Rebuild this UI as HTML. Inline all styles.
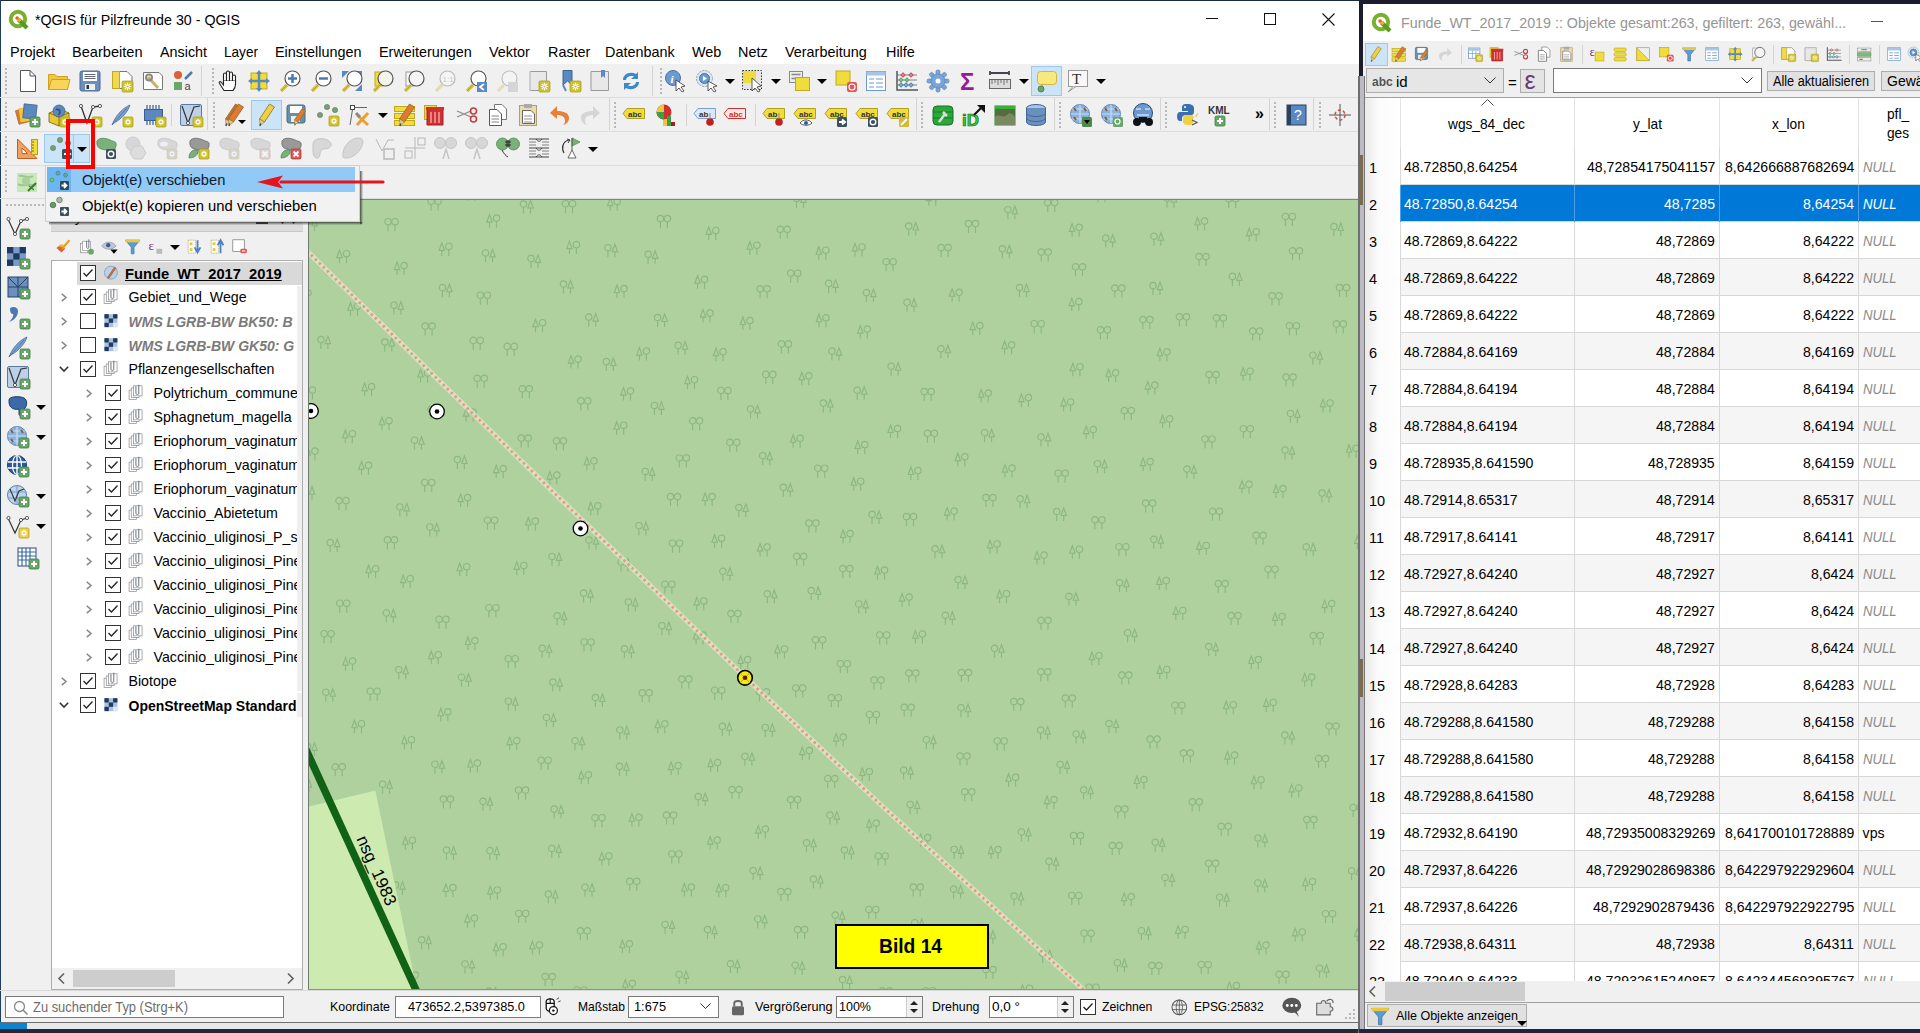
<!DOCTYPE html><html><head><meta charset="utf-8"><style>
html,body{margin:0;padding:0;}
body{width:1920px;height:1033px;position:relative;overflow:hidden;background:#f0f0f0;font-family:"Liberation Sans",sans-serif;}
div{position:absolute;box-sizing:border-box;}
.t{white-space:nowrap;}
svg{overflow:visible}
</style></head><body>
<div style="left:0px;top:0px;width:1363px;height:1033px;background:#f0f0f0;"></div>
<div style="left:0px;top:0px;width:1359px;height:38px;background:#fff;"></div>
<div style="left:0px;top:38px;width:1359px;height:26px;background:#fff;"></div>
<div style="left:0px;top:0px;width:1363px;height:1px;background:#1a2b3c;"></div>
<div style="left:0px;top:0px;width:1px;height:1022px;background:#1f3d5c;"></div>
<div style="left:1359px;top:0px;width:4px;height:76px;background:#1b1d2e;"></div>
<div class="t" style="left:35.00px;top:12.30px;font-size:15px;line-height:15px;color:#000;transform:scaleX(0.9495);transform-origin:0 0;">*QGIS für Pilzfreunde 30 - QGIS</div>
<div style="left:1206px;top:18px;width:12px;height:1px;background:#111"></div>
<div style="left:1264px;top:13px;width:12px;height:12px;border:1px solid #111"></div>
<svg style="position:absolute;left:1322px;top:13px;" width="13" height="13" viewBox="0 0 13 13"><path d="M0.5 0.5L12.5 12.5M12.5 0.5L0.5 12.5" stroke="#111" stroke-width="1.1"/></svg>
<div class="t" style="left:10.00px;top:44.30px;font-size:15px;line-height:15px;color:#000;transform:scaleX(0.9640);transform-origin:0 0;">Projekt</div>
<div class="t" style="left:72.00px;top:44.30px;font-size:15px;line-height:15px;color:#000;transform:scaleX(0.9718);transform-origin:0 0;">Bearbeiten</div>
<div class="t" style="left:159.70px;top:44.30px;font-size:15px;line-height:15px;color:#000;transform:scaleX(0.9555);transform-origin:0 0;">Ansicht</div>
<div class="t" style="left:223.90px;top:44.30px;font-size:15px;line-height:15px;color:#000;transform:scaleX(0.9062);transform-origin:0 0;">Layer</div>
<div class="t" style="left:275.40px;top:44.30px;font-size:15px;line-height:15px;color:#000;transform:scaleX(0.9600);transform-origin:0 0;">Einstellungen</div>
<div class="t" style="left:378.75px;top:44.30px;font-size:15px;line-height:15px;color:#000;transform:scaleX(0.9600);transform-origin:0 0;">Erweiterungen</div>
<div class="t" style="left:489.00px;top:44.30px;font-size:15px;line-height:15px;color:#000;transform:scaleX(0.9600);transform-origin:0 0;">Vektor</div>
<div class="t" style="left:547.50px;top:44.30px;font-size:15px;line-height:15px;color:#000;transform:scaleX(0.9600);transform-origin:0 0;">Raster</div>
<div class="t" style="left:604.80px;top:44.30px;font-size:15px;line-height:15px;color:#000;transform:scaleX(0.9600);transform-origin:0 0;">Datenbank</div>
<div class="t" style="left:692.00px;top:44.30px;font-size:15px;line-height:15px;color:#000;transform:scaleX(0.9600);transform-origin:0 0;">Web</div>
<div class="t" style="left:738.00px;top:44.30px;font-size:15px;line-height:15px;color:#000;transform:scaleX(0.9600);transform-origin:0 0;">Netz</div>
<div class="t" style="left:785.00px;top:44.30px;font-size:15px;line-height:15px;color:#000;transform:scaleX(0.9600);transform-origin:0 0;">Verarbeitung</div>
<div class="t" style="left:886.00px;top:44.30px;font-size:15px;line-height:15px;color:#000;transform:scaleX(0.9600);transform-origin:0 0;">Hilfe</div>
<div style="left:0px;top:97px;width:1359px;height:1px;background:#dcdcdc;"></div>
<div style="left:0px;top:131px;width:1359px;height:1px;background:#dcdcdc;"></div>
<div style="left:0px;top:165px;width:1359px;height:1px;background:#dcdcdc;"></div>
<div style="left:0px;top:198px;width:1359px;height:1px;background:#dcdcdc;"></div>
<div style="left:308px;top:199px;width:1050px;height:791px;background:#aed19e;"></div>
<div style="left:308px;top:199px;width:1050px;height:791px;overflow:hidden;background:#aed19e;"><svg width="1050" height="791" style="position:absolute;left:0;top:0"><g transform="translate(652.7,588.3)" fill="none" stroke="#8db780" stroke-width="1.15"><circle cx="4" cy="4.5" r="3.2"/><path d="M4 7.7V14"/><circle cx="11" cy="4.5" r="3.2"/><path d="M11 7.7V14"/></g><g transform="translate(685.2,537.4)" fill="none" stroke="#8db780" stroke-width="1.15"><circle cx="4" cy="4.5" r="3.2"/><path d="M4 7.7V14"/><circle cx="11" cy="4.5" r="3.2"/><path d="M11 7.7V14"/></g><g transform="translate(614.4,536.2)" fill="none" stroke="#8db780" stroke-width="1.15"><circle cx="4" cy="4.5" r="3.2"/><path d="M4 7.7V14"/><path d="M11 1L8.3 8.5H13.7Z"/><path d="M11 8.5V14"/></g><g transform="translate(608.7,634.1)" fill="none" stroke="#8db780" stroke-width="1.15"><path d="M4 1L1.3 8.5H6.7Z"/><path d="M4 8.5V14"/><circle cx="11" cy="4.5" r="3.2"/><path d="M11 7.7V14"/></g><g transform="translate(557.2,619.6)" fill="none" stroke="#8db780" stroke-width="1.15"><path d="M4 1L1.3 8.5H6.7Z"/><path d="M4 8.5V14"/><circle cx="11" cy="4.5" r="3.2"/><path d="M11 7.7V14"/></g><g transform="translate(679.0,646.1)" fill="none" stroke="#8db780" stroke-width="1.15"><path d="M4 1L1.3 8.5H6.7Z"/><path d="M4 8.5V14"/><circle cx="11" cy="4.5" r="3.2"/><path d="M11 7.7V14"/></g><g transform="translate(641.6,685.6)" fill="none" stroke="#8db780" stroke-width="1.15"><circle cx="4" cy="4.5" r="3.2"/><path d="M4 7.7V14"/><path d="M11 1L8.3 8.5H13.7Z"/><path d="M11 8.5V14"/></g><g transform="translate(649.0,504.2)" fill="none" stroke="#8db780" stroke-width="1.15"><circle cx="4" cy="4.5" r="3.2"/><path d="M4 7.7V14"/><path d="M11 1L8.3 8.5H13.7Z"/><path d="M11 8.5V14"/></g><g transform="translate(598.1,600.9)" fill="none" stroke="#8db780" stroke-width="1.15"><circle cx="4" cy="4.5" r="3.2"/><path d="M4 7.7V14"/><path d="M11 1L8.3 8.5H13.7Z"/><path d="M11 8.5V14"/></g><g transform="translate(550.3,568.0)" fill="none" stroke="#8db780" stroke-width="1.15"><path d="M4 1L1.3 8.5H6.7Z"/><path d="M4 8.5V14"/><circle cx="11" cy="4.5" r="3.2"/><path d="M11 7.7V14"/></g><g transform="translate(748.1,560.9)" fill="none" stroke="#8db780" stroke-width="1.15"><circle cx="4" cy="4.5" r="3.2"/><path d="M4 7.7V14"/><path d="M11 1L8.3 8.5H13.7Z"/><path d="M11 8.5V14"/></g><g transform="translate(696.6,573.8)" fill="none" stroke="#8db780" stroke-width="1.15"><path d="M4 1L1.3 8.5H6.7Z"/><path d="M4 8.5V14"/><circle cx="11" cy="4.5" r="3.2"/><path d="M11 7.7V14"/></g><g transform="translate(702.0,692.5)" fill="none" stroke="#8db780" stroke-width="1.15"><circle cx="4" cy="4.5" r="3.2"/><path d="M4 7.7V14"/><path d="M11 1L8.3 8.5H13.7Z"/><path d="M11 8.5V14"/></g><g transform="translate(737.0,657.8)" fill="none" stroke="#8db780" stroke-width="1.15"><circle cx="4" cy="4.5" r="3.2"/><path d="M4 7.7V14"/><path d="M11 1L8.3 8.5H13.7Z"/><path d="M11 8.5V14"/></g><g transform="translate(709.4,628.4)" fill="none" stroke="#8db780" stroke-width="1.15"><circle cx="4" cy="4.5" r="3.2"/><path d="M4 7.7V14"/><path d="M11 1L8.3 8.5H13.7Z"/><path d="M11 8.5V14"/></g><g transform="translate(701.8,498.0)" fill="none" stroke="#8db780" stroke-width="1.15"><circle cx="4" cy="4.5" r="3.2"/><path d="M4 7.7V14"/><circle cx="11" cy="4.5" r="3.2"/><path d="M11 7.7V14"/></g><g transform="translate(515.7,575.1)" fill="none" stroke="#8db780" stroke-width="1.15"><circle cx="4" cy="4.5" r="3.2"/><path d="M4 7.7V14"/><circle cx="11" cy="4.5" r="3.2"/><path d="M11 7.7V14"/></g><g transform="translate(601.2,683.5)" fill="none" stroke="#8db780" stroke-width="1.15"><circle cx="4" cy="4.5" r="3.2"/><path d="M4 7.7V14"/><circle cx="11" cy="4.5" r="3.2"/><path d="M11 7.7V14"/></g><g transform="translate(517.9,611.6)" fill="none" stroke="#8db780" stroke-width="1.15"><circle cx="4" cy="4.5" r="3.2"/><path d="M4 7.7V14"/><path d="M11 1L8.3 8.5H13.7Z"/><path d="M11 8.5V14"/></g><g transform="translate(728.8,468.3)" fill="none" stroke="#8db780" stroke-width="1.15"><circle cx="4" cy="4.5" r="3.2"/><path d="M4 7.7V14"/><circle cx="11" cy="4.5" r="3.2"/><path d="M11 7.7V14"/></g><g transform="translate(682.5,444.8)" fill="none" stroke="#8db780" stroke-width="1.15"><circle cx="4" cy="4.5" r="3.2"/><path d="M4 7.7V14"/><path d="M11 1L8.3 8.5H13.7Z"/><path d="M11 8.5V14"/></g><g transform="translate(557.4,510.9)" fill="none" stroke="#8db780" stroke-width="1.15"><circle cx="4" cy="4.5" r="3.2"/><path d="M4 7.7V14"/><circle cx="11" cy="4.5" r="3.2"/><path d="M11 7.7V14"/></g><g transform="translate(490.3,547.1)" fill="none" stroke="#8db780" stroke-width="1.15"><path d="M4 1L1.3 8.5H6.7Z"/><path d="M4 8.5V14"/><circle cx="11" cy="4.5" r="3.2"/><path d="M11 7.7V14"/></g><g transform="translate(591.6,566.6)" fill="none" stroke="#8db780" stroke-width="1.15"><circle cx="4" cy="4.5" r="3.2"/><path d="M4 7.7V14"/><path d="M11 1L8.3 8.5H13.7Z"/><path d="M11 8.5V14"/></g><g transform="translate(800.2,642.1)" fill="none" stroke="#8db780" stroke-width="1.15"><circle cx="4" cy="4.5" r="3.2"/><path d="M4 7.7V14"/><circle cx="11" cy="4.5" r="3.2"/><path d="M11 7.7V14"/></g><g transform="translate(633.3,411.8)" fill="none" stroke="#8db780" stroke-width="1.15"><circle cx="4" cy="4.5" r="3.2"/><path d="M4 7.7V14"/><path d="M11 1L8.3 8.5H13.7Z"/><path d="M11 8.5V14"/></g><g transform="translate(764.1,530.4)" fill="none" stroke="#8db780" stroke-width="1.15"><circle cx="4" cy="4.5" r="3.2"/><path d="M4 7.7V14"/><path d="M11 1L8.3 8.5H13.7Z"/><path d="M11 8.5V14"/></g><g transform="translate(478.6,596.0)" fill="none" stroke="#8db780" stroke-width="1.15"><circle cx="4" cy="4.5" r="3.2"/><path d="M4 7.7V14"/><circle cx="11" cy="4.5" r="3.2"/><path d="M11 7.7V14"/></g><g transform="translate(524.2,533.6)" fill="none" stroke="#8db780" stroke-width="1.15"><path d="M4 1L1.3 8.5H6.7Z"/><path d="M4 8.5V14"/><circle cx="11" cy="4.5" r="3.2"/><path d="M11 7.7V14"/></g><g transform="translate(759.8,691.9)" fill="none" stroke="#8db780" stroke-width="1.15"><circle cx="4" cy="4.5" r="3.2"/><path d="M4 7.7V14"/><circle cx="11" cy="4.5" r="3.2"/><path d="M11 7.7V14"/></g><g transform="translate(648.0,552.6)" fill="none" stroke="#8db780" stroke-width="1.15"><circle cx="4" cy="4.5" r="3.2"/><path d="M4 7.7V14"/><circle cx="11" cy="4.5" r="3.2"/><path d="M11 7.7V14"/></g><g transform="translate(673.9,730.7)" fill="none" stroke="#8db780" stroke-width="1.15"><circle cx="4" cy="4.5" r="3.2"/><path d="M4 7.7V14"/><path d="M11 1L8.3 8.5H13.7Z"/><path d="M11 8.5V14"/></g><g transform="translate(501.4,675.5)" fill="none" stroke="#8db780" stroke-width="1.15"><circle cx="4" cy="4.5" r="3.2"/><path d="M4 7.7V14"/><path d="M11 1L8.3 8.5H13.7Z"/><path d="M11 8.5V14"/></g><g transform="translate(729.0,416.8)" fill="none" stroke="#8db780" stroke-width="1.15"><circle cx="4" cy="4.5" r="3.2"/><path d="M4 7.7V14"/><circle cx="11" cy="4.5" r="3.2"/><path d="M11 7.7V14"/></g><g transform="translate(771.6,586.3)" fill="none" stroke="#8db780" stroke-width="1.15"><circle cx="4" cy="4.5" r="3.2"/><path d="M4 7.7V14"/><path d="M11 1L8.3 8.5H13.7Z"/><path d="M11 8.5V14"/></g><g transform="translate(494.5,639.3)" fill="none" stroke="#8db780" stroke-width="1.15"><circle cx="4" cy="4.5" r="3.2"/><path d="M4 7.7V14"/><path d="M11 1L8.3 8.5H13.7Z"/><path d="M11 8.5V14"/></g><g transform="translate(523.2,711.6)" fill="none" stroke="#8db780" stroke-width="1.15"><circle cx="4" cy="4.5" r="3.2"/><path d="M4 7.7V14"/><path d="M11 1L8.3 8.5H13.7Z"/><path d="M11 8.5V14"/></g><g transform="translate(753.3,494.6)" fill="none" stroke="#8db780" stroke-width="1.15"><circle cx="4" cy="4.5" r="3.2"/><path d="M4 7.7V14"/><circle cx="11" cy="4.5" r="3.2"/><path d="M11 7.7V14"/></g><g transform="translate(687.5,390.2)" fill="none" stroke="#8db780" stroke-width="1.15"><path d="M4 1L1.3 8.5H6.7Z"/><path d="M4 8.5V14"/><circle cx="11" cy="4.5" r="3.2"/><path d="M11 7.7V14"/></g><g transform="translate(602.7,719.2)" fill="none" stroke="#8db780" stroke-width="1.15"><circle cx="4" cy="4.5" r="3.2"/><path d="M4 7.7V14"/><path d="M11 1L8.3 8.5H13.7Z"/><path d="M11 8.5V14"/></g><g transform="translate(483.7,484.4)" fill="none" stroke="#8db780" stroke-width="1.15"><circle cx="4" cy="4.5" r="3.2"/><path d="M4 7.7V14"/><circle cx="11" cy="4.5" r="3.2"/><path d="M11 7.7V14"/></g><g transform="translate(735.0,596.1)" fill="none" stroke="#8db780" stroke-width="1.15"><path d="M4 1L1.3 8.5H6.7Z"/><path d="M4 8.5V14"/><circle cx="11" cy="4.5" r="3.2"/><path d="M11 7.7V14"/></g><g transform="translate(797.0,520.0)" fill="none" stroke="#8db780" stroke-width="1.15"><circle cx="4" cy="4.5" r="3.2"/><path d="M4 7.7V14"/><path d="M11 1L8.3 8.5H13.7Z"/><path d="M11 8.5V14"/></g><g transform="translate(809.8,471.6)" fill="none" stroke="#8db780" stroke-width="1.15"><circle cx="4" cy="4.5" r="3.2"/><path d="M4 7.7V14"/><circle cx="11" cy="4.5" r="3.2"/><path d="M11 7.7V14"/></g><g transform="translate(728.6,526.6)" fill="none" stroke="#8db780" stroke-width="1.15"><circle cx="4" cy="4.5" r="3.2"/><path d="M4 7.7V14"/><path d="M11 1L8.3 8.5H13.7Z"/><path d="M11 8.5V14"/></g><g transform="translate(824.9,576.0)" fill="none" stroke="#8db780" stroke-width="1.15"><path d="M4 1L1.3 8.5H6.7Z"/><path d="M4 8.5V14"/><circle cx="11" cy="4.5" r="3.2"/><path d="M11 7.7V14"/></g><g transform="translate(642.1,645.9)" fill="none" stroke="#8db780" stroke-width="1.15"><circle cx="4" cy="4.5" r="3.2"/><path d="M4 7.7V14"/><path d="M11 1L8.3 8.5H13.7Z"/><path d="M11 8.5V14"/></g><g transform="translate(566.2,652.4)" fill="none" stroke="#8db780" stroke-width="1.15"><circle cx="4" cy="4.5" r="3.2"/><path d="M4 7.7V14"/><circle cx="11" cy="4.5" r="3.2"/><path d="M11 7.7V14"/></g><g transform="translate(453.3,523.9)" fill="none" stroke="#8db780" stroke-width="1.15"><circle cx="4" cy="4.5" r="3.2"/><path d="M4 7.7V14"/><path d="M11 1L8.3 8.5H13.7Z"/><path d="M11 8.5V14"/></g><g transform="translate(649.4,469.0)" fill="none" stroke="#8db780" stroke-width="1.15"><circle cx="4" cy="4.5" r="3.2"/><path d="M4 7.7V14"/><circle cx="11" cy="4.5" r="3.2"/><path d="M11 7.7V14"/></g><g transform="translate(592.2,503.8)" fill="none" stroke="#8db780" stroke-width="1.15"><circle cx="4" cy="4.5" r="3.2"/><path d="M4 7.7V14"/><circle cx="11" cy="4.5" r="3.2"/><path d="M11 7.7V14"/></g><g transform="translate(446.3,625.6)" fill="none" stroke="#8db780" stroke-width="1.15"><path d="M4 1L1.3 8.5H6.7Z"/><path d="M4 8.5V14"/><circle cx="11" cy="4.5" r="3.2"/><path d="M11 7.7V14"/></g><g transform="translate(779.9,452.2)" fill="none" stroke="#8db780" stroke-width="1.15"><path d="M4 1L1.3 8.5H6.7Z"/><path d="M4 8.5V14"/><circle cx="11" cy="4.5" r="3.2"/><path d="M11 7.7V14"/></g><g transform="translate(562.0,476.5)" fill="none" stroke="#8db780" stroke-width="1.15"><circle cx="4" cy="4.5" r="3.2"/><path d="M4 7.7V14"/><circle cx="11" cy="4.5" r="3.2"/><path d="M11 7.7V14"/></g><g transform="translate(483.1,761.7)" fill="none" stroke="#8db780" stroke-width="1.15"><circle cx="4" cy="4.5" r="3.2"/><path d="M4 7.7V14"/><path d="M11 1L8.3 8.5H13.7Z"/><path d="M11 8.5V14"/></g><g transform="translate(853.0,673.9)" fill="none" stroke="#8db780" stroke-width="1.15"><circle cx="4" cy="4.5" r="3.2"/><path d="M4 7.7V14"/><path d="M11 1L8.3 8.5H13.7Z"/><path d="M11 8.5V14"/></g><g transform="translate(567.7,431.4)" fill="none" stroke="#8db780" stroke-width="1.15"><circle cx="4" cy="4.5" r="3.2"/><path d="M4 7.7V14"/><circle cx="11" cy="4.5" r="3.2"/><path d="M11 7.7V14"/></g><g transform="translate(871.4,549.5)" fill="none" stroke="#8db780" stroke-width="1.15"><circle cx="4" cy="4.5" r="3.2"/><path d="M4 7.7V14"/><circle cx="11" cy="4.5" r="3.2"/><path d="M11 7.7V14"/></g><g transform="translate(838.0,535.6)" fill="none" stroke="#8db780" stroke-width="1.15"><circle cx="4" cy="4.5" r="3.2"/><path d="M4 7.7V14"/><circle cx="11" cy="4.5" r="3.2"/><path d="M11 7.7V14"/></g><g transform="translate(847.8,465.9)" fill="none" stroke="#8db780" stroke-width="1.15"><path d="M4 1L1.3 8.5H6.7Z"/><path d="M4 8.5V14"/><circle cx="11" cy="4.5" r="3.2"/><path d="M11 7.7V14"/></g><g transform="translate(468.9,688.0)" fill="none" stroke="#8db780" stroke-width="1.15"><circle cx="4" cy="4.5" r="3.2"/><path d="M4 7.7V14"/><circle cx="11" cy="4.5" r="3.2"/><path d="M11 7.7V14"/></g><g transform="translate(637.5,748.0)" fill="none" stroke="#8db780" stroke-width="1.15"><circle cx="4" cy="4.5" r="3.2"/><path d="M4 7.7V14"/><path d="M11 1L8.3 8.5H13.7Z"/><path d="M11 8.5V14"/></g><g transform="translate(556.8,705.9)" fill="none" stroke="#8db780" stroke-width="1.15"><circle cx="4" cy="4.5" r="3.2"/><path d="M4 7.7V14"/><circle cx="11" cy="4.5" r="3.2"/><path d="M11 7.7V14"/></g><g transform="translate(596.8,469.5)" fill="none" stroke="#8db780" stroke-width="1.15"><circle cx="4" cy="4.5" r="3.2"/><path d="M4 7.7V14"/><circle cx="11" cy="4.5" r="3.2"/><path d="M11 7.7V14"/></g><g transform="translate(756.9,392.8)" fill="none" stroke="#8db780" stroke-width="1.15"><circle cx="4" cy="4.5" r="3.2"/><path d="M4 7.7V14"/><path d="M11 1L8.3 8.5H13.7Z"/><path d="M11 8.5V14"/></g><g transform="translate(418.4,760.3)" fill="none" stroke="#8db780" stroke-width="1.15"><circle cx="4" cy="4.5" r="3.2"/><path d="M4 7.7V14"/><path d="M11 1L8.3 8.5H13.7Z"/><path d="M11 8.5V14"/></g><g transform="translate(613.7,787.2)" fill="none" stroke="#8db780" stroke-width="1.15"><circle cx="4" cy="4.5" r="3.2"/><path d="M4 7.7V14"/><circle cx="11" cy="4.5" r="3.2"/><path d="M11 7.7V14"/></g><g transform="translate(570.4,787.3)" fill="none" stroke="#8db780" stroke-width="1.15"><circle cx="4" cy="4.5" r="3.2"/><path d="M4 7.7V14"/><circle cx="11" cy="4.5" r="3.2"/><path d="M11 7.7V14"/></g><g transform="translate(843.2,638.8)" fill="none" stroke="#8db780" stroke-width="1.15"><circle cx="4" cy="4.5" r="3.2"/><path d="M4 7.7V14"/><path d="M11 1L8.3 8.5H13.7Z"/><path d="M11 8.5V14"/></g><g transform="translate(725.0,351.6)" fill="none" stroke="#8db780" stroke-width="1.15"><path d="M4 1L1.3 8.5H6.7Z"/><path d="M4 8.5V14"/><circle cx="11" cy="4.5" r="3.2"/><path d="M11 7.7V14"/></g><g transform="translate(391.5,796.9)" fill="none" stroke="#8db780" stroke-width="1.15"><path d="M4 1L1.3 8.5H6.7Z"/><path d="M4 8.5V14"/><circle cx="11" cy="4.5" r="3.2"/><path d="M11 7.7V14"/></g><g transform="translate(678.0,340.4)" fill="none" stroke="#8db780" stroke-width="1.15"><path d="M4 1L1.3 8.5H6.7Z"/><path d="M4 8.5V14"/><circle cx="11" cy="4.5" r="3.2"/><path d="M11 7.7V14"/></g><g transform="translate(648.0,790.3)" fill="none" stroke="#8db780" stroke-width="1.15"><circle cx="4" cy="4.5" r="3.2"/><path d="M4 7.7V14"/><path d="M11 1L8.3 8.5H13.7Z"/><path d="M11 8.5V14"/></g><g transform="translate(528.3,460.2)" fill="none" stroke="#8db780" stroke-width="1.15"><circle cx="4" cy="4.5" r="3.2"/><path d="M4 7.7V14"/><circle cx="11" cy="4.5" r="3.2"/><path d="M11 7.7V14"/></g><g transform="translate(815.6,429.2)" fill="none" stroke="#8db780" stroke-width="1.15"><circle cx="4" cy="4.5" r="3.2"/><path d="M4 7.7V14"/><path d="M11 1L8.3 8.5H13.7Z"/><path d="M11 8.5V14"/></g><g transform="translate(880.2,598.3)" fill="none" stroke="#8db780" stroke-width="1.15"><circle cx="4" cy="4.5" r="3.2"/><path d="M4 7.7V14"/><circle cx="11" cy="4.5" r="3.2"/><path d="M11 7.7V14"/></g><g transform="translate(761.6,632.0)" fill="none" stroke="#8db780" stroke-width="1.15"><circle cx="4" cy="4.5" r="3.2"/><path d="M4 7.7V14"/><circle cx="11" cy="4.5" r="3.2"/><path d="M11 7.7V14"/></g><g transform="translate(447.5,488.3)" fill="none" stroke="#8db780" stroke-width="1.15"><circle cx="4" cy="4.5" r="3.2"/><path d="M4 7.7V14"/><circle cx="11" cy="4.5" r="3.2"/><path d="M11 7.7V14"/></g><g transform="translate(862.9,501.7)" fill="none" stroke="#8db780" stroke-width="1.15"><circle cx="4" cy="4.5" r="3.2"/><path d="M4 7.7V14"/><circle cx="11" cy="4.5" r="3.2"/><path d="M11 7.7V14"/></g><g transform="translate(590.1,393.6)" fill="none" stroke="#8db780" stroke-width="1.15"><path d="M4 1L1.3 8.5H6.7Z"/><path d="M4 8.5V14"/><circle cx="11" cy="4.5" r="3.2"/><path d="M11 7.7V14"/></g><g transform="translate(896.6,659.8)" fill="none" stroke="#8db780" stroke-width="1.15"><circle cx="4" cy="4.5" r="3.2"/><path d="M4 7.7V14"/><circle cx="11" cy="4.5" r="3.2"/><path d="M11 7.7V14"/></g><g transform="translate(812.2,693.1)" fill="none" stroke="#8db780" stroke-width="1.15"><path d="M4 1L1.3 8.5H6.7Z"/><path d="M4 8.5V14"/><circle cx="11" cy="4.5" r="3.2"/><path d="M11 7.7V14"/></g><g transform="translate(530.6,776.0)" fill="none" stroke="#8db780" stroke-width="1.15"><circle cx="4" cy="4.5" r="3.2"/><path d="M4 7.7V14"/><path d="M11 1L8.3 8.5H13.7Z"/><path d="M11 8.5V14"/></g><g transform="translate(420.0,586.1)" fill="none" stroke="#8db780" stroke-width="1.15"><circle cx="4" cy="4.5" r="3.2"/><path d="M4 7.7V14"/><circle cx="11" cy="4.5" r="3.2"/><path d="M11 7.7V14"/></g><g transform="translate(573.5,744.2)" fill="none" stroke="#8db780" stroke-width="1.15"><circle cx="4" cy="4.5" r="3.2"/><path d="M4 7.7V14"/><path d="M11 1L8.3 8.5H13.7Z"/><path d="M11 8.5V14"/></g><g transform="translate(772.1,729.7)" fill="none" stroke="#8db780" stroke-width="1.15"><circle cx="4" cy="4.5" r="3.2"/><path d="M4 7.7V14"/><circle cx="11" cy="4.5" r="3.2"/><path d="M11 7.7V14"/></g><g transform="translate(465.5,445.4)" fill="none" stroke="#8db780" stroke-width="1.15"><path d="M4 1L1.3 8.5H6.7Z"/><path d="M4 8.5V14"/><circle cx="11" cy="4.5" r="3.2"/><path d="M11 7.7V14"/></g><g transform="translate(367.1,770.9)" fill="none" stroke="#8db780" stroke-width="1.15"><circle cx="4" cy="4.5" r="3.2"/><path d="M4 7.7V14"/><path d="M11 1L8.3 8.5H13.7Z"/><path d="M11 8.5V14"/></g><g transform="translate(807.5,379.2)" fill="none" stroke="#8db780" stroke-width="1.15"><circle cx="4" cy="4.5" r="3.2"/><path d="M4 7.7V14"/><path d="M11 1L8.3 8.5H13.7Z"/><path d="M11 8.5V14"/></g><g transform="translate(445.7,715.4)" fill="none" stroke="#8db780" stroke-width="1.15"><circle cx="4" cy="4.5" r="3.2"/><path d="M4 7.7V14"/><path d="M11 1L8.3 8.5H13.7Z"/><path d="M11 8.5V14"/></g><g transform="translate(942.0,576.2)" fill="none" stroke="#8db780" stroke-width="1.15"><path d="M4 1L1.3 8.5H6.7Z"/><path d="M4 8.5V14"/><circle cx="11" cy="4.5" r="3.2"/><path d="M11 7.7V14"/></g><g transform="translate(866.1,725.9)" fill="none" stroke="#8db780" stroke-width="1.15"><path d="M4 1L1.3 8.5H6.7Z"/><path d="M4 8.5V14"/><circle cx="11" cy="4.5" r="3.2"/><path d="M11 7.7V14"/></g><g transform="translate(410.3,522.8)" fill="none" stroke="#8db780" stroke-width="1.15"><circle cx="4" cy="4.5" r="3.2"/><path d="M4 7.7V14"/><path d="M11 1L8.3 8.5H13.7Z"/><path d="M11 8.5V14"/></g><g transform="translate(760.4,345.7)" fill="none" stroke="#8db780" stroke-width="1.15"><path d="M4 1L1.3 8.5H6.7Z"/><path d="M4 8.5V14"/><circle cx="11" cy="4.5" r="3.2"/><path d="M11 7.7V14"/></g><g transform="translate(915.5,551.6)" fill="none" stroke="#8db780" stroke-width="1.15"><path d="M4 1L1.3 8.5H6.7Z"/><path d="M4 8.5V14"/><circle cx="11" cy="4.5" r="3.2"/><path d="M11 7.7V14"/></g><g transform="translate(777.0,783.7)" fill="none" stroke="#8db780" stroke-width="1.15"><circle cx="4" cy="4.5" r="3.2"/><path d="M4 7.7V14"/><circle cx="11" cy="4.5" r="3.2"/><path d="M11 7.7V14"/></g><g transform="translate(519.3,494.2)" fill="none" stroke="#8db780" stroke-width="1.15"><circle cx="4" cy="4.5" r="3.2"/><path d="M4 7.7V14"/><circle cx="11" cy="4.5" r="3.2"/><path d="M11 7.7V14"/></g><g transform="translate(646.0,376.1)" fill="none" stroke="#8db780" stroke-width="1.15"><circle cx="4" cy="4.5" r="3.2"/><path d="M4 7.7V14"/><path d="M11 1L8.3 8.5H13.7Z"/><path d="M11 8.5V14"/></g><g transform="translate(398.2,636.6)" fill="none" stroke="#8db780" stroke-width="1.15"><path d="M4 1L1.3 8.5H6.7Z"/><path d="M4 8.5V14"/><circle cx="11" cy="4.5" r="3.2"/><path d="M11 7.7V14"/></g><g transform="translate(730.7,750.1)" fill="none" stroke="#8db780" stroke-width="1.15"><circle cx="4" cy="4.5" r="3.2"/><path d="M4 7.7V14"/><path d="M11 1L8.3 8.5H13.7Z"/><path d="M11 8.5V14"/></g><g transform="translate(623.0,345.3)" fill="none" stroke="#8db780" stroke-width="1.15"><circle cx="4" cy="4.5" r="3.2"/><path d="M4 7.7V14"/><path d="M11 1L8.3 8.5H13.7Z"/><path d="M11 8.5V14"/></g><g transform="translate(499.2,387.0)" fill="none" stroke="#8db780" stroke-width="1.15"><circle cx="4" cy="4.5" r="3.2"/><path d="M4 7.7V14"/><path d="M11 1L8.3 8.5H13.7Z"/><path d="M11 8.5V14"/></g><g transform="translate(805.8,605.6)" fill="none" stroke="#8db780" stroke-width="1.15"><circle cx="4" cy="4.5" r="3.2"/><path d="M4 7.7V14"/><circle cx="11" cy="4.5" r="3.2"/><path d="M11 7.7V14"/></g><g transform="translate(406.8,684.2)" fill="none" stroke="#8db780" stroke-width="1.15"><path d="M4 1L1.3 8.5H6.7Z"/><path d="M4 8.5V14"/><circle cx="11" cy="4.5" r="3.2"/><path d="M11 7.7V14"/></g><g transform="translate(532.4,646.5)" fill="none" stroke="#8db780" stroke-width="1.15"><circle cx="4" cy="4.5" r="3.2"/><path d="M4 7.7V14"/><path d="M11 1L8.3 8.5H13.7Z"/><path d="M11 8.5V14"/></g><g transform="translate(402.7,486.7)" fill="none" stroke="#8db780" stroke-width="1.15"><circle cx="4" cy="4.5" r="3.2"/><path d="M4 7.7V14"/><circle cx="11" cy="4.5" r="3.2"/><path d="M11 7.7V14"/></g><g transform="translate(914.3,501.2)" fill="none" stroke="#8db780" stroke-width="1.15"><path d="M4 1L1.3 8.5H6.7Z"/><path d="M4 8.5V14"/><circle cx="11" cy="4.5" r="3.2"/><path d="M11 7.7V14"/></g><g transform="translate(839.9,762.0)" fill="none" stroke="#8db780" stroke-width="1.15"><circle cx="4" cy="4.5" r="3.2"/><path d="M4 7.7V14"/><circle cx="11" cy="4.5" r="3.2"/><path d="M11 7.7V14"/></g><g transform="translate(710.5,784.7)" fill="none" stroke="#8db780" stroke-width="1.15"><path d="M4 1L1.3 8.5H6.7Z"/><path d="M4 8.5V14"/><circle cx="11" cy="4.5" r="3.2"/><path d="M11 7.7V14"/></g><g transform="translate(847.2,377.0)" fill="none" stroke="#8db780" stroke-width="1.15"><path d="M4 1L1.3 8.5H6.7Z"/><path d="M4 8.5V14"/><circle cx="11" cy="4.5" r="3.2"/><path d="M11 7.7V14"/></g><g transform="translate(372.4,683.5)" fill="none" stroke="#8db780" stroke-width="1.15"><path d="M4 1L1.3 8.5H6.7Z"/><path d="M4 8.5V14"/><circle cx="11" cy="4.5" r="3.2"/><path d="M11 7.7V14"/></g><g transform="translate(864.6,793.1)" fill="none" stroke="#8db780" stroke-width="1.15"><path d="M4 1L1.3 8.5H6.7Z"/><path d="M4 8.5V14"/><circle cx="11" cy="4.5" r="3.2"/><path d="M11 7.7V14"/></g><g transform="translate(708.1,295.3)" fill="none" stroke="#8db780" stroke-width="1.15"><circle cx="4" cy="4.5" r="3.2"/><path d="M4 7.7V14"/><path d="M11 1L8.3 8.5H13.7Z"/><path d="M11 8.5V14"/></g><g transform="translate(565.5,366.5)" fill="none" stroke="#8db780" stroke-width="1.15"><path d="M4 1L1.3 8.5H6.7Z"/><path d="M4 8.5V14"/><circle cx="11" cy="4.5" r="3.2"/><path d="M11 7.7V14"/></g><g transform="translate(531.1,330.0)" fill="none" stroke="#8db780" stroke-width="1.15"><path d="M4 1L1.3 8.5H6.7Z"/><path d="M4 8.5V14"/><circle cx="11" cy="4.5" r="3.2"/><path d="M11 7.7V14"/></g><g transform="translate(823.4,792.4)" fill="none" stroke="#8db780" stroke-width="1.15"><circle cx="4" cy="4.5" r="3.2"/><path d="M4 7.7V14"/><path d="M11 1L8.3 8.5H13.7Z"/><path d="M11 8.5V14"/></g><g transform="translate(805.4,759.2)" fill="none" stroke="#8db780" stroke-width="1.15"><circle cx="4" cy="4.5" r="3.2"/><path d="M4 7.7V14"/><path d="M11 1L8.3 8.5H13.7Z"/><path d="M11 8.5V14"/></g><g transform="translate(310.4,740.3)" fill="none" stroke="#8db780" stroke-width="1.15"><path d="M4 1L1.3 8.5H6.7Z"/><path d="M4 8.5V14"/><circle cx="11" cy="4.5" r="3.2"/><path d="M11 7.7V14"/></g><g transform="translate(395.5,726.1)" fill="none" stroke="#8db780" stroke-width="1.15"><circle cx="4" cy="4.5" r="3.2"/><path d="M4 7.7V14"/><path d="M11 1L8.3 8.5H13.7Z"/><path d="M11 8.5V14"/></g><g transform="translate(673.9,294.0)" fill="none" stroke="#8db780" stroke-width="1.15"><circle cx="4" cy="4.5" r="3.2"/><path d="M4 7.7V14"/><circle cx="11" cy="4.5" r="3.2"/><path d="M11 7.7V14"/></g><g transform="translate(896.7,443.1)" fill="none" stroke="#8db780" stroke-width="1.15"><circle cx="4" cy="4.5" r="3.2"/><path d="M4 7.7V14"/><path d="M11 1L8.3 8.5H13.7Z"/><path d="M11 8.5V14"/></g><g transform="translate(359.1,562.1)" fill="none" stroke="#8db780" stroke-width="1.15"><path d="M4 1L1.3 8.5H6.7Z"/><path d="M4 8.5V14"/><circle cx="11" cy="4.5" r="3.2"/><path d="M11 7.7V14"/></g><g transform="translate(353.1,720.9)" fill="none" stroke="#8db780" stroke-width="1.15"><circle cx="4" cy="4.5" r="3.2"/><path d="M4 7.7V14"/><path d="M11 1L8.3 8.5H13.7Z"/><path d="M11 8.5V14"/></g><g transform="translate(594.5,313.0)" fill="none" stroke="#8db780" stroke-width="1.15"><circle cx="4" cy="4.5" r="3.2"/><path d="M4 7.7V14"/><circle cx="11" cy="4.5" r="3.2"/><path d="M11 7.7V14"/></g><g transform="translate(635.1,307.6)" fill="none" stroke="#8db780" stroke-width="1.15"><path d="M4 1L1.3 8.5H6.7Z"/><path d="M4 8.5V14"/><circle cx="11" cy="4.5" r="3.2"/><path d="M11 7.7V14"/></g><g transform="translate(907.6,693.7)" fill="none" stroke="#8db780" stroke-width="1.15"><circle cx="4" cy="4.5" r="3.2"/><path d="M4 7.7V14"/><path d="M11 1L8.3 8.5H13.7Z"/><path d="M11 8.5V14"/></g><g transform="translate(369.8,475.5)" fill="none" stroke="#8db780" stroke-width="1.15"><circle cx="4" cy="4.5" r="3.2"/><path d="M4 7.7V14"/><circle cx="11" cy="4.5" r="3.2"/><path d="M11 7.7V14"/></g><g transform="translate(345.8,520.3)" fill="none" stroke="#8db780" stroke-width="1.15"><path d="M4 1L1.3 8.5H6.7Z"/><path d="M4 8.5V14"/><circle cx="11" cy="4.5" r="3.2"/><path d="M11 7.7V14"/></g><g transform="translate(359.8,650.4)" fill="none" stroke="#8db780" stroke-width="1.15"><circle cx="4" cy="4.5" r="3.2"/><path d="M4 7.7V14"/><circle cx="11" cy="4.5" r="3.2"/><path d="M11 7.7V14"/></g><g transform="translate(829.4,727.2)" fill="none" stroke="#8db780" stroke-width="1.15"><circle cx="4" cy="4.5" r="3.2"/><path d="M4 7.7V14"/><path d="M11 1L8.3 8.5H13.7Z"/><path d="M11 8.5V14"/></g><g transform="translate(945.9,634.6)" fill="none" stroke="#8db780" stroke-width="1.15"><circle cx="4" cy="4.5" r="3.2"/><path d="M4 7.7V14"/><path d="M11 1L8.3 8.5H13.7Z"/><path d="M11 8.5V14"/></g><g transform="translate(945.8,679.4)" fill="none" stroke="#8db780" stroke-width="1.15"><circle cx="4" cy="4.5" r="3.2"/><path d="M4 7.7V14"/><path d="M11 1L8.3 8.5H13.7Z"/><path d="M11 8.5V14"/></g><g transform="translate(909.2,622.8)" fill="none" stroke="#8db780" stroke-width="1.15"><circle cx="4" cy="4.5" r="3.2"/><path d="M4 7.7V14"/><circle cx="11" cy="4.5" r="3.2"/><path d="M11 7.7V14"/></g><g transform="translate(598.9,267.0)" fill="none" stroke="#8db780" stroke-width="1.15"><path d="M4 1L1.3 8.5H6.7Z"/><path d="M4 8.5V14"/><circle cx="11" cy="4.5" r="3.2"/><path d="M11 7.7V14"/></g><g transform="translate(317.7,677.8)" fill="none" stroke="#8db780" stroke-width="1.15"><circle cx="4" cy="4.5" r="3.2"/><path d="M4 7.7V14"/><circle cx="11" cy="4.5" r="3.2"/><path d="M11 7.7V14"/></g><g transform="translate(917.4,782.1)" fill="none" stroke="#8db780" stroke-width="1.15"><path d="M4 1L1.3 8.5H6.7Z"/><path d="M4 8.5V14"/><circle cx="11" cy="4.5" r="3.2"/><path d="M11 7.7V14"/></g><g transform="translate(782.9,316.3)" fill="none" stroke="#8db780" stroke-width="1.15"><circle cx="4" cy="4.5" r="3.2"/><path d="M4 7.7V14"/><circle cx="11" cy="4.5" r="3.2"/><path d="M11 7.7V14"/></g><g transform="translate(541.7,277.7)" fill="none" stroke="#8db780" stroke-width="1.15"><path d="M4 1L1.3 8.5H6.7Z"/><path d="M4 8.5V14"/><circle cx="11" cy="4.5" r="3.2"/><path d="M11 7.7V14"/></g><g transform="translate(354.5,611.5)" fill="none" stroke="#8db780" stroke-width="1.15"><circle cx="4" cy="4.5" r="3.2"/><path d="M4 7.7V14"/><circle cx="11" cy="4.5" r="3.2"/><path d="M11 7.7V14"/></g><g transform="translate(425.6,793.7)" fill="none" stroke="#8db780" stroke-width="1.15"><circle cx="4" cy="4.5" r="3.2"/><path d="M4 7.7V14"/><path d="M11 1L8.3 8.5H13.7Z"/><path d="M11 8.5V14"/></g><g transform="translate(947.0,741.6)" fill="none" stroke="#8db780" stroke-width="1.15"><path d="M4 1L1.3 8.5H6.7Z"/><path d="M4 8.5V14"/><circle cx="11" cy="4.5" r="3.2"/><path d="M11 7.7V14"/></g><g transform="translate(806.9,343.2)" fill="none" stroke="#8db780" stroke-width="1.15"><circle cx="4" cy="4.5" r="3.2"/><path d="M4 7.7V14"/><circle cx="11" cy="4.5" r="3.2"/><path d="M11 7.7V14"/></g><g transform="translate(307.8,526.4)" fill="none" stroke="#8db780" stroke-width="1.15"><circle cx="4" cy="4.5" r="3.2"/><path d="M4 7.7V14"/><path d="M11 1L8.3 8.5H13.7Z"/><path d="M11 8.5V14"/></g><g transform="translate(455.3,390.3)" fill="none" stroke="#8db780" stroke-width="1.15"><circle cx="4" cy="4.5" r="3.2"/><path d="M4 7.7V14"/><path d="M11 1L8.3 8.5H13.7Z"/><path d="M11 8.5V14"/></g><g transform="translate(496.9,319.5)" fill="none" stroke="#8db780" stroke-width="1.15"><circle cx="4" cy="4.5" r="3.2"/><path d="M4 7.7V14"/><circle cx="11" cy="4.5" r="3.2"/><path d="M11 7.7V14"/></g><g transform="translate(319.9,613.8)" fill="none" stroke="#8db780" stroke-width="1.15"><path d="M4 1L1.3 8.5H6.7Z"/><path d="M4 8.5V14"/><circle cx="11" cy="4.5" r="3.2"/><path d="M11 7.7V14"/></g><g transform="translate(503.5,436.3)" fill="none" stroke="#8db780" stroke-width="1.15"><circle cx="4" cy="4.5" r="3.2"/><path d="M4 7.7V14"/><circle cx="11" cy="4.5" r="3.2"/><path d="M11 7.7V14"/></g><g transform="translate(313.3,779.8)" fill="none" stroke="#8db780" stroke-width="1.15"><path d="M4 1L1.3 8.5H6.7Z"/><path d="M4 8.5V14"/><circle cx="11" cy="4.5" r="3.2"/><path d="M11 7.7V14"/></g><g transform="translate(972.9,531.5)" fill="none" stroke="#8db780" stroke-width="1.15"><circle cx="4" cy="4.5" r="3.2"/><path d="M4 7.7V14"/><path d="M11 1L8.3 8.5H13.7Z"/><path d="M11 8.5V14"/></g><g transform="translate(546.7,400.4)" fill="none" stroke="#8db780" stroke-width="1.15"><circle cx="4" cy="4.5" r="3.2"/><path d="M4 7.7V14"/><path d="M11 1L8.3 8.5H13.7Z"/><path d="M11 8.5V14"/></g><g transform="translate(645.8,253.2)" fill="none" stroke="#8db780" stroke-width="1.15"><path d="M4 1L1.3 8.5H6.7Z"/><path d="M4 8.5V14"/><circle cx="11" cy="4.5" r="3.2"/><path d="M11 7.7V14"/></g><g transform="translate(863.8,406.9)" fill="none" stroke="#8db780" stroke-width="1.15"><path d="M4 1L1.3 8.5H6.7Z"/><path d="M4 8.5V14"/><circle cx="11" cy="4.5" r="3.2"/><path d="M11 7.7V14"/></g><g transform="translate(578.6,225.0)" fill="none" stroke="#8db780" stroke-width="1.15"><path d="M4 1L1.3 8.5H6.7Z"/><path d="M4 8.5V14"/><circle cx="11" cy="4.5" r="3.2"/><path d="M11 7.7V14"/></g><g transform="translate(603.4,430.6)" fill="none" stroke="#8db780" stroke-width="1.15"><path d="M4 1L1.3 8.5H6.7Z"/><path d="M4 8.5V14"/><circle cx="11" cy="4.5" r="3.2"/><path d="M11 7.7V14"/></g><g transform="translate(919.1,412.1)" fill="none" stroke="#8db780" stroke-width="1.15"><circle cx="4" cy="4.5" r="3.2"/><path d="M4 7.7V14"/><circle cx="11" cy="4.5" r="3.2"/><path d="M11 7.7V14"/></g><g transform="translate(398.6,559.1)" fill="none" stroke="#8db780" stroke-width="1.15"><path d="M4 1L1.3 8.5H6.7Z"/><path d="M4 8.5V14"/><circle cx="11" cy="4.5" r="3.2"/><path d="M11 7.7V14"/></g><g transform="translate(979.7,584.4)" fill="none" stroke="#8db780" stroke-width="1.15"><path d="M4 1L1.3 8.5H6.7Z"/><path d="M4 8.5V14"/><circle cx="11" cy="4.5" r="3.2"/><path d="M11 7.7V14"/></g><g transform="translate(432.9,552.8)" fill="none" stroke="#8db780" stroke-width="1.15"><circle cx="4" cy="4.5" r="3.2"/><path d="M4 7.7V14"/><path d="M11 1L8.3 8.5H13.7Z"/><path d="M11 8.5V14"/></g><g transform="translate(833.6,299.5)" fill="none" stroke="#8db780" stroke-width="1.15"><circle cx="4" cy="4.5" r="3.2"/><path d="M4 7.7V14"/><circle cx="11" cy="4.5" r="3.2"/><path d="M11 7.7V14"/></g><g transform="translate(954.2,498.9)" fill="none" stroke="#8db780" stroke-width="1.15"><path d="M4 1L1.3 8.5H6.7Z"/><path d="M4 8.5V14"/><circle cx="11" cy="4.5" r="3.2"/><path d="M11 7.7V14"/></g><g transform="translate(428.7,456.0)" fill="none" stroke="#8db780" stroke-width="1.15"><path d="M4 1L1.3 8.5H6.7Z"/><path d="M4 8.5V14"/><circle cx="11" cy="4.5" r="3.2"/><path d="M11 7.7V14"/></g><g transform="translate(386.2,593.1)" fill="none" stroke="#8db780" stroke-width="1.15"><circle cx="4" cy="4.5" r="3.2"/><path d="M4 7.7V14"/><path d="M11 1L8.3 8.5H13.7Z"/><path d="M11 8.5V14"/></g><g transform="translate(672.6,229.2)" fill="none" stroke="#8db780" stroke-width="1.15"><circle cx="4" cy="4.5" r="3.2"/><path d="M4 7.7V14"/><path d="M11 1L8.3 8.5H13.7Z"/><path d="M11 8.5V14"/></g><g transform="translate(993.4,678.1)" fill="none" stroke="#8db780" stroke-width="1.15"><path d="M4 1L1.3 8.5H6.7Z"/><path d="M4 8.5V14"/><circle cx="11" cy="4.5" r="3.2"/><path d="M11 7.7V14"/></g><g transform="translate(441.1,667.1)" fill="none" stroke="#8db780" stroke-width="1.15"><circle cx="4" cy="4.5" r="3.2"/><path d="M4 7.7V14"/><path d="M11 1L8.3 8.5H13.7Z"/><path d="M11 8.5V14"/></g><g transform="translate(283.0,614.2)" fill="none" stroke="#8db780" stroke-width="1.15"><circle cx="4" cy="4.5" r="3.2"/><path d="M4 7.7V14"/><circle cx="11" cy="4.5" r="3.2"/><path d="M11 7.7V14"/></g><g transform="translate(785.5,260.2)" fill="none" stroke="#8db780" stroke-width="1.15"><circle cx="4" cy="4.5" r="3.2"/><path d="M4 7.7V14"/><path d="M11 1L8.3 8.5H13.7Z"/><path d="M11 8.5V14"/></g><g transform="translate(693.0,264.6)" fill="none" stroke="#8db780" stroke-width="1.15"><path d="M4 1L1.3 8.5H6.7Z"/><path d="M4 8.5V14"/><circle cx="11" cy="4.5" r="3.2"/><path d="M11 7.7V14"/></g><g transform="translate(841.8,335.8)" fill="none" stroke="#8db780" stroke-width="1.15"><circle cx="4" cy="4.5" r="3.2"/><path d="M4 7.7V14"/><path d="M11 1L8.3 8.5H13.7Z"/><path d="M11 8.5V14"/></g><g transform="translate(994.8,616.0)" fill="none" stroke="#8db780" stroke-width="1.15"><circle cx="4" cy="4.5" r="3.2"/><path d="M4 7.7V14"/><circle cx="11" cy="4.5" r="3.2"/><path d="M11 7.7V14"/></g><g transform="translate(474.2,798.1)" fill="none" stroke="#8db780" stroke-width="1.15"><path d="M4 1L1.3 8.5H6.7Z"/><path d="M4 8.5V14"/><circle cx="11" cy="4.5" r="3.2"/><path d="M11 7.7V14"/></g><g transform="translate(889.2,760.9)" fill="none" stroke="#8db780" stroke-width="1.15"><circle cx="4" cy="4.5" r="3.2"/><path d="M4 7.7V14"/><circle cx="11" cy="4.5" r="3.2"/><path d="M11 7.7V14"/></g><g transform="translate(448.1,343.4)" fill="none" stroke="#8db780" stroke-width="1.15"><path d="M4 1L1.3 8.5H6.7Z"/><path d="M4 8.5V14"/><circle cx="11" cy="4.5" r="3.2"/><path d="M11 7.7V14"/></g><g transform="translate(812.3,207.1)" fill="none" stroke="#8db780" stroke-width="1.15"><circle cx="4" cy="4.5" r="3.2"/><path d="M4 7.7V14"/><circle cx="11" cy="4.5" r="3.2"/><path d="M11 7.7V14"/></g><g transform="translate(307.5,562.8)" fill="none" stroke="#8db780" stroke-width="1.15"><circle cx="4" cy="4.5" r="3.2"/><path d="M4 7.7V14"/><path d="M11 1L8.3 8.5H13.7Z"/><path d="M11 8.5V14"/></g><g transform="translate(906.2,380.1)" fill="none" stroke="#8db780" stroke-width="1.15"><circle cx="4" cy="4.5" r="3.2"/><path d="M4 7.7V14"/><circle cx="11" cy="4.5" r="3.2"/><path d="M11 7.7V14"/></g><g transform="translate(939.3,456.0)" fill="none" stroke="#8db780" stroke-width="1.15"><path d="M4 1L1.3 8.5H6.7Z"/><path d="M4 8.5V14"/><circle cx="11" cy="4.5" r="3.2"/><path d="M11 7.7V14"/></g><g transform="translate(264.9,786.4)" fill="none" stroke="#8db780" stroke-width="1.15"><circle cx="4" cy="4.5" r="3.2"/><path d="M4 7.7V14"/><circle cx="11" cy="4.5" r="3.2"/><path d="M11 7.7V14"/></g><g transform="translate(485.6,726.0)" fill="none" stroke="#8db780" stroke-width="1.15"><circle cx="4" cy="4.5" r="3.2"/><path d="M4 7.7V14"/><circle cx="11" cy="4.5" r="3.2"/><path d="M11 7.7V14"/></g><g transform="translate(992.7,473.5)" fill="none" stroke="#8db780" stroke-width="1.15"><path d="M4 1L1.3 8.5H6.7Z"/><path d="M4 8.5V14"/><circle cx="11" cy="4.5" r="3.2"/><path d="M11 7.7V14"/></g><g transform="translate(545.7,241.0)" fill="none" stroke="#8db780" stroke-width="1.15"><path d="M4 1L1.3 8.5H6.7Z"/><path d="M4 8.5V14"/><circle cx="11" cy="4.5" r="3.2"/><path d="M11 7.7V14"/></g><g transform="translate(729.0,233.4)" fill="none" stroke="#8db780" stroke-width="1.15"><circle cx="4" cy="4.5" r="3.2"/><path d="M4 7.7V14"/><path d="M11 1L8.3 8.5H13.7Z"/><path d="M11 8.5V14"/></g><g transform="translate(330.2,489.3)" fill="none" stroke="#8db780" stroke-width="1.15"><circle cx="4" cy="4.5" r="3.2"/><path d="M4 7.7V14"/><circle cx="11" cy="4.5" r="3.2"/><path d="M11 7.7V14"/></g><g transform="translate(410.9,367.8)" fill="none" stroke="#8db780" stroke-width="1.15"><circle cx="4" cy="4.5" r="3.2"/><path d="M4 7.7V14"/><path d="M11 1L8.3 8.5H13.7Z"/><path d="M11 8.5V14"/></g><g transform="translate(1006.6,555.1)" fill="none" stroke="#8db780" stroke-width="1.15"><circle cx="4" cy="4.5" r="3.2"/><path d="M4 7.7V14"/><circle cx="11" cy="4.5" r="3.2"/><path d="M11 7.7V14"/></g><g transform="translate(1017.0,522.5)" fill="none" stroke="#8db780" stroke-width="1.15"><circle cx="4" cy="4.5" r="3.2"/><path d="M4 7.7V14"/><circle cx="11" cy="4.5" r="3.2"/><path d="M11 7.7V14"/></g><g transform="translate(1039.6,667.2)" fill="none" stroke="#8db780" stroke-width="1.15"><circle cx="4" cy="4.5" r="3.2"/><path d="M4 7.7V14"/><path d="M11 1L8.3 8.5H13.7Z"/><path d="M11 8.5V14"/></g><g transform="translate(471.3,283.8)" fill="none" stroke="#8db780" stroke-width="1.15"><circle cx="4" cy="4.5" r="3.2"/><path d="M4 7.7V14"/><path d="M11 1L8.3 8.5H13.7Z"/><path d="M11 8.5V14"/></g><g transform="translate(283.4,494.0)" fill="none" stroke="#8db780" stroke-width="1.15"><circle cx="4" cy="4.5" r="3.2"/><path d="M4 7.7V14"/><path d="M11 1L8.3 8.5H13.7Z"/><path d="M11 8.5V14"/></g><g transform="translate(744.7,308.0)" fill="none" stroke="#8db780" stroke-width="1.15"><circle cx="4" cy="4.5" r="3.2"/><path d="M4 7.7V14"/><path d="M11 1L8.3 8.5H13.7Z"/><path d="M11 8.5V14"/></g><g transform="translate(263.0,537.2)" fill="none" stroke="#8db780" stroke-width="1.15"><circle cx="4" cy="4.5" r="3.2"/><path d="M4 7.7V14"/><path d="M11 1L8.3 8.5H13.7Z"/><path d="M11 8.5V14"/></g><g transform="translate(268.3,727.3)" fill="none" stroke="#8db780" stroke-width="1.15"><circle cx="4" cy="4.5" r="3.2"/><path d="M4 7.7V14"/><circle cx="11" cy="4.5" r="3.2"/><path d="M11 7.7V14"/></g><g transform="translate(352.9,380.7)" fill="none" stroke="#8db780" stroke-width="1.15"><circle cx="4" cy="4.5" r="3.2"/><path d="M4 7.7V14"/><circle cx="11" cy="4.5" r="3.2"/><path d="M11 7.7V14"/></g><g transform="translate(384.1,431.5)" fill="none" stroke="#8db780" stroke-width="1.15"><path d="M4 1L1.3 8.5H6.7Z"/><path d="M4 8.5V14"/><circle cx="11" cy="4.5" r="3.2"/><path d="M11 7.7V14"/></g><g transform="translate(983.2,728.4)" fill="none" stroke="#8db780" stroke-width="1.15"><path d="M4 1L1.3 8.5H6.7Z"/><path d="M4 8.5V14"/><circle cx="11" cy="4.5" r="3.2"/><path d="M11 7.7V14"/></g><g transform="translate(269.3,571.3)" fill="none" stroke="#8db780" stroke-width="1.15"><path d="M4 1L1.3 8.5H6.7Z"/><path d="M4 8.5V14"/><circle cx="11" cy="4.5" r="3.2"/><path d="M11 7.7V14"/></g><g transform="translate(349.9,422.2)" fill="none" stroke="#8db780" stroke-width="1.15"><circle cx="4" cy="4.5" r="3.2"/><path d="M4 7.7V14"/><path d="M11 1L8.3 8.5H13.7Z"/><path d="M11 8.5V14"/></g><g transform="translate(418.9,410.1)" fill="none" stroke="#8db780" stroke-width="1.15"><circle cx="4" cy="4.5" r="3.2"/><path d="M4 7.7V14"/><circle cx="11" cy="4.5" r="3.2"/><path d="M11 7.7V14"/></g><g transform="translate(1001.2,432.1)" fill="none" stroke="#8db780" stroke-width="1.15"><circle cx="4" cy="4.5" r="3.2"/><path d="M4 7.7V14"/><circle cx="11" cy="4.5" r="3.2"/><path d="M11 7.7V14"/></g><g transform="translate(831.1,258.1)" fill="none" stroke="#8db780" stroke-width="1.15"><path d="M4 1L1.3 8.5H6.7Z"/><path d="M4 8.5V14"/><circle cx="11" cy="4.5" r="3.2"/><path d="M11 7.7V14"/></g><g transform="translate(273.0,683.7)" fill="none" stroke="#8db780" stroke-width="1.15"><circle cx="4" cy="4.5" r="3.2"/><path d="M4 7.7V14"/><path d="M11 1L8.3 8.5H13.7Z"/><path d="M11 8.5V14"/></g><g transform="translate(674.0,766.1)" fill="none" stroke="#8db780" stroke-width="1.15"><circle cx="4" cy="4.5" r="3.2"/><path d="M4 7.7V14"/><circle cx="11" cy="4.5" r="3.2"/><path d="M11 7.7V14"/></g><g transform="translate(887.2,341.9)" fill="none" stroke="#8db780" stroke-width="1.15"><path d="M4 1L1.3 8.5H6.7Z"/><path d="M4 8.5V14"/><circle cx="11" cy="4.5" r="3.2"/><path d="M11 7.7V14"/></g><g transform="translate(505.7,264.7)" fill="none" stroke="#8db780" stroke-width="1.15"><circle cx="4" cy="4.5" r="3.2"/><path d="M4 7.7V14"/><circle cx="11" cy="4.5" r="3.2"/><path d="M11 7.7V14"/></g><g transform="translate(963.1,412.9)" fill="none" stroke="#8db780" stroke-width="1.15"><path d="M4 1L1.3 8.5H6.7Z"/><path d="M4 8.5V14"/><circle cx="11" cy="4.5" r="3.2"/><path d="M11 7.7V14"/></g><g transform="translate(233.2,773.0)" fill="none" stroke="#8db780" stroke-width="1.15"><circle cx="4" cy="4.5" r="3.2"/><path d="M4 7.7V14"/><circle cx="11" cy="4.5" r="3.2"/><path d="M11 7.7V14"/></g><g transform="translate(746.1,269.7)" fill="none" stroke="#8db780" stroke-width="1.15"><circle cx="4" cy="4.5" r="3.2"/><path d="M4 7.7V14"/><circle cx="11" cy="4.5" r="3.2"/><path d="M11 7.7V14"/></g><g transform="translate(545.2,186.7)" fill="none" stroke="#8db780" stroke-width="1.15"><circle cx="4" cy="4.5" r="3.2"/><path d="M4 7.7V14"/><path d="M11 1L8.3 8.5H13.7Z"/><path d="M11 8.5V14"/></g><g transform="translate(1041.1,603.9)" fill="none" stroke="#8db780" stroke-width="1.15"><circle cx="4" cy="4.5" r="3.2"/><path d="M4 7.7V14"/><circle cx="11" cy="4.5" r="3.2"/><path d="M11 7.7V14"/></g><g transform="translate(612.2,188.0)" fill="none" stroke="#8db780" stroke-width="1.15"><circle cx="4" cy="4.5" r="3.2"/><path d="M4 7.7V14"/><circle cx="11" cy="4.5" r="3.2"/><path d="M11 7.7V14"/></g><g transform="translate(1054.7,557.1)" fill="none" stroke="#8db780" stroke-width="1.15"><circle cx="4" cy="4.5" r="3.2"/><path d="M4 7.7V14"/><path d="M11 1L8.3 8.5H13.7Z"/><path d="M11 8.5V14"/></g><g transform="translate(1053.4,518.0)" fill="none" stroke="#8db780" stroke-width="1.15"><path d="M4 1L1.3 8.5H6.7Z"/><path d="M4 8.5V14"/><circle cx="11" cy="4.5" r="3.2"/><path d="M11 7.7V14"/></g><g transform="translate(579.1,162.7)" fill="none" stroke="#8db780" stroke-width="1.15"><circle cx="4" cy="4.5" r="3.2"/><path d="M4 7.7V14"/><path d="M11 1L8.3 8.5H13.7Z"/><path d="M11 8.5V14"/></g><g transform="translate(481.1,234.8)" fill="none" stroke="#8db780" stroke-width="1.15"><path d="M4 1L1.3 8.5H6.7Z"/><path d="M4 8.5V14"/><circle cx="11" cy="4.5" r="3.2"/><path d="M11 7.7V14"/></g><g transform="translate(1057.0,476.8)" fill="none" stroke="#8db780" stroke-width="1.15"><circle cx="4" cy="4.5" r="3.2"/><path d="M4 7.7V14"/><path d="M11 1L8.3 8.5H13.7Z"/><path d="M11 8.5V14"/></g><g transform="translate(530.8,365.0)" fill="none" stroke="#8db780" stroke-width="1.15"><circle cx="4" cy="4.5" r="3.2"/><path d="M4 7.7V14"/><circle cx="11" cy="4.5" r="3.2"/><path d="M11 7.7V14"/></g><g transform="translate(628.9,145.3)" fill="none" stroke="#8db780" stroke-width="1.15"><circle cx="4" cy="4.5" r="3.2"/><path d="M4 7.7V14"/><path d="M11 1L8.3 8.5H13.7Z"/><path d="M11 8.5V14"/></g><g transform="translate(615.4,229.8)" fill="none" stroke="#8db780" stroke-width="1.15"><circle cx="4" cy="4.5" r="3.2"/><path d="M4 7.7V14"/><circle cx="11" cy="4.5" r="3.2"/><path d="M11 7.7V14"/></g><g transform="translate(900.5,307.8)" fill="none" stroke="#8db780" stroke-width="1.15"><circle cx="4" cy="4.5" r="3.2"/><path d="M4 7.7V14"/><circle cx="11" cy="4.5" r="3.2"/><path d="M11 7.7V14"/></g><g transform="translate(312.4,445.3)" fill="none" stroke="#8db780" stroke-width="1.15"><circle cx="4" cy="4.5" r="3.2"/><path d="M4 7.7V14"/><path d="M11 1L8.3 8.5H13.7Z"/><path d="M11 8.5V14"/></g><g transform="translate(835.8,181.6)" fill="none" stroke="#8db780" stroke-width="1.15"><path d="M4 1L1.3 8.5H6.7Z"/><path d="M4 8.5V14"/><circle cx="11" cy="4.5" r="3.2"/><path d="M11 7.7V14"/></g><g transform="translate(236.3,690.5)" fill="none" stroke="#8db780" stroke-width="1.15"><circle cx="4" cy="4.5" r="3.2"/><path d="M4 7.7V14"/><path d="M11 1L8.3 8.5H13.7Z"/><path d="M11 8.5V14"/></g><g transform="translate(774.2,226.1)" fill="none" stroke="#8db780" stroke-width="1.15"><path d="M4 1L1.3 8.5H6.7Z"/><path d="M4 8.5V14"/><circle cx="11" cy="4.5" r="3.2"/><path d="M11 7.7V14"/></g><g transform="translate(1013.5,710.2)" fill="none" stroke="#8db780" stroke-width="1.15"><circle cx="4" cy="4.5" r="3.2"/><path d="M4 7.7V14"/><circle cx="11" cy="4.5" r="3.2"/><path d="M11 7.7V14"/></g><g transform="translate(930.0,280.8)" fill="none" stroke="#8db780" stroke-width="1.15"><path d="M4 1L1.3 8.5H6.7Z"/><path d="M4 8.5V14"/><circle cx="11" cy="4.5" r="3.2"/><path d="M11 7.7V14"/></g><g transform="translate(595.0,98.8)" fill="none" stroke="#8db780" stroke-width="1.15"><circle cx="4" cy="4.5" r="3.2"/><path d="M4 7.7V14"/><path d="M11 1L8.3 8.5H13.7Z"/><path d="M11 8.5V14"/></g><g transform="translate(944.1,331.8)" fill="none" stroke="#8db780" stroke-width="1.15"><circle cx="4" cy="4.5" r="3.2"/><path d="M4 7.7V14"/><circle cx="11" cy="4.5" r="3.2"/><path d="M11 7.7V14"/></g><g transform="translate(484.7,352.8)" fill="none" stroke="#8db780" stroke-width="1.15"><circle cx="4" cy="4.5" r="3.2"/><path d="M4 7.7V14"/><circle cx="11" cy="4.5" r="3.2"/><path d="M11 7.7V14"/></g><g transform="translate(1055.3,763.3)" fill="none" stroke="#8db780" stroke-width="1.15"><path d="M4 1L1.3 8.5H6.7Z"/><path d="M4 8.5V14"/><circle cx="11" cy="4.5" r="3.2"/><path d="M11 7.7V14"/></g><g transform="translate(956.0,365.7)" fill="none" stroke="#8db780" stroke-width="1.15"><circle cx="4" cy="4.5" r="3.2"/><path d="M4 7.7V14"/><circle cx="11" cy="4.5" r="3.2"/><path d="M11 7.7V14"/></g><g transform="translate(511.3,199.5)" fill="none" stroke="#8db780" stroke-width="1.15"><circle cx="4" cy="4.5" r="3.2"/><path d="M4 7.7V14"/><path d="M11 1L8.3 8.5H13.7Z"/><path d="M11 8.5V14"/></g><g transform="translate(874.9,265.6)" fill="none" stroke="#8db780" stroke-width="1.15"><circle cx="4" cy="4.5" r="3.2"/><path d="M4 7.7V14"/><path d="M11 1L8.3 8.5H13.7Z"/><path d="M11 8.5V14"/></g><g transform="translate(692.6,141.3)" fill="none" stroke="#8db780" stroke-width="1.15"><path d="M4 1L1.3 8.5H6.7Z"/><path d="M4 8.5V14"/><circle cx="11" cy="4.5" r="3.2"/><path d="M11 7.7V14"/></g><g transform="translate(669.2,189.6)" fill="none" stroke="#8db780" stroke-width="1.15"><path d="M4 1L1.3 8.5H6.7Z"/><path d="M4 8.5V14"/><circle cx="11" cy="4.5" r="3.2"/><path d="M11 7.7V14"/></g><g transform="translate(751.6,198.4)" fill="none" stroke="#8db780" stroke-width="1.15"><path d="M4 1L1.3 8.5H6.7Z"/><path d="M4 8.5V14"/><circle cx="11" cy="4.5" r="3.2"/><path d="M11 7.7V14"/></g><g transform="translate(1012.7,400.1)" fill="none" stroke="#8db780" stroke-width="1.15"><path d="M4 1L1.3 8.5H6.7Z"/><path d="M4 8.5V14"/><circle cx="11" cy="4.5" r="3.2"/><path d="M11 7.7V14"/></g><g transform="translate(893.0,235.4)" fill="none" stroke="#8db780" stroke-width="1.15"><circle cx="4" cy="4.5" r="3.2"/><path d="M4 7.7V14"/><circle cx="11" cy="4.5" r="3.2"/><path d="M11 7.7V14"/></g><g transform="translate(360.5,339.7)" fill="none" stroke="#8db780" stroke-width="1.15"><circle cx="4" cy="4.5" r="3.2"/><path d="M4 7.7V14"/><circle cx="11" cy="4.5" r="3.2"/><path d="M11 7.7V14"/></g><g transform="translate(289.8,652.4)" fill="none" stroke="#8db780" stroke-width="1.15"><path d="M4 1L1.3 8.5H6.7Z"/><path d="M4 8.5V14"/><circle cx="11" cy="4.5" r="3.2"/><path d="M11 7.7V14"/></g><g transform="translate(1051.5,374.8)" fill="none" stroke="#8db780" stroke-width="1.15"><circle cx="4" cy="4.5" r="3.2"/><path d="M4 7.7V14"/><circle cx="11" cy="4.5" r="3.2"/><path d="M11 7.7V14"/></g><g transform="translate(967.0,770.8)" fill="none" stroke="#8db780" stroke-width="1.15"><circle cx="4" cy="4.5" r="3.2"/><path d="M4 7.7V14"/><circle cx="11" cy="4.5" r="3.2"/><path d="M11 7.7V14"/></g><g transform="translate(994.2,343.3)" fill="none" stroke="#8db780" stroke-width="1.15"><circle cx="4" cy="4.5" r="3.2"/><path d="M4 7.7V14"/><path d="M11 1L8.3 8.5H13.7Z"/><path d="M11 8.5V14"/></g><g transform="translate(426.8,304.0)" fill="none" stroke="#8db780" stroke-width="1.15"><circle cx="4" cy="4.5" r="3.2"/><path d="M4 7.7V14"/><path d="M11 1L8.3 8.5H13.7Z"/><path d="M11 8.5V14"/></g><g transform="translate(1054.1,416.9)" fill="none" stroke="#8db780" stroke-width="1.15"><path d="M4 1L1.3 8.5H6.7Z"/><path d="M4 8.5V14"/><circle cx="11" cy="4.5" r="3.2"/><path d="M11 7.7V14"/></g><g transform="translate(272.0,438.4)" fill="none" stroke="#8db780" stroke-width="1.15"><circle cx="4" cy="4.5" r="3.2"/><path d="M4 7.7V14"/><circle cx="11" cy="4.5" r="3.2"/><path d="M11 7.7V14"/></g><g transform="translate(519.9,147.6)" fill="none" stroke="#8db780" stroke-width="1.15"><circle cx="4" cy="4.5" r="3.2"/><path d="M4 7.7V14"/><path d="M11 1L8.3 8.5H13.7Z"/><path d="M11 8.5V14"/></g><g transform="translate(850.6,215.3)" fill="none" stroke="#8db780" stroke-width="1.15"><path d="M4 1L1.3 8.5H6.7Z"/><path d="M4 8.5V14"/><circle cx="11" cy="4.5" r="3.2"/><path d="M11 7.7V14"/></g><g transform="translate(1007.5,764.7)" fill="none" stroke="#8db780" stroke-width="1.15"><circle cx="4" cy="4.5" r="3.2"/><path d="M4 7.7V14"/><path d="M11 1L8.3 8.5H13.7Z"/><path d="M11 8.5V14"/></g><g transform="translate(240.8,478.6)" fill="none" stroke="#8db780" stroke-width="1.15"><circle cx="4" cy="4.5" r="3.2"/><path d="M4 7.7V14"/><path d="M11 1L8.3 8.5H13.7Z"/><path d="M11 8.5V14"/></g><g transform="translate(660.8,122.1)" fill="none" stroke="#8db780" stroke-width="1.15"><path d="M4 1L1.3 8.5H6.7Z"/><path d="M4 8.5V14"/><circle cx="11" cy="4.5" r="3.2"/><path d="M11 7.7V14"/></g><g transform="translate(184.1,743.2)" fill="none" stroke="#8db780" stroke-width="1.15"><path d="M4 1L1.3 8.5H6.7Z"/><path d="M4 8.5V14"/><circle cx="11" cy="4.5" r="3.2"/><path d="M11 7.7V14"/></g><g transform="translate(897.0,171.1)" fill="none" stroke="#8db780" stroke-width="1.15"><circle cx="4" cy="4.5" r="3.2"/><path d="M4 7.7V14"/><circle cx="11" cy="4.5" r="3.2"/><path d="M11 7.7V14"/></g><g transform="translate(629.1,44.1)" fill="none" stroke="#8db780" stroke-width="1.15"><circle cx="4" cy="4.5" r="3.2"/><path d="M4 7.7V14"/><circle cx="11" cy="4.5" r="3.2"/><path d="M11 7.7V14"/></g><g transform="translate(640.1,88.8)" fill="none" stroke="#8db780" stroke-width="1.15"><path d="M4 1L1.3 8.5H6.7Z"/><path d="M4 8.5V14"/><circle cx="11" cy="4.5" r="3.2"/><path d="M11 7.7V14"/></g><g transform="translate(453.8,170.9)" fill="none" stroke="#8db780" stroke-width="1.15"><circle cx="4" cy="4.5" r="3.2"/><path d="M4 7.7V14"/><circle cx="11" cy="4.5" r="3.2"/><path d="M11 7.7V14"/></g><g transform="translate(596.7,22.5)" fill="none" stroke="#8db780" stroke-width="1.15"><circle cx="4" cy="4.5" r="3.2"/><path d="M4 7.7V14"/><path d="M11 1L8.3 8.5H13.7Z"/><path d="M11 8.5V14"/></g><g transform="translate(707.5,84.1)" fill="none" stroke="#8db780" stroke-width="1.15"><circle cx="4" cy="4.5" r="3.2"/><path d="M4 7.7V14"/><path d="M11 1L8.3 8.5H13.7Z"/><path d="M11 8.5V14"/></g><g transform="translate(404.0,148.2)" fill="none" stroke="#8db780" stroke-width="1.15"><path d="M4 1L1.3 8.5H6.7Z"/><path d="M4 8.5V14"/><circle cx="11" cy="4.5" r="3.2"/><path d="M11 7.7V14"/></g><g transform="translate(316.3,398.4)" fill="none" stroke="#8db780" stroke-width="1.15"><circle cx="4" cy="4.5" r="3.2"/><path d="M4 7.7V14"/><path d="M11 1L8.3 8.5H13.7Z"/><path d="M11 8.5V14"/></g><g transform="translate(931.3,225.2)" fill="none" stroke="#8db780" stroke-width="1.15"><circle cx="4" cy="4.5" r="3.2"/><path d="M4 7.7V14"/><circle cx="11" cy="4.5" r="3.2"/><path d="M11 7.7V14"/></g><g transform="translate(973.0,246.6)" fill="none" stroke="#8db780" stroke-width="1.15"><circle cx="4" cy="4.5" r="3.2"/><path d="M4 7.7V14"/><path d="M11 1L8.3 8.5H13.7Z"/><path d="M11 8.5V14"/></g><g transform="translate(763.5,63.3)" fill="none" stroke="#8db780" stroke-width="1.15"><circle cx="4" cy="4.5" r="3.2"/><path d="M4 7.7V14"/><circle cx="11" cy="4.5" r="3.2"/><path d="M11 7.7V14"/></g><g transform="translate(796.6,169.3)" fill="none" stroke="#8db780" stroke-width="1.15"><path d="M4 1L1.3 8.5H6.7Z"/><path d="M4 8.5V14"/><circle cx="11" cy="4.5" r="3.2"/><path d="M11 7.7V14"/></g><g transform="translate(239.8,644.9)" fill="none" stroke="#8db780" stroke-width="1.15"><circle cx="4" cy="4.5" r="3.2"/><path d="M4 7.7V14"/><path d="M11 1L8.3 8.5H13.7Z"/><path d="M11 8.5V14"/></g><g transform="translate(271.5,389.6)" fill="none" stroke="#8db780" stroke-width="1.15"><circle cx="4" cy="4.5" r="3.2"/><path d="M4 7.7V14"/><path d="M11 1L8.3 8.5H13.7Z"/><path d="M11 8.5V14"/></g><g transform="translate(690.3,45.3)" fill="none" stroke="#8db780" stroke-width="1.15"><circle cx="4" cy="4.5" r="3.2"/><path d="M4 7.7V14"/><path d="M11 1L8.3 8.5H13.7Z"/><path d="M11 8.5V14"/></g><g transform="translate(1021.3,796.0)" fill="none" stroke="#8db780" stroke-width="1.15"><circle cx="4" cy="4.5" r="3.2"/><path d="M4 7.7V14"/><circle cx="11" cy="4.5" r="3.2"/><path d="M11 7.7V14"/></g><g transform="translate(229.1,556.7)" fill="none" stroke="#8db780" stroke-width="1.15"><circle cx="4" cy="4.5" r="3.2"/><path d="M4 7.7V14"/><circle cx="11" cy="4.5" r="3.2"/><path d="M11 7.7V14"/></g><g transform="translate(931.1,167.7)" fill="none" stroke="#8db780" stroke-width="1.15"><path d="M4 1L1.3 8.5H6.7Z"/><path d="M4 8.5V14"/><circle cx="11" cy="4.5" r="3.2"/><path d="M11 7.7V14"/></g><g transform="translate(230.2,444.8)" fill="none" stroke="#8db780" stroke-width="1.15"><circle cx="4" cy="4.5" r="3.2"/><path d="M4 7.7V14"/><path d="M11 1L8.3 8.5H13.7Z"/><path d="M11 8.5V14"/></g><g transform="translate(178.3,686.4)" fill="none" stroke="#8db780" stroke-width="1.15"><path d="M4 1L1.3 8.5H6.7Z"/><path d="M4 8.5V14"/><circle cx="11" cy="4.5" r="3.2"/><path d="M11 7.7V14"/></g><g transform="translate(1059.1,634.3)" fill="none" stroke="#8db780" stroke-width="1.15"><circle cx="4" cy="4.5" r="3.2"/><path d="M4 7.7V14"/><circle cx="11" cy="4.5" r="3.2"/><path d="M11 7.7V14"/></g><g transform="translate(309.0,358.6)" fill="none" stroke="#8db780" stroke-width="1.15"><circle cx="4" cy="4.5" r="3.2"/><path d="M4 7.7V14"/><path d="M11 1L8.3 8.5H13.7Z"/><path d="M11 8.5V14"/></g><g transform="translate(722.2,120.2)" fill="none" stroke="#8db780" stroke-width="1.15"><circle cx="4" cy="4.5" r="3.2"/><path d="M4 7.7V14"/><circle cx="11" cy="4.5" r="3.2"/><path d="M11 7.7V14"/></g><g transform="translate(1045.2,728.8)" fill="none" stroke="#8db780" stroke-width="1.15"><path d="M4 1L1.3 8.5H6.7Z"/><path d="M4 8.5V14"/><circle cx="11" cy="4.5" r="3.2"/><path d="M11 7.7V14"/></g><g transform="translate(206.5,586.5)" fill="none" stroke="#8db780" stroke-width="1.15"><circle cx="4" cy="4.5" r="3.2"/><path d="M4 7.7V14"/><circle cx="11" cy="4.5" r="3.2"/><path d="M11 7.7V14"/></g><g transform="translate(384.8,397.4)" fill="none" stroke="#8db780" stroke-width="1.15"><path d="M4 1L1.3 8.5H6.7Z"/><path d="M4 8.5V14"/><circle cx="11" cy="4.5" r="3.2"/><path d="M11 7.7V14"/></g><g transform="translate(158.4,559.5)" fill="none" stroke="#8db780" stroke-width="1.15"><path d="M4 1L1.3 8.5H6.7Z"/><path d="M4 8.5V14"/><circle cx="11" cy="4.5" r="3.2"/><path d="M11 7.7V14"/></g><g transform="translate(196.3,497.7)" fill="none" stroke="#8db780" stroke-width="1.15"><circle cx="4" cy="4.5" r="3.2"/><path d="M4 7.7V14"/><path d="M11 1L8.3 8.5H13.7Z"/><path d="M11 8.5V14"/></g><g transform="translate(177.8,647.1)" fill="none" stroke="#8db780" stroke-width="1.15"><circle cx="4" cy="4.5" r="3.2"/><path d="M4 7.7V14"/><path d="M11 1L8.3 8.5H13.7Z"/><path d="M11 8.5V14"/></g><g transform="translate(128.8,508.3)" fill="none" stroke="#8db780" stroke-width="1.15"><path d="M4 1L1.3 8.5H6.7Z"/><path d="M4 8.5V14"/><circle cx="11" cy="4.5" r="3.2"/><path d="M11 7.7V14"/></g><g transform="translate(375.5,176.2)" fill="none" stroke="#8db780" stroke-width="1.15"><path d="M4 1L1.3 8.5H6.7Z"/><path d="M4 8.5V14"/><circle cx="11" cy="4.5" r="3.2"/><path d="M11 7.7V14"/></g><g transform="translate(574.1,58.2)" fill="none" stroke="#8db780" stroke-width="1.15"><circle cx="4" cy="4.5" r="3.2"/><path d="M4 7.7V14"/><circle cx="11" cy="4.5" r="3.2"/><path d="M11 7.7V14"/></g><g transform="translate(242.1,605.6)" fill="none" stroke="#8db780" stroke-width="1.15"><circle cx="4" cy="4.5" r="3.2"/><path d="M4 7.7V14"/><path d="M11 1L8.3 8.5H13.7Z"/><path d="M11 8.5V14"/></g><g transform="translate(245.1,412.3)" fill="none" stroke="#8db780" stroke-width="1.15"><circle cx="4" cy="4.5" r="3.2"/><path d="M4 7.7V14"/><path d="M11 1L8.3 8.5H13.7Z"/><path d="M11 8.5V14"/></g><g transform="translate(1045.3,336.0)" fill="none" stroke="#8db780" stroke-width="1.15"><path d="M4 1L1.3 8.5H6.7Z"/><path d="M4 8.5V14"/><circle cx="11" cy="4.5" r="3.2"/><path d="M11 7.7V14"/></g><g transform="translate(656.5,20.0)" fill="none" stroke="#8db780" stroke-width="1.15"><circle cx="4" cy="4.5" r="3.2"/><path d="M4 7.7V14"/><circle cx="11" cy="4.5" r="3.2"/><path d="M11 7.7V14"/></g><g transform="translate(709.4,194.1)" fill="none" stroke="#8db780" stroke-width="1.15"><path d="M4 1L1.3 8.5H6.7Z"/><path d="M4 8.5V14"/><circle cx="11" cy="4.5" r="3.2"/><path d="M11 7.7V14"/></g><g transform="translate(735.7,-0.9)" fill="none" stroke="#8db780" stroke-width="1.15"><circle cx="4" cy="4.5" r="3.2"/><path d="M4 7.7V14"/><circle cx="11" cy="4.5" r="3.2"/><path d="M11 7.7V14"/></g><g transform="translate(867.4,113.3)" fill="none" stroke="#8db780" stroke-width="1.15"><circle cx="4" cy="4.5" r="3.2"/><path d="M4 7.7V14"/><circle cx="11" cy="4.5" r="3.2"/><path d="M11 7.7V14"/></g><g transform="translate(507.0,114.3)" fill="none" stroke="#8db780" stroke-width="1.15"><path d="M4 1L1.3 8.5H6.7Z"/><path d="M4 8.5V14"/><circle cx="11" cy="4.5" r="3.2"/><path d="M11 7.7V14"/></g><g transform="translate(760.9,163.2)" fill="none" stroke="#8db780" stroke-width="1.15"><path d="M4 1L1.3 8.5H6.7Z"/><path d="M4 8.5V14"/><circle cx="11" cy="4.5" r="3.2"/><path d="M11 7.7V14"/></g><g transform="translate(830.9,116.0)" fill="none" stroke="#8db780" stroke-width="1.15"><circle cx="4" cy="4.5" r="3.2"/><path d="M4 7.7V14"/><circle cx="11" cy="4.5" r="3.2"/><path d="M11 7.7V14"/></g><g transform="translate(430.9,117.0)" fill="none" stroke="#8db780" stroke-width="1.15"><path d="M4 1L1.3 8.5H6.7Z"/><path d="M4 8.5V14"/><circle cx="11" cy="4.5" r="3.2"/><path d="M11 7.7V14"/></g><g transform="translate(153.0,760.4)" fill="none" stroke="#8db780" stroke-width="1.15"><circle cx="4" cy="4.5" r="3.2"/><path d="M4 7.7V14"/><path d="M11 1L8.3 8.5H13.7Z"/><path d="M11 8.5V14"/></g><g transform="translate(220.4,741.4)" fill="none" stroke="#8db780" stroke-width="1.15"><path d="M4 1L1.3 8.5H6.7Z"/><path d="M4 8.5V14"/><circle cx="11" cy="4.5" r="3.2"/><path d="M11 7.7V14"/></g><g transform="translate(417.8,238.8)" fill="none" stroke="#8db780" stroke-width="1.15"><circle cx="4" cy="4.5" r="3.2"/><path d="M4 7.7V14"/><circle cx="11" cy="4.5" r="3.2"/><path d="M11 7.7V14"/></g><g transform="translate(560.0,310.9)" fill="none" stroke="#8db780" stroke-width="1.15"><circle cx="4" cy="4.5" r="3.2"/><path d="M4 7.7V14"/><path d="M11 1L8.3 8.5H13.7Z"/><path d="M11 8.5V14"/></g><g transform="translate(234.4,513.9)" fill="none" stroke="#8db780" stroke-width="1.15"><circle cx="4" cy="4.5" r="3.2"/><path d="M4 7.7V14"/><path d="M11 1L8.3 8.5H13.7Z"/><path d="M11 8.5V14"/></g><g transform="translate(385.5,75.8)" fill="none" stroke="#8db780" stroke-width="1.15"><path d="M4 1L1.3 8.5H6.7Z"/><path d="M4 8.5V14"/><circle cx="11" cy="4.5" r="3.2"/><path d="M11 7.7V14"/></g><g transform="translate(176.6,787.6)" fill="none" stroke="#8db780" stroke-width="1.15"><circle cx="4" cy="4.5" r="3.2"/><path d="M4 7.7V14"/><path d="M11 1L8.3 8.5H13.7Z"/><path d="M11 8.5V14"/></g><g transform="translate(206.7,709.9)" fill="none" stroke="#8db780" stroke-width="1.15"><circle cx="4" cy="4.5" r="3.2"/><path d="M4 7.7V14"/><circle cx="11" cy="4.5" r="3.2"/><path d="M11 7.7V14"/></g><g transform="translate(367.3,254.4)" fill="none" stroke="#8db780" stroke-width="1.15"><circle cx="4" cy="4.5" r="3.2"/><path d="M4 7.7V14"/><circle cx="11" cy="4.5" r="3.2"/><path d="M11 7.7V14"/></g><g transform="translate(802.8,84.6)" fill="none" stroke="#8db780" stroke-width="1.15"><circle cx="4" cy="4.5" r="3.2"/><path d="M4 7.7V14"/><circle cx="11" cy="4.5" r="3.2"/><path d="M11 7.7V14"/></g><g transform="translate(326.9,322.2)" fill="none" stroke="#8db780" stroke-width="1.15"><circle cx="4" cy="4.5" r="3.2"/><path d="M4 7.7V14"/><path d="M11 1L8.3 8.5H13.7Z"/><path d="M11 8.5V14"/></g><g transform="translate(380.6,217.3)" fill="none" stroke="#8db780" stroke-width="1.15"><circle cx="4" cy="4.5" r="3.2"/><path d="M4 7.7V14"/><circle cx="11" cy="4.5" r="3.2"/><path d="M11 7.7V14"/></g><g transform="translate(793.7,34.6)" fill="none" stroke="#8db780" stroke-width="1.15"><circle cx="4" cy="4.5" r="3.2"/><path d="M4 7.7V14"/><path d="M11 1L8.3 8.5H13.7Z"/><path d="M11 8.5V14"/></g><g transform="translate(841.0,82.1)" fill="none" stroke="#8db780" stroke-width="1.15"><circle cx="4" cy="4.5" r="3.2"/><path d="M4 7.7V14"/><path d="M11 1L8.3 8.5H13.7Z"/><path d="M11 8.5V14"/></g><g transform="translate(887.0,53.1)" fill="none" stroke="#8db780" stroke-width="1.15"><circle cx="4" cy="4.5" r="3.2"/><path d="M4 7.7V14"/><circle cx="11" cy="4.5" r="3.2"/><path d="M11 7.7V14"/></g><g transform="translate(197.7,537.1)" fill="none" stroke="#8db780" stroke-width="1.15"><path d="M4 1L1.3 8.5H6.7Z"/><path d="M4 8.5V14"/><circle cx="11" cy="4.5" r="3.2"/><path d="M11 7.7V14"/></g><g transform="translate(393.1,293.0)" fill="none" stroke="#8db780" stroke-width="1.15"><path d="M4 1L1.3 8.5H6.7Z"/><path d="M4 8.5V14"/><circle cx="11" cy="4.5" r="3.2"/><path d="M11 7.7V14"/></g><g transform="translate(450.7,252.2)" fill="none" stroke="#8db780" stroke-width="1.15"><circle cx="4" cy="4.5" r="3.2"/><path d="M4 7.7V14"/><path d="M11 1L8.3 8.5H13.7Z"/><path d="M11 8.5V14"/></g><g transform="translate(345.6,114.0)" fill="none" stroke="#8db780" stroke-width="1.15"><circle cx="4" cy="4.5" r="3.2"/><path d="M4 7.7V14"/><path d="M11 1L8.3 8.5H13.7Z"/><path d="M11 8.5V14"/></g><g transform="translate(129.0,790.5)" fill="none" stroke="#8db780" stroke-width="1.15"><path d="M4 1L1.3 8.5H6.7Z"/><path d="M4 8.5V14"/><circle cx="11" cy="4.5" r="3.2"/><path d="M11 7.7V14"/></g><g transform="translate(489.8,172.3)" fill="none" stroke="#8db780" stroke-width="1.15"><path d="M4 1L1.3 8.5H6.7Z"/><path d="M4 8.5V14"/><circle cx="11" cy="4.5" r="3.2"/><path d="M11 7.7V14"/></g><g transform="translate(342.4,201.9)" fill="none" stroke="#8db780" stroke-width="1.15"><circle cx="4" cy="4.5" r="3.2"/><path d="M4 7.7V14"/><path d="M11 1L8.3 8.5H13.7Z"/><path d="M11 8.5V14"/></g><g transform="translate(304.7,221.7)" fill="none" stroke="#8db780" stroke-width="1.15"><path d="M4 1L1.3 8.5H6.7Z"/><path d="M4 8.5V14"/><circle cx="11" cy="4.5" r="3.2"/><path d="M11 7.7V14"/></g><g transform="translate(358.5,293.1)" fill="none" stroke="#8db780" stroke-width="1.15"><circle cx="4" cy="4.5" r="3.2"/><path d="M4 7.7V14"/><circle cx="11" cy="4.5" r="3.2"/><path d="M11 7.7V14"/></g><g transform="translate(131.4,595.5)" fill="none" stroke="#8db780" stroke-width="1.15"><circle cx="4" cy="4.5" r="3.2"/><path d="M4 7.7V14"/><circle cx="11" cy="4.5" r="3.2"/><path d="M11 7.7V14"/></g><g transform="translate(974.0,173.6)" fill="none" stroke="#8db780" stroke-width="1.15"><circle cx="4" cy="4.5" r="3.2"/><path d="M4 7.7V14"/><circle cx="11" cy="4.5" r="3.2"/><path d="M11 7.7V14"/></g><g transform="translate(548.3,125.6)" fill="none" stroke="#8db780" stroke-width="1.15"><path d="M4 1L1.3 8.5H6.7Z"/><path d="M4 8.5V14"/><circle cx="11" cy="4.5" r="3.2"/><path d="M11 7.7V14"/></g><g transform="translate(109.6,736.3)" fill="none" stroke="#8db780" stroke-width="1.15"><circle cx="4" cy="4.5" r="3.2"/><path d="M4 7.7V14"/><path d="M11 1L8.3 8.5H13.7Z"/><path d="M11 8.5V14"/></g><g transform="translate(277.0,336.6)" fill="none" stroke="#8db780" stroke-width="1.15"><circle cx="4" cy="4.5" r="3.2"/><path d="M4 7.7V14"/><path d="M11 1L8.3 8.5H13.7Z"/><path d="M11 8.5V14"/></g><g transform="translate(616.8,-6.9)" fill="none" stroke="#8db780" stroke-width="1.15"><path d="M4 1L1.3 8.5H6.7Z"/><path d="M4 8.5V14"/><circle cx="11" cy="4.5" r="3.2"/><path d="M11 7.7V14"/></g><g transform="translate(788.4,126.3)" fill="none" stroke="#8db780" stroke-width="1.15"><circle cx="4" cy="4.5" r="3.2"/><path d="M4 7.7V14"/><circle cx="11" cy="4.5" r="3.2"/><path d="M11 7.7V14"/></g><g transform="translate(133.9,684.0)" fill="none" stroke="#8db780" stroke-width="1.15"><path d="M4 1L1.3 8.5H6.7Z"/><path d="M4 8.5V14"/><circle cx="11" cy="4.5" r="3.2"/><path d="M11 7.7V14"/></g><g transform="translate(122.9,560.7)" fill="none" stroke="#8db780" stroke-width="1.15"><circle cx="4" cy="4.5" r="3.2"/><path d="M4 7.7V14"/><path d="M11 1L8.3 8.5H13.7Z"/><path d="M11 8.5V14"/></g><g transform="translate(155.4,714.6)" fill="none" stroke="#8db780" stroke-width="1.15"><path d="M4 1L1.3 8.5H6.7Z"/><path d="M4 8.5V14"/><circle cx="11" cy="4.5" r="3.2"/><path d="M11 7.7V14"/></g><g transform="translate(759.8,98.1)" fill="none" stroke="#8db780" stroke-width="1.15"><path d="M4 1L1.3 8.5H6.7Z"/><path d="M4 8.5V14"/><circle cx="11" cy="4.5" r="3.2"/><path d="M11 7.7V14"/></g><g transform="translate(469.4,140.4)" fill="none" stroke="#8db780" stroke-width="1.15"><circle cx="4" cy="4.5" r="3.2"/><path d="M4 7.7V14"/><circle cx="11" cy="4.5" r="3.2"/><path d="M11 7.7V14"/></g><g transform="translate(96.2,771.6)" fill="none" stroke="#8db780" stroke-width="1.15"><path d="M4 1L1.3 8.5H6.7Z"/><path d="M4 8.5V14"/><circle cx="11" cy="4.5" r="3.2"/><path d="M11 7.7V14"/></g><g transform="translate(448.1,85.3)" fill="none" stroke="#8db780" stroke-width="1.15"><circle cx="4" cy="4.5" r="3.2"/><path d="M4 7.7V14"/><circle cx="11" cy="4.5" r="3.2"/><path d="M11 7.7V14"/></g><g transform="translate(695.9,6.2)" fill="none" stroke="#8db780" stroke-width="1.15"><circle cx="4" cy="4.5" r="3.2"/><path d="M4 7.7V14"/><path d="M11 1L8.3 8.5H13.7Z"/><path d="M11 8.5V14"/></g><g transform="translate(278.8,302.3)" fill="none" stroke="#8db780" stroke-width="1.15"><path d="M4 1L1.3 8.5H6.7Z"/><path d="M4 8.5V14"/><circle cx="11" cy="4.5" r="3.2"/><path d="M11 7.7V14"/></g><g transform="translate(134.5,646.6)" fill="none" stroke="#8db780" stroke-width="1.15"><circle cx="4" cy="4.5" r="3.2"/><path d="M4 7.7V14"/><path d="M11 1L8.3 8.5H13.7Z"/><path d="M11 8.5V14"/></g><g transform="translate(841.9,32.7)" fill="none" stroke="#8db780" stroke-width="1.15"><circle cx="4" cy="4.5" r="3.2"/><path d="M4 7.7V14"/><path d="M11 1L8.3 8.5H13.7Z"/><path d="M11 8.5V14"/></g><g transform="translate(333.2,267.9)" fill="none" stroke="#8db780" stroke-width="1.15"><circle cx="4" cy="4.5" r="3.2"/><path d="M4 7.7V14"/><path d="M11 1L8.3 8.5H13.7Z"/><path d="M11 8.5V14"/></g><g transform="translate(1010.0,289.5)" fill="none" stroke="#8db780" stroke-width="1.15"><circle cx="4" cy="4.5" r="3.2"/><path d="M4 7.7V14"/><path d="M11 1L8.3 8.5H13.7Z"/><path d="M11 8.5V14"/></g><g transform="translate(964.0,285.0)" fill="none" stroke="#8db780" stroke-width="1.15"><path d="M4 1L1.3 8.5H6.7Z"/><path d="M4 8.5V14"/><circle cx="11" cy="4.5" r="3.2"/><path d="M11 7.7V14"/></g><g transform="translate(729.2,48.5)" fill="none" stroke="#8db780" stroke-width="1.15"><circle cx="4" cy="4.5" r="3.2"/><path d="M4 7.7V14"/><circle cx="11" cy="4.5" r="3.2"/><path d="M11 7.7V14"/></g><g transform="translate(83.5,681.6)" fill="none" stroke="#8db780" stroke-width="1.15"><circle cx="4" cy="4.5" r="3.2"/><path d="M4 7.7V14"/><path d="M11 1L8.3 8.5H13.7Z"/><path d="M11 8.5V14"/></g><g transform="translate(86.8,466.2)" fill="none" stroke="#8db780" stroke-width="1.15"><circle cx="4" cy="4.5" r="3.2"/><path d="M4 7.7V14"/><path d="M11 1L8.3 8.5H13.7Z"/><path d="M11 8.5V14"/></g><g transform="translate(216.3,317.5)" fill="none" stroke="#8db780" stroke-width="1.15"><path d="M4 1L1.3 8.5H6.7Z"/><path d="M4 8.5V14"/><circle cx="11" cy="4.5" r="3.2"/><path d="M11 7.7V14"/></g><g transform="translate(274.9,257.3)" fill="none" stroke="#8db780" stroke-width="1.15"><path d="M4 1L1.3 8.5H6.7Z"/><path d="M4 8.5V14"/><circle cx="11" cy="4.5" r="3.2"/><path d="M11 7.7V14"/></g><g transform="translate(240.0,352.9)" fill="none" stroke="#8db780" stroke-width="1.15"><circle cx="4" cy="4.5" r="3.2"/><path d="M4 7.7V14"/><path d="M11 1L8.3 8.5H13.7Z"/><path d="M11 8.5V14"/></g><g transform="translate(402.6,334.7)" fill="none" stroke="#8db780" stroke-width="1.15"><path d="M4 1L1.3 8.5H6.7Z"/><path d="M4 8.5V14"/><circle cx="11" cy="4.5" r="3.2"/><path d="M11 7.7V14"/></g><g transform="translate(819.8,-19.3)" fill="none" stroke="#8db780" stroke-width="1.15"><circle cx="4" cy="4.5" r="3.2"/><path d="M4 7.7V14"/><path d="M11 1L8.3 8.5H13.7Z"/><path d="M11 8.5V14"/></g><g transform="translate(396.8,26.9)" fill="none" stroke="#8db780" stroke-width="1.15"><path d="M4 1L1.3 8.5H6.7Z"/><path d="M4 8.5V14"/><circle cx="11" cy="4.5" r="3.2"/><path d="M11 7.7V14"/></g><g transform="translate(196.2,455.2)" fill="none" stroke="#8db780" stroke-width="1.15"><circle cx="4" cy="4.5" r="3.2"/><path d="M4 7.7V14"/><circle cx="11" cy="4.5" r="3.2"/><path d="M11 7.7V14"/></g><g transform="translate(93.4,636.7)" fill="none" stroke="#8db780" stroke-width="1.15"><path d="M4 1L1.3 8.5H6.7Z"/><path d="M4 8.5V14"/><circle cx="11" cy="4.5" r="3.2"/><path d="M11 7.7V14"/></g><g transform="translate(904.3,114.4)" fill="none" stroke="#8db780" stroke-width="1.15"><circle cx="4" cy="4.5" r="3.2"/><path d="M4 7.7V14"/><circle cx="11" cy="4.5" r="3.2"/><path d="M11 7.7V14"/></g><g transform="translate(58.0,728.3)" fill="none" stroke="#8db780" stroke-width="1.15"><circle cx="4" cy="4.5" r="3.2"/><path d="M4 7.7V14"/><path d="M11 1L8.3 8.5H13.7Z"/><path d="M11 8.5V14"/></g><g transform="translate(244.4,237.3)" fill="none" stroke="#8db780" stroke-width="1.15"><circle cx="4" cy="4.5" r="3.2"/><path d="M4 7.7V14"/><circle cx="11" cy="4.5" r="3.2"/><path d="M11 7.7V14"/></g><g transform="translate(1011.0,199.4)" fill="none" stroke="#8db780" stroke-width="1.15"><path d="M4 1L1.3 8.5H6.7Z"/><path d="M4 8.5V14"/><circle cx="11" cy="4.5" r="3.2"/><path d="M11 7.7V14"/></g><g transform="translate(171.0,597.8)" fill="none" stroke="#8db780" stroke-width="1.15"><circle cx="4" cy="4.5" r="3.2"/><path d="M4 7.7V14"/><path d="M11 1L8.3 8.5H13.7Z"/><path d="M11 8.5V14"/></g><g transform="translate(311.5,187.6)" fill="none" stroke="#8db780" stroke-width="1.15"><path d="M4 1L1.3 8.5H6.7Z"/><path d="M4 8.5V14"/><circle cx="11" cy="4.5" r="3.2"/><path d="M11 7.7V14"/></g><g transform="translate(516.6,79.9)" fill="none" stroke="#8db780" stroke-width="1.15"><circle cx="4" cy="4.5" r="3.2"/><path d="M4 7.7V14"/><path d="M11 1L8.3 8.5H13.7Z"/><path d="M11 8.5V14"/></g><g transform="translate(70.6,580.7)" fill="none" stroke="#8db780" stroke-width="1.15"><circle cx="4" cy="4.5" r="3.2"/><path d="M4 7.7V14"/><path d="M11 1L8.3 8.5H13.7Z"/><path d="M11 8.5V14"/></g><g transform="translate(847.9,148.3)" fill="none" stroke="#8db780" stroke-width="1.15"><path d="M4 1L1.3 8.5H6.7Z"/><path d="M4 8.5V14"/><circle cx="11" cy="4.5" r="3.2"/><path d="M11 7.7V14"/></g><g transform="translate(940.7,127.5)" fill="none" stroke="#8db780" stroke-width="1.15"><circle cx="4" cy="4.5" r="3.2"/><path d="M4 7.7V14"/><circle cx="11" cy="4.5" r="3.2"/><path d="M11 7.7V14"/></g><g transform="translate(855.0,-5.3)" fill="none" stroke="#8db780" stroke-width="1.15"><circle cx="4" cy="4.5" r="3.2"/><path d="M4 7.7V14"/><path d="M11 1L8.3 8.5H13.7Z"/><path d="M11 8.5V14"/></g><g transform="translate(920.4,72.9)" fill="none" stroke="#8db780" stroke-width="1.15"><circle cx="4" cy="4.5" r="3.2"/><path d="M4 7.7V14"/><path d="M11 1L8.3 8.5H13.7Z"/><path d="M11 8.5V14"/></g><g transform="translate(1058.3,161.3)" fill="none" stroke="#8db780" stroke-width="1.15"><circle cx="4" cy="4.5" r="3.2"/><path d="M4 7.7V14"/><path d="M11 1L8.3 8.5H13.7Z"/><path d="M11 8.5V14"/></g><g transform="translate(176.9,404.2)" fill="none" stroke="#8db780" stroke-width="1.15"><circle cx="4" cy="4.5" r="3.2"/><path d="M4 7.7V14"/><circle cx="11" cy="4.5" r="3.2"/><path d="M11 7.7V14"/></g><g transform="translate(408.3,-13.5)" fill="none" stroke="#8db780" stroke-width="1.15"><path d="M4 1L1.3 8.5H6.7Z"/><path d="M4 8.5V14"/><circle cx="11" cy="4.5" r="3.2"/><path d="M11 7.7V14"/></g><g transform="translate(127.0,415.8)" fill="none" stroke="#8db780" stroke-width="1.15"><circle cx="4" cy="4.5" r="3.2"/><path d="M4 7.7V14"/><circle cx="11" cy="4.5" r="3.2"/><path d="M11 7.7V14"/></g><g transform="translate(237.8,271.6)" fill="none" stroke="#8db780" stroke-width="1.15"><path d="M4 1L1.3 8.5H6.7Z"/><path d="M4 8.5V14"/><circle cx="11" cy="4.5" r="3.2"/><path d="M11 7.7V14"/></g><g transform="translate(327.4,147.6)" fill="none" stroke="#8db780" stroke-width="1.15"><path d="M4 1L1.3 8.5H6.7Z"/><path d="M4 8.5V14"/><circle cx="11" cy="4.5" r="3.2"/><path d="M11 7.7V14"/></g><g transform="translate(1037.0,244.8)" fill="none" stroke="#8db780" stroke-width="1.15"><path d="M4 1L1.3 8.5H6.7Z"/><path d="M4 8.5V14"/><circle cx="11" cy="4.5" r="3.2"/><path d="M11 7.7V14"/></g><g transform="translate(14.3,724.5)" fill="none" stroke="#8db780" stroke-width="1.15"><circle cx="4" cy="4.5" r="3.2"/><path d="M4 7.7V14"/><circle cx="11" cy="4.5" r="3.2"/><path d="M11 7.7V14"/></g><g transform="translate(1059.2,271.8)" fill="none" stroke="#8db780" stroke-width="1.15"><circle cx="4" cy="4.5" r="3.2"/><path d="M4 7.7V14"/><circle cx="11" cy="4.5" r="3.2"/><path d="M11 7.7V14"/></g><g transform="translate(149.5,473.7)" fill="none" stroke="#8db780" stroke-width="1.15"><circle cx="4" cy="4.5" r="3.2"/><path d="M4 7.7V14"/><path d="M11 1L8.3 8.5H13.7Z"/><path d="M11 8.5V14"/></g><g transform="translate(294.3,158.0)" fill="none" stroke="#8db780" stroke-width="1.15"><circle cx="4" cy="4.5" r="3.2"/><path d="M4 7.7V14"/><path d="M11 1L8.3 8.5H13.7Z"/><path d="M11 8.5V14"/></g><g transform="translate(567.2,-16.3)" fill="none" stroke="#8db780" stroke-width="1.15"><circle cx="4" cy="4.5" r="3.2"/><path d="M4 7.7V14"/><circle cx="11" cy="4.5" r="3.2"/><path d="M11 7.7V14"/></g><g transform="translate(885.5,17.5)" fill="none" stroke="#8db780" stroke-width="1.15"><path d="M4 1L1.3 8.5H6.7Z"/><path d="M4 8.5V14"/><circle cx="11" cy="4.5" r="3.2"/><path d="M11 7.7V14"/></g><g transform="translate(45.8,622.5)" fill="none" stroke="#8db780" stroke-width="1.15"><path d="M4 1L1.3 8.5H6.7Z"/><path d="M4 8.5V14"/><circle cx="11" cy="4.5" r="3.2"/><path d="M11 7.7V14"/></g><g transform="translate(276.7,113.6)" fill="none" stroke="#8db780" stroke-width="1.15"><circle cx="4" cy="4.5" r="3.2"/><path d="M4 7.7V14"/><path d="M11 1L8.3 8.5H13.7Z"/><path d="M11 8.5V14"/></g><g transform="translate(438.5,205.4)" fill="none" stroke="#8db780" stroke-width="1.15"><circle cx="4" cy="4.5" r="3.2"/><path d="M4 7.7V14"/><path d="M11 1L8.3 8.5H13.7Z"/><path d="M11 8.5V14"/></g><g transform="translate(184.2,265.1)" fill="none" stroke="#8db780" stroke-width="1.15"><path d="M4 1L1.3 8.5H6.7Z"/><path d="M4 8.5V14"/><circle cx="11" cy="4.5" r="3.2"/><path d="M11 7.7V14"/></g><g transform="translate(1024.3,120.4)" fill="none" stroke="#8db780" stroke-width="1.15"><circle cx="4" cy="4.5" r="3.2"/><path d="M4 7.7V14"/><circle cx="11" cy="4.5" r="3.2"/><path d="M11 7.7V14"/></g><g transform="translate(25.4,666.8)" fill="none" stroke="#8db780" stroke-width="1.15"><circle cx="4" cy="4.5" r="3.2"/><path d="M4 7.7V14"/><circle cx="11" cy="4.5" r="3.2"/><path d="M11 7.7V14"/></g><g transform="translate(977.4,122.2)" fill="none" stroke="#8db780" stroke-width="1.15"><circle cx="4" cy="4.5" r="3.2"/><path d="M4 7.7V14"/><circle cx="11" cy="4.5" r="3.2"/><path d="M11 7.7V14"/></g><g transform="translate(305.0,85.0)" fill="none" stroke="#8db780" stroke-width="1.15"><path d="M4 1L1.3 8.5H6.7Z"/><path d="M4 8.5V14"/><circle cx="11" cy="4.5" r="3.2"/><path d="M11 7.7V14"/></g><g transform="translate(391.0,109.6)" fill="none" stroke="#8db780" stroke-width="1.15"><path d="M4 1L1.3 8.5H6.7Z"/><path d="M4 8.5V14"/><circle cx="11" cy="4.5" r="3.2"/><path d="M11 7.7V14"/></g><g transform="translate(175.5,316.7)" fill="none" stroke="#8db780" stroke-width="1.15"><circle cx="4" cy="4.5" r="3.2"/><path d="M4 7.7V14"/><circle cx="11" cy="4.5" r="3.2"/><path d="M11 7.7V14"/></g><g transform="translate(48.6,781.8)" fill="none" stroke="#8db780" stroke-width="1.15"><circle cx="4" cy="4.5" r="3.2"/><path d="M4 7.7V14"/><circle cx="11" cy="4.5" r="3.2"/><path d="M11 7.7V14"/></g><g transform="translate(336.1,50.8)" fill="none" stroke="#8db780" stroke-width="1.15"><circle cx="4" cy="4.5" r="3.2"/><path d="M4 7.7V14"/><path d="M11 1L8.3 8.5H13.7Z"/><path d="M11 8.5V14"/></g><g transform="translate(937.2,28.2)" fill="none" stroke="#8db780" stroke-width="1.15"><path d="M4 1L1.3 8.5H6.7Z"/><path d="M4 8.5V14"/><circle cx="11" cy="4.5" r="3.2"/><path d="M11 7.7V14"/></g><g transform="translate(154.1,208.6)" fill="none" stroke="#8db780" stroke-width="1.15"><path d="M4 1L1.3 8.5H6.7Z"/><path d="M4 8.5V14"/><circle cx="11" cy="4.5" r="3.2"/><path d="M11 7.7V14"/></g><g transform="translate(468.2,25.8)" fill="none" stroke="#8db780" stroke-width="1.15"><circle cx="4" cy="4.5" r="3.2"/><path d="M4 7.7V14"/><circle cx="11" cy="4.5" r="3.2"/><path d="M11 7.7V14"/></g><g transform="translate(117.8,323.4)" fill="none" stroke="#8db780" stroke-width="1.15"><circle cx="4" cy="4.5" r="3.2"/><path d="M4 7.7V14"/><path d="M11 1L8.3 8.5H13.7Z"/><path d="M11 8.5V14"/></g><g transform="translate(-9.0,671.5)" fill="none" stroke="#8db780" stroke-width="1.15"><circle cx="4" cy="4.5" r="3.2"/><path d="M4 7.7V14"/><circle cx="11" cy="4.5" r="3.2"/><path d="M11 7.7V14"/></g><g transform="translate(348.4,15.0)" fill="none" stroke="#8db780" stroke-width="1.15"><circle cx="4" cy="4.5" r="3.2"/><path d="M4 7.7V14"/><circle cx="11" cy="4.5" r="3.2"/><path d="M11 7.7V14"/></g><g transform="translate(980.5,47.3)" fill="none" stroke="#8db780" stroke-width="1.15"><circle cx="4" cy="4.5" r="3.2"/><path d="M4 7.7V14"/><circle cx="11" cy="4.5" r="3.2"/><path d="M11 7.7V14"/></g><g transform="translate(-4.0,622.5)" fill="none" stroke="#8db780" stroke-width="1.15"><circle cx="4" cy="4.5" r="3.2"/><path d="M4 7.7V14"/><path d="M11 1L8.3 8.5H13.7Z"/><path d="M11 8.5V14"/></g><g transform="translate(437.9,41.7)" fill="none" stroke="#8db780" stroke-width="1.15"><path d="M4 1L1.3 8.5H6.7Z"/><path d="M4 8.5V14"/><circle cx="11" cy="4.5" r="3.2"/><path d="M11 7.7V14"/></g><g transform="translate(532.7,-19.0)" fill="none" stroke="#8db780" stroke-width="1.15"><circle cx="4" cy="4.5" r="3.2"/><path d="M4 7.7V14"/><path d="M11 1L8.3 8.5H13.7Z"/><path d="M11 8.5V14"/></g><g transform="translate(543.0,43.4)" fill="none" stroke="#8db780" stroke-width="1.15"><path d="M4 1L1.3 8.5H6.7Z"/><path d="M4 8.5V14"/><circle cx="11" cy="4.5" r="3.2"/><path d="M11 7.7V14"/></g><g transform="translate(268.8,197.3)" fill="none" stroke="#8db780" stroke-width="1.15"><circle cx="4" cy="4.5" r="3.2"/><path d="M4 7.7V14"/><circle cx="11" cy="4.5" r="3.2"/><path d="M11 7.7V14"/></g><g transform="translate(147.7,363.2)" fill="none" stroke="#8db780" stroke-width="1.15"><path d="M4 1L1.3 8.5H6.7Z"/><path d="M4 8.5V14"/><circle cx="11" cy="4.5" r="3.2"/><path d="M11 7.7V14"/></g><g transform="translate(148.6,294.1)" fill="none" stroke="#8db780" stroke-width="1.15"><path d="M4 1L1.3 8.5H6.7Z"/><path d="M4 8.5V14"/><circle cx="11" cy="4.5" r="3.2"/><path d="M11 7.7V14"/></g><g transform="translate(-10.1,579.6)" fill="none" stroke="#8db780" stroke-width="1.15"><circle cx="4" cy="4.5" r="3.2"/><path d="M4 7.7V14"/><path d="M11 1L8.3 8.5H13.7Z"/><path d="M11 8.5V14"/></g><g transform="translate(653.6,-19.0)" fill="none" stroke="#8db780" stroke-width="1.15"><circle cx="4" cy="4.5" r="3.2"/><path d="M4 7.7V14"/><circle cx="11" cy="4.5" r="3.2"/><path d="M11 7.7V14"/></g><g transform="translate(23.2,563.3)" fill="none" stroke="#8db780" stroke-width="1.15"><circle cx="4" cy="4.5" r="3.2"/><path d="M4 7.7V14"/><circle cx="11" cy="4.5" r="3.2"/><path d="M11 7.7V14"/></g><g transform="translate(352.8,-18.8)" fill="none" stroke="#8db780" stroke-width="1.15"><circle cx="4" cy="4.5" r="3.2"/><path d="M4 7.7V14"/><circle cx="11" cy="4.5" r="3.2"/><path d="M11 7.7V14"/></g><g transform="translate(210.3,185.3)" fill="none" stroke="#8db780" stroke-width="1.15"><circle cx="4" cy="4.5" r="3.2"/><path d="M4 7.7V14"/><circle cx="11" cy="4.5" r="3.2"/><path d="M11 7.7V14"/></g><g transform="translate(1059.7,216.3)" fill="none" stroke="#8db780" stroke-width="1.15"><path d="M4 1L1.3 8.5H6.7Z"/><path d="M4 8.5V14"/><circle cx="11" cy="4.5" r="3.2"/><path d="M11 7.7V14"/></g><g transform="translate(298.2,-1.9)" fill="none" stroke="#8db780" stroke-width="1.15"><path d="M4 1L1.3 8.5H6.7Z"/><path d="M4 8.5V14"/><circle cx="11" cy="4.5" r="3.2"/><path d="M11 7.7V14"/></g><g transform="translate(484.5,-5.1)" fill="none" stroke="#8db780" stroke-width="1.15"><circle cx="4" cy="4.5" r="3.2"/><path d="M4 7.7V14"/><path d="M11 1L8.3 8.5H13.7Z"/><path d="M11 8.5V14"/></g><g transform="translate(204.8,361.9)" fill="none" stroke="#8db780" stroke-width="1.15"><path d="M4 1L1.3 8.5H6.7Z"/><path d="M4 8.5V14"/><circle cx="11" cy="4.5" r="3.2"/><path d="M11 7.7V14"/></g><g transform="translate(22.3,757.9)" fill="none" stroke="#8db780" stroke-width="1.15"><circle cx="4" cy="4.5" r="3.2"/><path d="M4 7.7V14"/><circle cx="11" cy="4.5" r="3.2"/><path d="M11 7.7V14"/></g><g transform="translate(91.2,375.1)" fill="none" stroke="#8db780" stroke-width="1.15"><path d="M4 1L1.3 8.5H6.7Z"/><path d="M4 8.5V14"/><circle cx="11" cy="4.5" r="3.2"/><path d="M11 7.7V14"/></g><g transform="translate(295.9,44.2)" fill="none" stroke="#8db780" stroke-width="1.15"><circle cx="4" cy="4.5" r="3.2"/><path d="M4 7.7V14"/><path d="M11 1L8.3 8.5H13.7Z"/><path d="M11 8.5V14"/></g><g transform="translate(-18.4,710.0)" fill="none" stroke="#8db780" stroke-width="1.15"><circle cx="4" cy="4.5" r="3.2"/><path d="M4 7.7V14"/><path d="M11 1L8.3 8.5H13.7Z"/><path d="M11 8.5V14"/></g><g transform="translate(760.1,23.8)" fill="none" stroke="#8db780" stroke-width="1.15"><path d="M4 1L1.3 8.5H6.7Z"/><path d="M4 8.5V14"/><circle cx="11" cy="4.5" r="3.2"/><path d="M11 7.7V14"/></g><g transform="translate(1000.9,151.7)" fill="none" stroke="#8db780" stroke-width="1.15"><circle cx="4" cy="4.5" r="3.2"/><path d="M4 7.7V14"/><path d="M11 1L8.3 8.5H13.7Z"/><path d="M11 8.5V14"/></g><g transform="translate(62.2,652.9)" fill="none" stroke="#8db780" stroke-width="1.15"><path d="M4 1L1.3 8.5H6.7Z"/><path d="M4 8.5V14"/><circle cx="11" cy="4.5" r="3.2"/><path d="M11 7.7V14"/></g><g transform="translate(75.4,336.3)" fill="none" stroke="#8db780" stroke-width="1.15"><circle cx="4" cy="4.5" r="3.2"/><path d="M4 7.7V14"/><circle cx="11" cy="4.5" r="3.2"/><path d="M11 7.7V14"/></g><g transform="translate(443.3,-19.2)" fill="none" stroke="#8db780" stroke-width="1.15"><path d="M4 1L1.3 8.5H6.7Z"/><path d="M4 8.5V14"/><circle cx="11" cy="4.5" r="3.2"/><path d="M11 7.7V14"/></g><g transform="translate(92.4,536.2)" fill="none" stroke="#8db780" stroke-width="1.15"><path d="M4 1L1.3 8.5H6.7Z"/><path d="M4 8.5V14"/><circle cx="11" cy="4.5" r="3.2"/><path d="M11 7.7V14"/></g><g transform="translate(786.0,-10.8)" fill="none" stroke="#8db780" stroke-width="1.15"><circle cx="4" cy="4.5" r="3.2"/><path d="M4 7.7V14"/><path d="M11 1L8.3 8.5H13.7Z"/><path d="M11 8.5V14"/></g><g transform="translate(209.2,234.6)" fill="none" stroke="#8db780" stroke-width="1.15"><circle cx="4" cy="4.5" r="3.2"/><path d="M4 7.7V14"/><circle cx="11" cy="4.5" r="3.2"/><path d="M11 7.7V14"/></g><g transform="translate(1027.5,84.0)" fill="none" stroke="#8db780" stroke-width="1.15"><circle cx="4" cy="4.5" r="3.2"/><path d="M4 7.7V14"/><circle cx="11" cy="4.5" r="3.2"/><path d="M11 7.7V14"/></g><g transform="translate(978.4,209.9)" fill="none" stroke="#8db780" stroke-width="1.15"><circle cx="4" cy="4.5" r="3.2"/><path d="M4 7.7V14"/><path d="M11 1L8.3 8.5H13.7Z"/><path d="M11 8.5V14"/></g><g transform="translate(42.5,520.2)" fill="none" stroke="#8db780" stroke-width="1.15"><path d="M4 1L1.3 8.5H6.7Z"/><path d="M4 8.5V14"/><circle cx="11" cy="4.5" r="3.2"/><path d="M11 7.7V14"/></g><g transform="translate(251.5,80.5)" fill="none" stroke="#8db780" stroke-width="1.15"><circle cx="4" cy="4.5" r="3.2"/><path d="M4 7.7V14"/><path d="M11 1L8.3 8.5H13.7Z"/><path d="M11 8.5V14"/></g><g transform="translate(155.9,437.0)" fill="none" stroke="#8db780" stroke-width="1.15"><path d="M4 1L1.3 8.5H6.7Z"/><path d="M4 8.5V14"/><circle cx="11" cy="4.5" r="3.2"/><path d="M11 7.7V14"/></g><g transform="translate(916.7,-4.7)" fill="none" stroke="#8db780" stroke-width="1.15"><circle cx="4" cy="4.5" r="3.2"/><path d="M4 7.7V14"/><circle cx="11" cy="4.5" r="3.2"/><path d="M11 7.7V14"/></g><g transform="translate(953.0,-16.0)" fill="none" stroke="#8db780" stroke-width="1.15"><circle cx="4" cy="4.5" r="3.2"/><path d="M4 7.7V14"/><path d="M11 1L8.3 8.5H13.7Z"/><path d="M11 8.5V14"/></g><g transform="translate(506.8,46.7)" fill="none" stroke="#8db780" stroke-width="1.15"><path d="M4 1L1.3 8.5H6.7Z"/><path d="M4 8.5V14"/><circle cx="11" cy="4.5" r="3.2"/><path d="M11 7.7V14"/></g><g transform="translate(102.5,236.7)" fill="none" stroke="#8db780" stroke-width="1.15"><circle cx="4" cy="4.5" r="3.2"/><path d="M4 7.7V14"/><path d="M11 1L8.3 8.5H13.7Z"/><path d="M11 8.5V14"/></g><g transform="translate(1021.8,23.0)" fill="none" stroke="#8db780" stroke-width="1.15"><circle cx="4" cy="4.5" r="3.2"/><path d="M4 7.7V14"/><path d="M11 1L8.3 8.5H13.7Z"/><path d="M11 8.5V14"/></g><g transform="translate(554.4,89.1)" fill="none" stroke="#8db780" stroke-width="1.15"><circle cx="4" cy="4.5" r="3.2"/><path d="M4 7.7V14"/><path d="M11 1L8.3 8.5H13.7Z"/><path d="M11 8.5V14"/></g><g transform="translate(478.7,69.7)" fill="none" stroke="#8db780" stroke-width="1.15"><circle cx="4" cy="4.5" r="3.2"/><path d="M4 7.7V14"/><circle cx="11" cy="4.5" r="3.2"/><path d="M11 7.7V14"/></g><g transform="translate(108.5,169.5)" fill="none" stroke="#8db780" stroke-width="1.15"><path d="M4 1L1.3 8.5H6.7Z"/><path d="M4 8.5V14"/><circle cx="11" cy="4.5" r="3.2"/><path d="M11 7.7V14"/></g><g transform="translate(999.1,-18.0)" fill="none" stroke="#8db780" stroke-width="1.15"><circle cx="4" cy="4.5" r="3.2"/><path d="M4 7.7V14"/><circle cx="11" cy="4.5" r="3.2"/><path d="M11 7.7V14"/></g><g transform="translate(74.3,409.4)" fill="none" stroke="#8db780" stroke-width="1.15"><circle cx="4" cy="4.5" r="3.2"/><path d="M4 7.7V14"/><path d="M11 1L8.3 8.5H13.7Z"/><path d="M11 8.5V14"/></g><g transform="translate(253.5,0.2)" fill="none" stroke="#8db780" stroke-width="1.15"><circle cx="4" cy="4.5" r="3.2"/><path d="M4 7.7V14"/><circle cx="11" cy="4.5" r="3.2"/><path d="M11 7.7V14"/></g><g transform="translate(960.0,92.4)" fill="none" stroke="#8db780" stroke-width="1.15"><circle cx="4" cy="4.5" r="3.2"/><path d="M4 7.7V14"/><circle cx="11" cy="4.5" r="3.2"/><path d="M11 7.7V14"/></g><g transform="translate(1057.4,-16.0)" fill="none" stroke="#8db780" stroke-width="1.15"><circle cx="4" cy="4.5" r="3.2"/><path d="M4 7.7V14"/><path d="M11 1L8.3 8.5H13.7Z"/><path d="M11 8.5V14"/></g><g transform="translate(-17.8,787.7)" fill="none" stroke="#8db780" stroke-width="1.15"><path d="M4 1L1.3 8.5H6.7Z"/><path d="M4 8.5V14"/><circle cx="11" cy="4.5" r="3.2"/><path d="M11 7.7V14"/></g><g transform="translate(58.2,487.7)" fill="none" stroke="#8db780" stroke-width="1.15"><circle cx="4" cy="4.5" r="3.2"/><path d="M4 7.7V14"/><circle cx="11" cy="4.5" r="3.2"/><path d="M11 7.7V14"/></g><g transform="translate(49.5,261.8)" fill="none" stroke="#8db780" stroke-width="1.15"><path d="M4 1L1.3 8.5H6.7Z"/><path d="M4 8.5V14"/><circle cx="11" cy="4.5" r="3.2"/><path d="M11 7.7V14"/></g><g transform="translate(259.0,155.6)" fill="none" stroke="#8db780" stroke-width="1.15"><path d="M4 1L1.3 8.5H6.7Z"/><path d="M4 8.5V14"/><circle cx="11" cy="4.5" r="3.2"/><path d="M11 7.7V14"/></g><g transform="translate(257.4,41.1)" fill="none" stroke="#8db780" stroke-width="1.15"><path d="M4 1L1.3 8.5H6.7Z"/><path d="M4 8.5V14"/><circle cx="11" cy="4.5" r="3.2"/><path d="M11 7.7V14"/></g><g transform="translate(87.8,303.4)" fill="none" stroke="#8db780" stroke-width="1.15"><circle cx="4" cy="4.5" r="3.2"/><path d="M4 7.7V14"/><path d="M11 1L8.3 8.5H13.7Z"/><path d="M11 8.5V14"/></g><g transform="translate(13.8,488.7)" fill="none" stroke="#8db780" stroke-width="1.15"><circle cx="4" cy="4.5" r="3.2"/><path d="M4 7.7V14"/><path d="M11 1L8.3 8.5H13.7Z"/><path d="M11 8.5V14"/></g><g transform="translate(973.4,12.9)" fill="none" stroke="#8db780" stroke-width="1.15"><circle cx="4" cy="4.5" r="3.2"/><path d="M4 7.7V14"/><circle cx="11" cy="4.5" r="3.2"/><path d="M11 7.7V14"/></g><g transform="translate(-14.6,749.1)" fill="none" stroke="#8db780" stroke-width="1.15"><circle cx="4" cy="4.5" r="3.2"/><path d="M4 7.7V14"/><circle cx="11" cy="4.5" r="3.2"/><path d="M11 7.7V14"/></g><g transform="translate(33.5,457.6)" fill="none" stroke="#8db780" stroke-width="1.15"><path d="M4 1L1.3 8.5H6.7Z"/><path d="M4 8.5V14"/><circle cx="11" cy="4.5" r="3.2"/><path d="M11 7.7V14"/></g><g transform="translate(27.0,297.1)" fill="none" stroke="#8db780" stroke-width="1.15"><circle cx="4" cy="4.5" r="3.2"/><path d="M4 7.7V14"/><circle cx="11" cy="4.5" r="3.2"/><path d="M11 7.7V14"/></g><g transform="translate(219.0,54.9)" fill="none" stroke="#8db780" stroke-width="1.15"><circle cx="4" cy="4.5" r="3.2"/><path d="M4 7.7V14"/><path d="M11 1L8.3 8.5H13.7Z"/><path d="M11 8.5V14"/></g><g transform="translate(112.7,278.9)" fill="none" stroke="#8db780" stroke-width="1.15"><circle cx="4" cy="4.5" r="3.2"/><path d="M4 7.7V14"/><circle cx="11" cy="4.5" r="3.2"/><path d="M11 7.7V14"/></g><g transform="translate(211.5,0.5)" fill="none" stroke="#8db780" stroke-width="1.15"><circle cx="4" cy="4.5" r="3.2"/><path d="M4 7.7V14"/><path d="M11 1L8.3 8.5H13.7Z"/><path d="M11 8.5V14"/></g><g transform="translate(1058.0,19.1)" fill="none" stroke="#8db780" stroke-width="1.15"><path d="M4 1L1.3 8.5H6.7Z"/><path d="M4 8.5V14"/><circle cx="11" cy="4.5" r="3.2"/><path d="M11 7.7V14"/></g><g transform="translate(119.2,451.2)" fill="none" stroke="#8db780" stroke-width="1.15"><path d="M4 1L1.3 8.5H6.7Z"/><path d="M4 8.5V14"/><circle cx="11" cy="4.5" r="3.2"/><path d="M11 7.7V14"/></g><g transform="translate(165.2,174.8)" fill="none" stroke="#8db780" stroke-width="1.15"><circle cx="4" cy="4.5" r="3.2"/><path d="M4 7.7V14"/><circle cx="11" cy="4.5" r="3.2"/><path d="M11 7.7V14"/></g><g transform="translate(168.3,91.7)" fill="none" stroke="#8db780" stroke-width="1.15"><circle cx="4" cy="4.5" r="3.2"/><path d="M4 7.7V14"/><circle cx="11" cy="4.5" r="3.2"/><path d="M11 7.7V14"/></g><g transform="translate(27.7,399.7)" fill="none" stroke="#8db780" stroke-width="1.15"><circle cx="4" cy="4.5" r="3.2"/><path d="M4 7.7V14"/><circle cx="11" cy="4.5" r="3.2"/><path d="M11 7.7V14"/></g><g transform="translate(56.6,365.2)" fill="none" stroke="#8db780" stroke-width="1.15"><path d="M4 1L1.3 8.5H6.7Z"/><path d="M4 8.5V14"/><circle cx="11" cy="4.5" r="3.2"/><path d="M11 7.7V14"/></g><g transform="translate(161.2,136.9)" fill="none" stroke="#8db780" stroke-width="1.15"><circle cx="4" cy="4.5" r="3.2"/><path d="M4 7.7V14"/><circle cx="11" cy="4.5" r="3.2"/><path d="M11 7.7V14"/></g><g transform="translate(223.5,119.2)" fill="none" stroke="#8db780" stroke-width="1.15"><path d="M4 1L1.3 8.5H6.7Z"/><path d="M4 8.5V14"/><circle cx="11" cy="4.5" r="3.2"/><path d="M11 7.7V14"/></g><g transform="translate(12.1,430.2)" fill="none" stroke="#8db780" stroke-width="1.15"><circle cx="4" cy="4.5" r="3.2"/><path d="M4 7.7V14"/><circle cx="11" cy="4.5" r="3.2"/><path d="M11 7.7V14"/></g><g transform="translate(-7.0,286.8)" fill="none" stroke="#8db780" stroke-width="1.15"><circle cx="4" cy="4.5" r="3.2"/><path d="M4 7.7V14"/><path d="M11 1L8.3 8.5H13.7Z"/><path d="M11 8.5V14"/></g><g transform="translate(408.9,186.9)" fill="none" stroke="#8db780" stroke-width="1.15"><circle cx="4" cy="4.5" r="3.2"/><path d="M4 7.7V14"/><circle cx="11" cy="4.5" r="3.2"/><path d="M11 7.7V14"/></g><g transform="translate(-4.5,542.9)" fill="none" stroke="#8db780" stroke-width="1.15"><circle cx="4" cy="4.5" r="3.2"/><path d="M4 7.7V14"/><path d="M11 1L8.3 8.5H13.7Z"/><path d="M11 8.5V14"/></g><g transform="translate(-16.0,470.2)" fill="none" stroke="#8db780" stroke-width="1.15"><circle cx="4" cy="4.5" r="3.2"/><path d="M4 7.7V14"/><circle cx="11" cy="4.5" r="3.2"/><path d="M11 7.7V14"/></g><g transform="translate(1059.7,126.9)" fill="none" stroke="#8db780" stroke-width="1.15"><circle cx="4" cy="4.5" r="3.2"/><path d="M4 7.7V14"/><path d="M11 1L8.3 8.5H13.7Z"/><path d="M11 8.5V14"/></g><g transform="translate(195.2,142.9)" fill="none" stroke="#8db780" stroke-width="1.15"><circle cx="4" cy="4.5" r="3.2"/><path d="M4 7.7V14"/><circle cx="11" cy="4.5" r="3.2"/><path d="M11 7.7V14"/></g><g transform="translate(113.1,122.6)" fill="none" stroke="#8db780" stroke-width="1.15"><circle cx="4" cy="4.5" r="3.2"/><path d="M4 7.7V14"/><circle cx="11" cy="4.5" r="3.2"/><path d="M11 7.7V14"/></g><g transform="translate(130.4,84.2)" fill="none" stroke="#8db780" stroke-width="1.15"><circle cx="4" cy="4.5" r="3.2"/><path d="M4 7.7V14"/><path d="M11 1L8.3 8.5H13.7Z"/><path d="M11 8.5V14"/></g><g transform="translate(15.8,793.9)" fill="none" stroke="#8db780" stroke-width="1.15"><circle cx="4" cy="4.5" r="3.2"/><path d="M4 7.7V14"/><path d="M11 1L8.3 8.5H13.7Z"/><path d="M11 8.5V14"/></g><g transform="translate(52.6,183.1)" fill="none" stroke="#8db780" stroke-width="1.15"><path d="M4 1L1.3 8.5H6.7Z"/><path d="M4 8.5V14"/><circle cx="11" cy="4.5" r="3.2"/><path d="M11 7.7V14"/></g><g transform="translate(72.8,138.5)" fill="none" stroke="#8db780" stroke-width="1.15"><circle cx="4" cy="4.5" r="3.2"/><path d="M4 7.7V14"/><path d="M11 1L8.3 8.5H13.7Z"/><path d="M11 8.5V14"/></g><g transform="translate(33.3,230.2)" fill="none" stroke="#8db780" stroke-width="1.15"><path d="M4 1L1.3 8.5H6.7Z"/><path d="M4 8.5V14"/><circle cx="11" cy="4.5" r="3.2"/><path d="M11 7.7V14"/></g><g transform="translate(50.3,694.0)" fill="none" stroke="#8db780" stroke-width="1.15"><path d="M4 1L1.3 8.5H6.7Z"/><path d="M4 8.5V14"/><circle cx="11" cy="4.5" r="3.2"/><path d="M11 7.7V14"/></g><g transform="translate(70.0,217.2)" fill="none" stroke="#8db780" stroke-width="1.15"><path d="M4 1L1.3 8.5H6.7Z"/><path d="M4 8.5V14"/><circle cx="11" cy="4.5" r="3.2"/><path d="M11 7.7V14"/></g><g transform="translate(145.4,256.0)" fill="none" stroke="#8db780" stroke-width="1.15"><circle cx="4" cy="4.5" r="3.2"/><path d="M4 7.7V14"/><path d="M11 1L8.3 8.5H13.7Z"/><path d="M11 8.5V14"/></g><g transform="translate(366.1,141.8)" fill="none" stroke="#8db780" stroke-width="1.15"><circle cx="4" cy="4.5" r="3.2"/><path d="M4 7.7V14"/><path d="M11 1L8.3 8.5H13.7Z"/><path d="M11 8.5V14"/></g><g transform="translate(173.5,49.4)" fill="none" stroke="#8db780" stroke-width="1.15"><circle cx="4" cy="4.5" r="3.2"/><path d="M4 7.7V14"/><path d="M11 1L8.3 8.5H13.7Z"/><path d="M11 8.5V14"/></g><g transform="translate(-4.1,247.5)" fill="none" stroke="#8db780" stroke-width="1.15"><path d="M4 1L1.3 8.5H6.7Z"/><path d="M4 8.5V14"/><circle cx="11" cy="4.5" r="3.2"/><path d="M11 7.7V14"/></g><g transform="translate(81.9,101.7)" fill="none" stroke="#8db780" stroke-width="1.15"><circle cx="4" cy="4.5" r="3.2"/><path d="M4 7.7V14"/><path d="M11 1L8.3 8.5H13.7Z"/><path d="M11 8.5V14"/></g><g transform="translate(-17.0,510.0)" fill="none" stroke="#8db780" stroke-width="1.15"><path d="M4 1L1.3 8.5H6.7Z"/><path d="M4 8.5V14"/><circle cx="11" cy="4.5" r="3.2"/><path d="M11 7.7V14"/></g><g transform="translate(85.1,62.1)" fill="none" stroke="#8db780" stroke-width="1.15"><path d="M4 1L1.3 8.5H6.7Z"/><path d="M4 8.5V14"/><circle cx="11" cy="4.5" r="3.2"/><path d="M11 7.7V14"/></g><g transform="translate(118.8,205.8)" fill="none" stroke="#8db780" stroke-width="1.15"><circle cx="4" cy="4.5" r="3.2"/><path d="M4 7.7V14"/><circle cx="11" cy="4.5" r="3.2"/><path d="M11 7.7V14"/></g><g transform="translate(129.8,42.9)" fill="none" stroke="#8db780" stroke-width="1.15"><path d="M4 1L1.3 8.5H6.7Z"/><path d="M4 8.5V14"/><circle cx="11" cy="4.5" r="3.2"/><path d="M11 7.7V14"/></g><g transform="translate(-6.6,186.4)" fill="none" stroke="#8db780" stroke-width="1.15"><path d="M4 1L1.3 8.5H6.7Z"/><path d="M4 8.5V14"/><circle cx="11" cy="4.5" r="3.2"/><path d="M11 7.7V14"/></g><g transform="translate(177.5,14.6)" fill="none" stroke="#8db780" stroke-width="1.15"><path d="M4 1L1.3 8.5H6.7Z"/><path d="M4 8.5V14"/><circle cx="11" cy="4.5" r="3.2"/><path d="M11 7.7V14"/></g><g transform="translate(8.9,136.1)" fill="none" stroke="#8db780" stroke-width="1.15"><circle cx="4" cy="4.5" r="3.2"/><path d="M4 7.7V14"/><path d="M11 1L8.3 8.5H13.7Z"/><path d="M11 8.5V14"/></g><g transform="translate(18.2,339.1)" fill="none" stroke="#8db780" stroke-width="1.15"><circle cx="4" cy="4.5" r="3.2"/><path d="M4 7.7V14"/><path d="M11 1L8.3 8.5H13.7Z"/><path d="M11 8.5V14"/></g><g transform="translate(155.8,-12.2)" fill="none" stroke="#8db780" stroke-width="1.15"><path d="M4 1L1.3 8.5H6.7Z"/><path d="M4 8.5V14"/><circle cx="11" cy="4.5" r="3.2"/><path d="M11 7.7V14"/></g><g transform="translate(76.0,18.2)" fill="none" stroke="#8db780" stroke-width="1.15"><circle cx="4" cy="4.5" r="3.2"/><path d="M4 7.7V14"/><circle cx="11" cy="4.5" r="3.2"/><path d="M11 7.7V14"/></g><g transform="translate(38.5,102.7)" fill="none" stroke="#8db780" stroke-width="1.15"><path d="M4 1L1.3 8.5H6.7Z"/><path d="M4 8.5V14"/><circle cx="11" cy="4.5" r="3.2"/><path d="M11 7.7V14"/></g><g transform="translate(-11.1,89.2)" fill="none" stroke="#8db780" stroke-width="1.15"><circle cx="4" cy="4.5" r="3.2"/><path d="M4 7.7V14"/><circle cx="11" cy="4.5" r="3.2"/><path d="M11 7.7V14"/></g><g transform="translate(119.1,-2.2)" fill="none" stroke="#8db780" stroke-width="1.15"><circle cx="4" cy="4.5" r="3.2"/><path d="M4 7.7V14"/><circle cx="11" cy="4.5" r="3.2"/><path d="M11 7.7V14"/></g><g transform="translate(27.5,50.2)" fill="none" stroke="#8db780" stroke-width="1.15"><path d="M4 1L1.3 8.5H6.7Z"/><path d="M4 8.5V14"/><circle cx="11" cy="4.5" r="3.2"/><path d="M11 7.7V14"/></g><g transform="translate(-4.4,18.3)" fill="none" stroke="#8db780" stroke-width="1.15"><circle cx="4" cy="4.5" r="3.2"/><path d="M4 7.7V14"/><path d="M11 1L8.3 8.5H13.7Z"/><path d="M11 8.5V14"/></g><g transform="translate(-15.6,371.4)" fill="none" stroke="#8db780" stroke-width="1.15"><path d="M4 1L1.3 8.5H6.7Z"/><path d="M4 8.5V14"/><circle cx="11" cy="4.5" r="3.2"/><path d="M11 7.7V14"/></g><g transform="translate(24.6,0.2)" fill="none" stroke="#8db780" stroke-width="1.15"><circle cx="4" cy="4.5" r="3.2"/><path d="M4 7.7V14"/><circle cx="11" cy="4.5" r="3.2"/><path d="M11 7.7V14"/></g><g transform="translate(58.2,-19.3)" fill="none" stroke="#8db780" stroke-width="1.15"><circle cx="4" cy="4.5" r="3.2"/><path d="M4 7.7V14"/><circle cx="11" cy="4.5" r="3.2"/><path d="M11 7.7V14"/></g><g transform="translate(-13.9,322.9)" fill="none" stroke="#8db780" stroke-width="1.15"><path d="M4 1L1.3 8.5H6.7Z"/><path d="M4 8.5V14"/><circle cx="11" cy="4.5" r="3.2"/><path d="M11 7.7V14"/></g><g transform="translate(-10.6,-20.0)" fill="none" stroke="#8db780" stroke-width="1.15"><path d="M4 1L1.3 8.5H6.7Z"/><path d="M4 8.5V14"/><circle cx="11" cy="4.5" r="3.2"/><path d="M11 7.7V14"/></g><g transform="translate(-19.8,54.9)" fill="none" stroke="#8db780" stroke-width="1.15"><path d="M4 1L1.3 8.5H6.7Z"/><path d="M4 8.5V14"/><circle cx="11" cy="4.5" r="3.2"/><path d="M11 7.7V14"/></g><polygon points="0,607.7 67.3,591.6 102,758 109,791 0,791" fill="#cdebb0"/><line x1="-2" y1="550.6" x2="108.5" y2="792" stroke="#0f6216" stroke-width="7.5"/><polyline points="-5,48 144,194.3 252,299.6 437,478 572,605 778,793" fill="none" stroke="#f2ecd6" stroke-width="5" stroke-opacity="0.6"/><polyline points="-5,48 144,194.3 252,299.6 437,478 572,605 778,793" fill="none" stroke="#ec8a7a" stroke-width="2.8" stroke-dasharray="2.4 3.2" stroke-opacity="0.85"/><circle cx="3" cy="212" r="7.3" fill="#fff" stroke="#000" stroke-width="1.3"/><circle cx="3" cy="212" r="2.3" fill="#000"/><circle cx="129" cy="212.5" r="7.3" fill="#fff" stroke="#000" stroke-width="1.3"/><circle cx="129" cy="212.5" r="2.3" fill="#000"/><circle cx="272.5" cy="329.5" r="7.3" fill="#fff" stroke="#000" stroke-width="1.3"/><circle cx="272.5" cy="329.5" r="2.3" fill="#000"/><circle cx="437" cy="478.8" r="7.3" fill="#f4ea10" stroke="#000" stroke-width="1.6"/><path d="M432 473.8L442 483.8M442 473.8L432 483.8" stroke="#c8a800" stroke-width="1"/><circle cx="437" cy="478.8" r="2.3" fill="#6a1a10"/></svg>
<div class="t" style="left:61px;top:634px;font-size:17px;line-height:17px;transform:rotate(66deg);transform-origin:0 0;color:#000">nsg_1983</div>
<div style="left:527px;top:725px;width:154px;height:45px;background:#ffff00;border:2px solid #000;"></div>
</div>
<div class="t" style="left:878.50px;top:935.87px;font-size:20px;line-height:20px;color:#000;font-weight:bold;transform:scaleX(0.9608);transform-origin:0 0;">Bild 14</div>
<div style="left:308px;top:199px;width:1px;height:791px;background:#6f7a6f;"></div>
<div style="left:308px;top:199px;width:1050px;height:1px;background:#7d877d;"></div>
<div style="left:308px;top:989px;width:1050px;height:1px;background:#8a948a;"></div>
<div style="left:1px;top:199px;width:49px;height:791px;background:#f0f0f0;"></div>
<div style="left:251px;top:100px;width:31px;height:30px;background:#cce4f7;border:1px solid #99c9ef;"></div>
<div style="left:1031px;top:66px;width:31px;height:30px;background:#cce4f7;border:1px solid #99c9ef;"></div>
<div style="left:44px;top:134px;width:46px;height:29px;background:#cce4f7;border:1px solid #99c9ef;"></div>
<div style="left:73px;top:135px;width:1px;height:27px;background:#99c9ef;"></div>
<div style="left:5px;top:68px;width:2px;height:26px;background-image:repeating-linear-gradient(#b8b8b8 0 2px,transparent 2px 4px);"></div>
<div style="left:5px;top:102px;width:2px;height:26px;background-image:repeating-linear-gradient(#b8b8b8 0 2px,transparent 2px 4px);"></div>
<div style="left:5px;top:136px;width:2px;height:24px;background-image:repeating-linear-gradient(#b8b8b8 0 2px,transparent 2px 4px);"></div>
<div style="left:5px;top:170px;width:2px;height:24px;background-image:repeating-linear-gradient(#b8b8b8 0 2px,transparent 2px 4px);"></div>
<div style="left:212px;top:68px;width:2px;height:26px;background-image:repeating-linear-gradient(#b8b8b8 0 2px,transparent 2px 4px);"></div>
<div style="left:201px;top:66px;width:1px;height:30px;background:#d4d4d4;"></div>
<div style="left:660px;top:68px;width:2px;height:26px;background-image:repeating-linear-gradient(#b8b8b8 0 2px,transparent 2px 4px);"></div>
<div style="left:652px;top:66px;width:1px;height:30px;background:#d4d4d4;"></div>
<svg style="position:absolute;left:16.0px;top:69.0px" width="24.0" height="24.0" viewBox="0 0 24 24"><path d="M4.5 1.5H14L19.5 7V22.5H4.5Z" fill="#fff" stroke="#555"/><path d="M14 1.5V7H19.5" fill="none" stroke="#555"/></svg>
<svg style="position:absolute;left:47.0px;top:69.0px" width="24.0" height="24.0" viewBox="0 0 24 24"><path d="M1.5 5.5H8L10 7.5H20.5V20.5H1.5Z" fill="#f0c540" stroke="#d0a020"/><path d="M1.5 20.5L4.5 10.5H23L20.5 20.5Z" fill="#f7d55a" stroke="#d0a020"/></svg>
<svg style="position:absolute;left:78.0px;top:69.0px" width="24.0" height="24.0" viewBox="0 0 24 24"><rect x="2" y="2" width="20" height="20" rx="2" fill="#6a8fbf" stroke="#4a6a90"/><rect x="5" y="3" width="14" height="9" fill="#fff"/><path d="M6.5 5.5H17.5M6.5 7.5H17.5M6.5 9.5H17.5" stroke="#556" stroke-width="0.9"/><rect x="7" y="15" width="10" height="6" fill="#eee"/><rect x="8.5" y="16" width="2.5" height="4" fill="#333"/></svg>
<svg style="position:absolute;left:109.5px;top:69.0px" width="24.0" height="24.0" viewBox="0 0 24 24"><path d="M2.5 2.5H17L22 7.5V19.5H2.5Z" fill="#fff" stroke="#777"/><rect x="2.5" y="2.5" width="7" height="17" fill="#f0d850" stroke="#c0a820"/><rect x="12" y="12" width="11" height="11" rx="1.2" fill="#d2c22a" stroke="#a89a10" stroke-width="0.7"/><path d="M17.5 13.8V21.2M13.8 17.5H21.2M14.8 14.8L20.2 20.2M20.2 14.8L14.8 20.2" stroke="#fff" stroke-width="1.2"/><circle cx="17.5" cy="17.5" r="1.1" fill="#d2c22a"/></svg>
<svg style="position:absolute;left:140.5px;top:69.0px" width="24.0" height="24.0" viewBox="0 0 24 24"><path d="M2.5 3.5H18L21.5 7V20.5H2.5Z" fill="#fff" stroke="#777"/><path d="M7 8L17 19" stroke="#c8b070" stroke-width="3"/><circle cx="8" cy="8.5" r="3" fill="none" stroke="#888" stroke-width="2"/></svg>
<svg style="position:absolute;left:171.0px;top:69.0px" width="24.0" height="24.0" viewBox="0 0 24 24"><circle cx="7" cy="6" r="4" fill="#d9603a"/><rect x="3" y="13" width="8" height="8" fill="#6aa56a"/><path d="M14 10L21 3" stroke="#4a7aa8" stroke-width="2.5"/><text x="13.5" y="21" font-size="11" font-family="Liberation Sans" fill="#444">a</text></svg>
<svg style="position:absolute;left:216.0px;top:69.0px" width="24.0" height="24.0" viewBox="0 0 24 24"><g fill="#fff" stroke="#222" stroke-width="1.1"><rect x="7.5" y="4" width="3" height="12" rx="1.5"/><rect x="10.5" y="2" width="3" height="13" rx="1.5"/><rect x="13.5" y="3" width="3" height="12" rx="1.5"/><rect x="16.5" y="6" width="3" height="10" rx="1.5"/><path d="M7.5 12V16L5 13C4 12 2.5 13 3.5 14.5L8 21.5H17C18.5 20 19.5 18 19.5 15V12Z"/></g><path d="M8 13H19" stroke="#fff" stroke-width="2"/></svg>
<svg style="position:absolute;left:247.0px;top:69.0px" width="24.0" height="24.0" viewBox="0 0 24 24"><rect x="4" y="4" width="16" height="16" fill="#f0dc3a" stroke="#c0a820"/><path d="M12 1L15 5H9Z M12 23L15 19H9Z M1 12L5 9V15Z M23 12L19 9V15Z" fill="#5a88c0"/><path d="M12 4V20M4 12H20" stroke="#5a88c0" stroke-width="2.5"/></svg>
<svg style="position:absolute;left:278.0px;top:69.0px" width="24.0" height="24.0" viewBox="0 0 24 24"><path d="M3 22L9 16" stroke="#d8c040" stroke-width="3.5"/><path d="M3 22L9 16" stroke="#a09030" stroke-width="0.6"/><circle cx="14.5" cy="9.5" r="7.5" fill="#fff" stroke="#555" stroke-width="1.2"/><path d="M14.5 5V14M10 9.5H19" stroke="#4a7ab0" stroke-width="2.5"/></svg>
<svg style="position:absolute;left:309.0px;top:69.0px" width="24.0" height="24.0" viewBox="0 0 24 24"><path d="M3 22L9 16" stroke="#d8c040" stroke-width="3.5"/><path d="M3 22L9 16" stroke="#a09030" stroke-width="0.6"/><circle cx="14.5" cy="9.5" r="7.5" fill="#fff" stroke="#555" stroke-width="1.2"/><path d="M10 9.5H19" stroke="#4a7ab0" stroke-width="2.5"/></svg>
<svg style="position:absolute;left:340.0px;top:69.0px" width="24.0" height="24.0" viewBox="0 0 24 24"><path d="M2 2H9L2 9Z M22 2H15L22 9Z M22 22H15L22 15Z" fill="#5a88c0"/><path d="M3 22L9 16" stroke="#d8c040" stroke-width="3.5"/><path d="M3 22L9 16" stroke="#a09030" stroke-width="0.6"/><circle cx="14.5" cy="9.5" r="7.5" fill="#fff" stroke="#555" stroke-width="1.2"/></svg>
<svg style="position:absolute;left:371.0px;top:69.0px" width="24.0" height="24.0" viewBox="0 0 24 24"><rect x="4" y="3" width="8" height="14" fill="#f0dc3a" stroke="#c0a820"/><path d="M3 22L9 16" stroke="#d8c040" stroke-width="3.5"/><path d="M3 22L9 16" stroke="#a09030" stroke-width="0.6"/><circle cx="14.5" cy="9.5" r="7.5" fill="#f4f4ec" stroke="#555" stroke-width="1.2"/></svg>
<svg style="position:absolute;left:402.0px;top:69.0px" width="24.0" height="24.0" viewBox="0 0 24 24"><rect x="4" y="3" width="8" height="14" fill="#f8f8f8" stroke="#999"/><path d="M3 22L9 16" stroke="#d8c040" stroke-width="3.5"/><path d="M3 22L9 16" stroke="#a09030" stroke-width="0.6"/><circle cx="14.5" cy="9.5" r="7.5" fill="#f4f4f4" stroke="#555" stroke-width="1.2"/></svg>
<svg style="position:absolute;left:433.0px;top:69.0px" width="24.0" height="24.0" viewBox="0 0 24 24"><g opacity="0.35"><path d="M3 22L9 16" stroke="#d8c040" stroke-width="3.5"/><path d="M3 22L9 16" stroke="#a09030" stroke-width="0.6"/><circle cx="14.5" cy="9.5" r="7.5" fill="#fff" stroke="#555" stroke-width="1.2"/><text x="9.5" y="13" font-size="8" font-family="Liberation Sans" fill="#777">1:1</text></g></svg>
<svg style="position:absolute;left:464.0px;top:69.0px" width="24.0" height="24.0" viewBox="0 0 24 24"><path d="M3 22L9 16" stroke="#d8c040" stroke-width="3.5"/><path d="M3 22L9 16" stroke="#a09030" stroke-width="0.6"/><circle cx="14.5" cy="9.5" r="7.5" fill="#fff" stroke="#555" stroke-width="1.2"/><rect x="13" y="13" width="10" height="10" fill="#5a88c0"/><path d="M20 15L16 18L20 21" stroke="#fff" stroke-width="1.8" fill="none"/></svg>
<svg style="position:absolute;left:495.0px;top:69.0px" width="24.0" height="24.0" viewBox="0 0 24 24"><g opacity="0.3"><path d="M3 22L9 16" stroke="#d8c040" stroke-width="3.5"/><path d="M3 22L9 16" stroke="#a09030" stroke-width="0.6"/><circle cx="14.5" cy="9.5" r="7.5" fill="#fff" stroke="#555" stroke-width="1.2"/><rect x="13" y="13" width="10" height="10" fill="#999"/></g></svg>
<svg style="position:absolute;left:527.0px;top:69.0px" width="24.0" height="24.0" viewBox="0 0 24 24"><path d="M3 2.5H19.5V21.5H3Z" fill="#e8e8e8" stroke="#999"/><path d="M3 2.5V21.5" stroke="#ccc" stroke-width="2"/><rect x="12" y="12" width="11" height="11" rx="1.2" fill="#d2c22a" stroke="#a89a10" stroke-width="0.7"/><path d="M17.5 13.8V21.2M13.8 17.5H21.2M14.8 14.8L20.2 20.2M20.2 14.8L14.8 20.2" stroke="#fff" stroke-width="1.2"/><circle cx="17.5" cy="17.5" r="1.1" fill="#d2c22a"/></svg>
<svg style="position:absolute;left:558.0px;top:69.0px" width="24.0" height="24.0" viewBox="0 0 24 24"><path d="M5 1.5H14V16L9.5 12L5 16Z" fill="#5a88c0" stroke="#40658f"/><path d="M5 16L8 22" stroke="#5a88c0" stroke-width="2"/><rect x="12" y="12" width="11" height="11" rx="1.2" fill="#d2c22a" stroke="#a89a10" stroke-width="0.7"/><path d="M17.5 13.8V21.2M13.8 17.5H21.2M14.8 14.8L20.2 20.2M20.2 14.8L14.8 20.2" stroke="#fff" stroke-width="1.2"/><circle cx="17.5" cy="17.5" r="1.1" fill="#d2c22a"/></svg>
<svg style="position:absolute;left:588.0px;top:69.0px" width="24.0" height="24.0" viewBox="0 0 24 24"><path d="M3 2.5H20.5V21.5H3Z" fill="#e8e8e8" stroke="#999"/><path d="M13 1H17V9L15 7L13 9Z" fill="#5a88c0"/></svg>
<svg style="position:absolute;left:619.0px;top:69.0px" width="24.0" height="24.0" viewBox="0 0 24 24"><path d="M4 11C4 5 11 2 17 5L19 3V10H12L15 7.5C11 6 7 8 7 11Z" fill="#3d88c8"/><path d="M20 13C20 19 13 22 7 19L5 21V14H12L9 16.5C13 18 17 16 17 13Z" fill="#3d88c8"/></svg>
<svg style="position:absolute;left:663.6px;top:69.0px" width="24.0" height="24.0" viewBox="0 0 24 24"><circle cx="9" cy="9" r="7.5" fill="#6a9ad0" stroke="#4a72a8"/><text x="6.5" y="14" font-size="11" font-style="italic" font-weight="bold" font-family="Liberation Serif" fill="#fff">i</text><path d="M12 11L12 22L15 19L18 23L20 22L17 18L21 17Z" fill="#fff" stroke="#333" stroke-width="0.8"/></svg>
<svg style="position:absolute;left:695.0px;top:69.0px" width="24.0" height="24.0" viewBox="0 0 24 24"><circle cx="9.5" cy="9.5" r="8" fill="#dde4ee" stroke="#8aa" stroke-dasharray="2 1.2"/><circle cx="9.5" cy="9.5" r="5" fill="#6a9ad0" stroke="#4a72a8"/><path d="M8 7L12 9.5L8 12Z" fill="#fff"/><path d="M13 12L13 22L16 19L19 23L21 22L18 18L22 17Z" fill="#fff" stroke="#333" stroke-width="0.8"/></svg>
<svg style="position:absolute;left:741.0px;top:69.0px" width="24.0" height="24.0" viewBox="0 0 24 24"><rect x="1.5" y="1.5" width="19" height="19" fill="#e4e4e4" stroke="#333" stroke-dasharray="1.5 1.5"/><rect x="2" y="2" width="13" height="12" fill="#f0dc3a"/><path d="M11 9L11 22L14 19L17 23L19 22L16 18L20 17Z" fill="#fff" stroke="#333" stroke-width="0.8"/></svg>
<svg style="position:absolute;left:787.5px;top:69.0px" width="24.0" height="24.0" viewBox="0 0 24 24"><rect x="1.5" y="2.5" width="13" height="11" fill="#eee" stroke="#888"/><path d="M3.5 5.5H12.5M3.5 9.5H12.5" stroke="#888" stroke-width="1.5"/><rect x="7.5" y="8.5" width="14" height="13" fill="#f0dc3a" stroke="#c0a820"/></svg>
<svg style="position:absolute;left:833.6px;top:69.0px" width="24.0" height="24.0" viewBox="0 0 24 24"><rect x="2" y="2" width="14" height="14" fill="#f0dc3a" stroke="#c0a820"/><rect x="13" y="13" width="10" height="10" rx="2" fill="#e05555"/><circle cx="18" cy="18" r="3" fill="none" stroke="#fff" stroke-width="1.2"/></svg>
<svg style="position:absolute;left:864.0px;top:69.0px" width="24.0" height="24.0" viewBox="0 0 24 24"><rect x="2.5" y="2.5" width="19" height="19" fill="#fff" stroke="#6a9ad0"/><rect x="2.5" y="2.5" width="19" height="4" fill="#a8c4e8"/><path d="M5 10H10M12 10H19M5 14H10M12 14H19M5 18H10M12 18H19" stroke="#6a9ad0" stroke-width="1.2"/></svg>
<svg style="position:absolute;left:895.0px;top:69.0px" width="24.0" height="24.0" viewBox="0 0 24 24"><path d="M2 2V21H23" stroke="#555" stroke-width="1.5" fill="none"/><path d="M2 6H22M2 11H22M2 16H22" stroke="#666" stroke-width="0.8"/><g fill="none" stroke-width="1.2"><path d="M8 4L10 6L8 8L6 6Z M16 4L18 6L16 8L14 6Z" stroke="#d05060"/><path d="M6 9L8 11L6 13L4 11Z M12 9L14 11L12 13L10 11Z" stroke="#60a870"/><path d="M6 14L8 16L6 18L4 16Z M11 14L13 16L11 18L9 16Z M16 14L18 16L16 18L14 16Z" stroke="#5a88c0"/></g></svg>
<svg style="position:absolute;left:926.0px;top:69.0px" width="24.0" height="24.0" viewBox="0 0 24 24"><g transform="translate(12,12)"><g fill="#7aa5d8" stroke="#5a80b0" stroke-width="0.6"><rect x="-2" y="-11" width="4" height="6" rx="1.5" transform="rotate(0)"/><rect x="-2" y="-11" width="4" height="6" rx="1.5" transform="rotate(45)"/><rect x="-2" y="-11" width="4" height="6" rx="1.5" transform="rotate(90)"/><rect x="-2" y="-11" width="4" height="6" rx="1.5" transform="rotate(135)"/><rect x="-2" y="-11" width="4" height="6" rx="1.5" transform="rotate(180)"/><rect x="-2" y="-11" width="4" height="6" rx="1.5" transform="rotate(225)"/><rect x="-2" y="-11" width="4" height="6" rx="1.5" transform="rotate(270)"/><rect x="-2" y="-11" width="4" height="6" rx="1.5" transform="rotate(315)"/><circle r="7"/></g><circle r="2.5" fill="#fff"/></g></svg>
<svg style="position:absolute;left:956.7px;top:69.0px" width="24.0" height="24.0" viewBox="0 0 24 24"><text x="3" y="21" font-size="24" font-weight="bold" font-family="Liberation Sans" fill="#9a1a9a">Σ</text></svg>
<svg style="position:absolute;left:988.0px;top:69.0px" width="24.0" height="24.0" viewBox="0 0 24 24"><path d="M2 4H21M2 2V6M21 2V6" stroke="#445" stroke-width="1.8"/><rect x="1.5" y="10.5" width="21" height="9" fill="#ddd" stroke="#666"/><path d="M4 11V15M7 11V14M10 11V16M13 11V14M16 11V16M19 11V14" stroke="#555" stroke-width="0.8"/></svg>
<svg style="position:absolute;left:1035.0px;top:69.0px" width="24.0" height="24.0" viewBox="0 0 24 24"><rect x="2.5" y="2.5" width="19" height="13" rx="3" fill="#f8e880" stroke="#d0b840"/><path d="M8 15L5 20" stroke="#d0b840" stroke-width="1.5"/><circle cx="6" cy="20" r="3" fill="#6aa56a" stroke="#3f7f3f" stroke-width="0.8"/></svg>
<svg style="position:absolute;left:1065.0px;top:69.0px" width="24.0" height="24.0" viewBox="0 0 24 24"><rect x="3.5" y="1.5" width="19" height="16" fill="#f8f8f8" stroke="#999"/><path d="M8 17.5L3 23L11 17.5" fill="#f8f8f8" stroke="#999"/><text x="7" y="15" font-size="15" font-family="Liberation Serif" fill="#333">T</text></svg>
<svg style="position:absolute;left:725px;top:78.5px;" width="10" height="5" viewBox="0 0 10 5"><path d="M0 0H10L5 5Z" fill="#000"/></svg>
<svg style="position:absolute;left:771px;top:78.5px;" width="10" height="5" viewBox="0 0 10 5"><path d="M0 0H10L5 5Z" fill="#000"/></svg>
<svg style="position:absolute;left:817px;top:78.5px;" width="10" height="5" viewBox="0 0 10 5"><path d="M0 0H10L5 5Z" fill="#000"/></svg>
<svg style="position:absolute;left:1018.5px;top:78.5px;" width="10" height="5" viewBox="0 0 10 5"><path d="M0 0H10L5 5Z" fill="#000"/></svg>
<svg style="position:absolute;left:1095.5px;top:78.5px;" width="10" height="5" viewBox="0 0 10 5"><path d="M0 0H10L5 5Z" fill="#000"/></svg>
<div style="left:171px;top:104px;width:1px;height:22px;background:#d4d4d4;"></div>
<div style="left:207.4px;top:98px;width:1px;height:32px;background:#d4d4d4;"></div>
<div style="left:213px;top:102px;width:2px;height:26px;background-image:repeating-linear-gradient(#b8b8b8 0 2px,transparent 2px 4px);"></div>
<div style="left:608.6px;top:98px;width:1px;height:32px;background:#d4d4d4;"></div>
<div style="left:614px;top:102px;width:2px;height:26px;background-image:repeating-linear-gradient(#b8b8b8 0 2px,transparent 2px 4px);"></div>
<div style="left:686.4px;top:104px;width:1px;height:22px;background:#d4d4d4;"></div>
<div style="left:755px;top:104px;width:1px;height:22px;background:#d4d4d4;"></div>
<div style="left:915.5px;top:98px;width:1px;height:32px;background:#d4d4d4;"></div>
<div style="left:920.6px;top:102px;width:2px;height:26px;background-image:repeating-linear-gradient(#b8b8b8 0 2px,transparent 2px 4px);"></div>
<div style="left:1053.5px;top:98px;width:1px;height:32px;background:#d4d4d4;"></div>
<div style="left:1058.7px;top:102px;width:2px;height:26px;background-image:repeating-linear-gradient(#b8b8b8 0 2px,transparent 2px 4px);"></div>
<div style="left:1160px;top:98px;width:1px;height:32px;background:#d4d4d4;"></div>
<div style="left:1165px;top:102px;width:2px;height:26px;background-image:repeating-linear-gradient(#b8b8b8 0 2px,transparent 2px 4px);"></div>
<div style="left:1268.6px;top:98px;width:1px;height:32px;background:#d4d4d4;"></div>
<div style="left:1274px;top:102px;width:2px;height:26px;background-image:repeating-linear-gradient(#b8b8b8 0 2px,transparent 2px 4px);"></div>
<div style="left:1313px;top:98px;width:1px;height:32px;background:#d4d4d4;"></div>
<div style="left:1319px;top:102px;width:2px;height:26px;background-image:repeating-linear-gradient(#b8b8b8 0 2px,transparent 2px 4px);"></div>
<svg style="position:absolute;left:16.0px;top:103.0px" width="24.0" height="24.0" viewBox="0 0 24 24"><rect x="1" y="6" width="12" height="14" transform="rotate(-15 7 13)" fill="#d97a30" stroke="#a85a20" stroke-width="0.6"/><rect x="3.5" y="4.5" width="12" height="14" transform="rotate(-8 9 11)" fill="#f0c540"/><rect x="7.5" y="1.5" width="13" height="14" transform="rotate(6 14 8)" fill="#5a88c0" stroke="#40658f" stroke-width="0.8"/><rect x="14" y="14" width="10" height="10" rx="1.5" fill="#6aa56a" stroke="#3f7f3f" stroke-width="0.8"/><path d="M19.0 16V22M16 19.0H22" stroke="#fff" stroke-width="2"/></svg>
<svg style="position:absolute;left:47.0px;top:103.0px" width="24.0" height="24.0" viewBox="0 0 24 24"><path d="M2 10L12 6L22 10V19L12 23L2 19Z" fill="#e8c830" stroke="#705a10" stroke-width="0.8"/><path d="M2 10L12 14L22 10M12 14V23" stroke="#705a10" stroke-width="0.8" fill="none"/><circle cx="12" cy="8" r="6" fill="#5a88c0" stroke="#40658f" stroke-width="0.8"/><path d="M9 6C10 7 12 6 13 8S11 11 12 12" stroke="#2a4a70" stroke-width="1.5" fill="none"/><rect x="13" y="14" width="10" height="10" rx="1.2" fill="#d2c22a" stroke="#a89a10" stroke-width="0.7"/><path d="M18.0 15.8V22.2M14.8 19.0H21.2M15.8 16.8L20.2 21.2M20.2 16.8L15.8 21.2" stroke="#fff" stroke-width="1.2"/><circle cx="18.0" cy="19.0" r="1.1" fill="#d2c22a"/></svg>
<svg style="position:absolute;left:78.0px;top:103.0px" width="24.0" height="24.0" viewBox="0 0 24 24"><path d="M3 3L9 20L15 4L22 3" fill="none" stroke="#333" stroke-width="1.3"/><circle cx="3" cy="3" r="1.6" fill="#fff" stroke="#333" stroke-width="0.8"/><circle cx="15" cy="4" r="1.6" fill="#fff" stroke="#333" stroke-width="0.8"/><circle cx="22" cy="3" r="1.6" fill="#fff" stroke="#333" stroke-width="0.8"/><rect x="14" y="14" width="10" height="10" rx="1.2" fill="#d2c22a" stroke="#a89a10" stroke-width="0.7"/><path d="M19.0 15.8V22.2M15.8 19.0H22.2M16.8 16.8L21.2 21.2M21.2 16.8L16.8 21.2" stroke="#fff" stroke-width="1.2"/><circle cx="19.0" cy="19.0" r="1.1" fill="#d2c22a"/></svg>
<svg style="position:absolute;left:109.0px;top:103.0px" width="24.0" height="24.0" viewBox="0 0 24 24"><path d="M3 22C6 14 12 6 21 2C19 8 14 15 5 20Z" fill="#7aa0d0" stroke="#4a70a0" stroke-width="0.8"/><path d="M3 22L18 5" stroke="#40608f" stroke-width="0.6"/><rect x="14" y="14" width="10" height="10" rx="1.2" fill="#d2c22a" stroke="#a89a10" stroke-width="0.7"/><path d="M19.0 15.8V22.2M15.8 19.0H22.2M16.8 16.8L21.2 21.2M21.2 16.8L16.8 21.2" stroke="#fff" stroke-width="1.2"/><circle cx="19.0" cy="19.0" r="1.1" fill="#d2c22a"/></svg>
<svg style="position:absolute;left:141.5px;top:103.0px" width="24.0" height="24.0" viewBox="0 0 24 24"><rect x="2.5" y="6.5" width="18" height="11" fill="#5a88c0" stroke="#3a5f8f"/><path d="M5 2V6M8 2V6M11 2V6M14 2V6M17 2V6M5 18V22M8 18V22M11 18V22M14 18V22M17 18V22" stroke="#3a5f8f" stroke-width="1.2"/><rect x="14" y="14" width="10" height="10" rx="1.2" fill="#d2c22a" stroke="#a89a10" stroke-width="0.7"/><path d="M19.0 15.8V22.2M15.8 19.0H22.2M16.8 16.8L21.2 21.2M21.2 16.8L16.8 21.2" stroke="#fff" stroke-width="1.2"/><circle cx="19.0" cy="19.0" r="1.1" fill="#d2c22a"/></svg>
<svg style="position:absolute;left:178.5px;top:103.0px" width="24.0" height="24.0" viewBox="0 0 24 24"><rect x="1.5" y="1.5" width="21" height="21" rx="1.5" fill="#bcd0e8" stroke="#5a7aa0"/><path d="M3 3L9 20L15 4L21 3" fill="none" stroke="#333" stroke-width="1.2"/><circle cx="9" cy="20" r="1.6" fill="#fff" stroke="#333" stroke-width="0.8"/><rect x="14" y="14" width="10" height="10" rx="1.2" fill="#d2c22a" stroke="#a89a10" stroke-width="0.7"/><path d="M19.0 15.8V22.2M15.8 19.0H22.2M16.8 16.8L21.2 21.2M21.2 16.8L16.8 21.2" stroke="#fff" stroke-width="1.2"/><circle cx="19.0" cy="19.0" r="1.1" fill="#d2c22a"/></svg>
<svg style="position:absolute;left:223.8px;top:103.0px" width="24.0" height="24.0" viewBox="0 0 24 24"><g transform="translate(-3,0)"><path d="M14.5 1L19.5 4L9.5 19L4.5 16Z" fill="#c86a40" stroke="#8a7020" stroke-width="0.8"/><path d="M4.5 16L9.5 19L5 23Z" fill="#ddc89a" stroke="#8a7020" stroke-width="0.5"/><path d="M5 23L5.6 20.5" stroke="#444" stroke-width="1.2"/></g><path d="M14.5 1L19.5 4L9.5 19L4.5 16Z" fill="#e07a30" stroke="#8a7020" stroke-width="0.8"/><path d="M4.5 16L9.5 19L5 23Z" fill="#ddc89a" stroke="#8a7020" stroke-width="0.5"/><path d="M5 23L5.6 20.5" stroke="#444" stroke-width="1.2"/><path d="M14 17H22L18 21Z" fill="#000"/></svg>
<svg style="position:absolute;left:254.5px;top:103.0px" width="24.0" height="24.0" viewBox="0 0 24 24"><path d="M14.5 1L19.5 4L9.5 19L4.5 16Z" fill="#f0d040" stroke="#8a7020" stroke-width="0.8"/><path d="M4.5 16L9.5 19L5 23Z" fill="#ddc89a" stroke="#8a7020" stroke-width="0.5"/><path d="M5 23L5.6 20.5" stroke="#444" stroke-width="1.2"/></svg>
<svg style="position:absolute;left:285.0px;top:103.0px" width="24.0" height="24.0" viewBox="0 0 24 24"><rect x="2" y="2" width="18" height="18" rx="2" fill="#6a8fa8" stroke="#4a6a80"/><rect x="5" y="3" width="12" height="7" fill="#fff"/><rect x="6" y="13" width="9" height="6" fill="#eee"/><g transform="translate(6,5) scale(0.75)"><path d="M14.5 1L19.5 4L9.5 19L4.5 16Z" fill="#e07a30" stroke="#8a7020" stroke-width="0.8"/><path d="M4.5 16L9.5 19L5 23Z" fill="#ddc89a" stroke="#8a7020" stroke-width="0.5"/><path d="M5 23L5.6 20.5" stroke="#444" stroke-width="1.2"/></g></svg>
<svg style="position:absolute;left:316.0px;top:103.0px" width="24.0" height="24.0" viewBox="0 0 24 24"><circle cx="11" cy="4" r="2.6" fill="#7aa07a" stroke="#4f7a4f" stroke-width="0.6"/><circle cx="4" cy="12" r="2.6" fill="#7aa07a" stroke="#4f7a4f" stroke-width="0.6"/><circle cx="19" cy="7" r="2.6" fill="#7aa07a" stroke="#4f7a4f" stroke-width="0.6"/><rect x="13" y="13" width="10" height="10" rx="1.2" fill="#d2c22a" stroke="#a89a10" stroke-width="0.7"/><path d="M18.0 14.8V21.2M14.8 18.0H21.2M15.8 15.8L20.2 20.2M20.2 15.8L15.8 20.2" stroke="#fff" stroke-width="1.2"/><circle cx="18.0" cy="18.0" r="1.1" fill="#d2c22a"/></svg>
<svg style="position:absolute;left:347.0px;top:103.0px" width="24.0" height="24.0" viewBox="0 0 24 24"><rect x="3.5" y="2.5" width="4" height="4" fill="#fff" stroke="#444"/><path d="M7.5 4.5H20M5.5 6.5L3 22" stroke="#666" stroke-width="1"/><path d="M10 22L21 10" stroke="#e8a030" stroke-width="3"/><path d="M10 12L21 22" stroke="#e8a030" stroke-width="3"/><path d="M9 10L13 14" stroke="#888" stroke-width="3"/></svg>
<svg style="position:absolute;left:393.0px;top:103.0px" width="24.0" height="24.0" viewBox="0 0 24 24"><rect x="1.5" y="3.5" width="20" height="5" fill="#f0dc3a" stroke="#c0a820"/><rect x="1.5" y="10.5" width="20" height="5" fill="#f0dc3a" stroke="#c0a820"/><rect x="1.5" y="17.5" width="20" height="5" fill="#f0dc3a" stroke="#c0a820"/><g transform="translate(2,0)"><path d="M14.5 1L19.5 4L9.5 19L4.5 16Z" fill="#e07a30" stroke="#8a7020" stroke-width="0.8"/><path d="M4.5 16L9.5 19L5 23Z" fill="#ddc89a" stroke="#8a7020" stroke-width="0.5"/><path d="M5 23L5.6 20.5" stroke="#444" stroke-width="1.2"/></g></svg>
<svg style="position:absolute;left:422.8px;top:103.0px" width="24.0" height="24.0" viewBox="0 0 24 24"><rect x="1.5" y="2.5" width="12" height="14" fill="#f0dc3a" stroke="#c0a820"/><path d="M4 6H20V22H4Z" fill="#d03030" stroke="#a02020"/><rect x="3" y="4" width="18" height="3" fill="#d03030"/><path d="M8 9V20M12 9V20M16 9V20" stroke="#f0a0a0" stroke-width="1.5"/></svg>
<svg style="position:absolute;left:455.0px;top:103.0px" width="24.0" height="24.0" viewBox="0 0 24 24"><path d="M2 8L16 14M2 14L16 8" stroke="#888" stroke-width="1.2"/><circle cx="18.5" cy="8" r="3" fill="none" stroke="#c04040" stroke-width="1.6"/><circle cx="18.5" cy="16" r="3" fill="none" stroke="#c04040" stroke-width="1.6"/></svg>
<svg style="position:absolute;left:485.6px;top:103.0px" width="24.0" height="24.0" viewBox="0 0 24 24"><path d="M8.5 1.5H16L20.5 6V16.5H8.5Z" fill="#fff" stroke="#777"/><path d="M3.5 6.5H11L15.5 11V22.5H3.5Z" fill="#fff" stroke="#555"/><path d="M5.5 13H13M5.5 16H13M5.5 19H13" stroke="#666" stroke-width="0.8"/></svg>
<svg style="position:absolute;left:517.0px;top:103.0px" width="24.0" height="24.0" viewBox="0 0 24 24"><rect x="2.5" y="2.5" width="17" height="20" fill="#e8dcb0" stroke="#b0a070"/><rect x="7" y="1" width="8" height="4" fill="#aaa"/><path d="M5.5 7.5H14L17.5 11V20.5H5.5Z" fill="#fff" stroke="#666"/><path d="M7 13H15M7 16H15M7 19H15" stroke="#777" stroke-width="0.8"/></svg>
<svg style="position:absolute;left:548.0px;top:103.0px" width="24.0" height="24.0" viewBox="0 0 24 24"><path d="M9 3L2 10L9 16V12C14 12 17 14 17 18C17 20 16 21 15 22C19 21 21 18 21 15C21 10 16 8 9 8Z" fill="#e8803a"/></svg>
<svg style="position:absolute;left:578.0px;top:103.0px" width="24.0" height="24.0" viewBox="0 0 24 24"><g opacity="0.3"><path d="M15 3L22 10L15 16V12C10 12 7 14 7 18C7 20 8 21 9 22C5 21 3 18 3 15C3 10 8 8 15 8Z" fill="#999"/></g></svg>
<svg style="position:absolute;left:622.0px;top:103.0px" width="24.0" height="24.0" viewBox="0 0 24 24"><path d="M5 5.5H22.5V15.5H5L1 10.5Z" fill="#f0dc3a" stroke="#b0a020"/><text x="6" y="13.8" font-size="8" font-weight="bold" font-family="Liberation Sans" fill="#333">abc</text></svg>
<svg style="position:absolute;left:655.0px;top:103.0px" width="24.0" height="24.0" viewBox="0 0 24 24"><circle cx="9" cy="9" r="7.5" fill="#d03030"/><path d="M9 9V1.5A7.5 7.5 0 0 0 1.5 9Z" fill="#f0c540"/><path d="M9 9H1.5A7.5 7.5 0 0 0 9 16.5Z" fill="#3aa040"/><rect x="8" y="17" width="4" height="6" fill="#f0c540"/><rect x="12" y="13" width="4" height="10" fill="#3aa040"/><rect x="16" y="19" width="4" height="4" fill="#a02020"/></svg>
<svg style="position:absolute;left:693.0px;top:103.0px" width="24.0" height="24.0" viewBox="0 0 24 24"><path d="M5 5.5H22.5V15.5H5L1 10.5Z" fill="#d8e8f8" stroke="#7aa0d0"/><text x="6" y="13.8" font-size="8" font-weight="bold" font-family="Liberation Sans" fill="#333">ab</text><circle cx="17" cy="19" r="3.8" fill="#c02020"/><path d="M17 10V16" stroke="#888"/></svg>
<svg style="position:absolute;left:722.5px;top:103.0px" width="24.0" height="24.0" viewBox="0 0 24 24"><path d="M5 5.5H22.5V15.5H5L1 10.5Z" fill="#fde8e8" stroke="#d03030"/><text x="6" y="13.8" font-size="8" font-weight="bold" font-family="Liberation Sans" fill="#d03030">abc</text></svg>
<svg style="position:absolute;left:762.0px;top:103.0px" width="24.0" height="24.0" viewBox="0 0 24 24"><path d="M5 5.5H22.5V15.5H5L1 10.5Z" fill="#f0dc3a" stroke="#b0a020"/><text x="6" y="13.8" font-size="8" font-weight="bold" font-family="Liberation Sans" fill="#333">ab</text><circle cx="17" cy="19" r="3.8" fill="#c02020"/><path d="M17 10V16" stroke="#888"/></svg>
<svg style="position:absolute;left:792.6px;top:103.0px" width="24.0" height="24.0" viewBox="0 0 24 24"><path d="M5 5.5H22.5V15.5H5L1 10.5Z" fill="#f0dc3a" stroke="#b0a020"/><text x="6" y="13.8" font-size="8" font-weight="bold" font-family="Liberation Sans" fill="#333">abc</text><path d="M7 20C10 16 16 16 19 20C16 23 10 23 7 20Z" fill="#fff" stroke="#333" stroke-width="0.8"/><circle cx="13" cy="20" r="2" fill="#2a5ab0"/></svg>
<svg style="position:absolute;left:824.0px;top:103.0px" width="24.0" height="24.0" viewBox="0 0 24 24"><path d="M5 5.5H22.5V15.5H5L1 10.5Z" fill="#f0dc3a" stroke="#b0a020"/><text x="6" y="13.8" font-size="8" font-weight="bold" font-family="Liberation Sans" fill="#333">abc</text><rect x="13" y="14" width="10" height="10" rx="1.5" fill="#3c5060"/><path d="M15 19.0H19M18 16.5L21 19.0L18 21.5" stroke="#fff" stroke-width="2" fill="none"/></svg>
<svg style="position:absolute;left:855.0px;top:103.0px" width="24.0" height="24.0" viewBox="0 0 24 24"><path d="M5 5.5H22.5V15.5H5L1 10.5Z" fill="#f0dc3a" stroke="#b0a020"/><text x="6" y="13.8" font-size="8" font-weight="bold" font-family="Liberation Sans" fill="#333">abc</text><rect x="13" y="14" width="10" height="10" rx="1.5" fill="#3c5060"/><circle cx="18" cy="19" r="2.8" fill="none" stroke="#fff" stroke-width="1.4"/></svg>
<svg style="position:absolute;left:886.0px;top:103.0px" width="24.0" height="24.0" viewBox="0 0 24 24"><path d="M5 5.5H22.5V15.5H5L1 10.5Z" fill="#f0dc3a" stroke="#b0a020"/><text x="6" y="13.8" font-size="8" font-weight="bold" font-family="Liberation Sans" fill="#333">abc</text><rect x="13" y="14" width="10" height="10" rx="1.5" fill="#d8b830"/><path d="M15 22L21 16" stroke="#fff" stroke-width="2"/></svg>
<svg style="position:absolute;left:931.0px;top:103.0px" width="24.0" height="24.0" viewBox="0 0 24 24"><rect x="2" y="3" width="20" height="19" rx="4" fill="#2aa83a" stroke="#17701f"/><path d="M2 9H22M2 15H22" stroke="#1a7a2a"/><path d="M8 19L14 11M12 9L16 13" stroke="#ddd" stroke-width="2.5"/></svg>
<svg style="position:absolute;left:962.0px;top:103.0px" width="24.0" height="24.0" viewBox="0 0 24 24"><text x="0" y="23" font-size="17" font-weight="bold" font-family="Liberation Sans" fill="#3ac83a" stroke="#17701f" stroke-width="0.7">iD</text><path d="M12 12L20 4" stroke="#111" stroke-width="2.2"/><path d="M15 2H23V10Z" fill="#111"/></svg>
<svg style="position:absolute;left:993.0px;top:103.0px" width="24.0" height="24.0" viewBox="0 0 24 24"><rect x="2" y="3" width="20" height="19" fill="#556b40" stroke="#2a8a2a"/><rect x="2" y="3" width="20" height="3" fill="#3ab03a"/><path d="M2 14C6 10 10 16 14 12S20 12 22 14V22H2Z" fill="#7a8a60"/></svg>
<svg style="position:absolute;left:1024.0px;top:103.0px" width="24.0" height="24.0" viewBox="0 0 24 24"><ellipse cx="12" cy="5" rx="9.5" ry="3.5" fill="#a8c4e8" stroke="#40658f"/><path d="M2.5 5V19C2.5 21 7 22.5 12 22.5S21.5 21 21.5 19V5" fill="#6a90c0" stroke="#40658f"/><path d="M2.5 10C2.5 12 7 13.5 12 13.5S21.5 12 21.5 10M2.5 15C2.5 17 7 18.5 12 18.5S21.5 17 21.5 15" fill="none" stroke="#40658f"/></svg>
<svg style="position:absolute;left:1069.0px;top:103.0px" width="24.0" height="24.0" viewBox="0 0 24 24"><circle cx="11" cy="11" r="9.5" fill="#8ab4e0" stroke="#5a80b0"/><path d="M11 1.5V20.5M1.5 11H20.5M3 6H19M3 16H19" stroke="#c8dcf0" stroke-width="1.2"/><path d="M5 5L7 8M15 5L17 8M5 14L7 17M14 14L16 17" stroke="#8a5a40" stroke-width="2"/><rect x="13" y="14" width="10" height="10" rx="1.5" fill="#4a8a4a"/><path d="M15 17H21L18 21Z" fill="#000"/></svg>
<svg style="position:absolute;left:1100.0px;top:103.0px" width="24.0" height="24.0" viewBox="0 0 24 24"><circle cx="11" cy="11" r="9.5" fill="#8ab4e0" stroke="#5a80b0"/><path d="M11 1.5V20.5M1.5 11H20.5M3 6H19M3 16H19" stroke="#c8dcf0" stroke-width="1.2"/><path d="M5 5L7 8M15 5L17 8M5 14L7 17M14 14L16 17" stroke="#8a5a40" stroke-width="2"/><rect x="13" y="14" width="10" height="10" rx="1.5" fill="#6aa56a"/><circle cx="17.5" cy="18.5" r="2.5" fill="none" stroke="#fff" stroke-width="1.2"/></svg>
<svg style="position:absolute;left:1131.0px;top:103.0px" width="24.0" height="24.0" viewBox="0 0 24 24"><circle cx="12" cy="10" r="9.5" fill="#6a9ad0" stroke="#2a4a70"/><path d="M5 6H10M14 6H19M6 12H18" stroke="#fff" stroke-width="1"/><circle cx="6" cy="19" r="4" fill="#111"/><circle cx="18" cy="19" r="4" fill="#111"/><rect x="8" y="14" width="8" height="5" fill="#111"/></svg>
<svg style="position:absolute;left:1176.0px;top:103.0px" width="24.0" height="24.0" viewBox="0 0 24 24"><path d="M11 1C6 1 6 3 6 5V8H12V9H4C2 9 1 11 1 13.5S2 18 4 18H6V15C6 13 8 12 10 12H15C17 12 18 11 18 9V5C18 3 16 1 11 1Z" fill="#3a70b0"/><path d="M12 22C17 22 17 20 17 18V15H11V14H19C21 14 22 12 22 9.5" fill="#f0c830"/><path d="M17 12V18C17 20 15 22 12 22S7 21 7 19V15C7 13 9 12 10 12Z" fill="#f0d040"/><circle cx="9" cy="4" r="1" fill="#fff"/><path d="M16 17L21 19.5L16 22" stroke="#555" stroke-width="1.2" fill="none"/></svg>
<svg style="position:absolute;left:1207.0px;top:103.0px" width="24.0" height="24.0" viewBox="0 0 24 24"><text x="1" y="11" font-size="10" font-weight="bold" font-family="Liberation Sans" fill="#333">KML</text><rect x="8" y="13" width="10" height="10" rx="1.5" fill="#6aa56a" stroke="#3f7f3f" stroke-width="0.8"/><path d="M13.0 15V21M10 18.0H16" stroke="#fff" stroke-width="2"/></svg>
<svg style="position:absolute;left:1284.0px;top:103.0px" width="24.0" height="24.0" viewBox="0 0 24 24"><rect x="3" y="2" width="19" height="20" fill="#5a88c0" stroke="#2a4060"/><rect x="3" y="2" width="4" height="20" fill="#2a4060"/><text x="10" y="17" font-size="14" font-family="Liberation Sans" fill="#fff">?</text></svg>
<svg style="position:absolute;left:1328.0px;top:103.0px" width="24.0" height="24.0" viewBox="0 0 24 24"><path d="M12 1V23M1 12H23" stroke="#555" stroke-width="1"/><circle cx="12" cy="12" r="5" fill="none" stroke="#c05050" stroke-width="1.5" stroke-dasharray="3 2.2"/></svg>
<svg style="position:absolute;left:377.6px;top:112.5px;" width="10" height="5" viewBox="0 0 10 5"><path d="M0 0H10L5 5Z" fill="#000"/></svg>
<div class="t" style="left:1255.00px;top:106.46px;font-size:16px;line-height:16px;color:#000;font-weight:bold;">»</div>
<svg style="position:absolute;left:15.5px;top:136.0px" width="24.0" height="24.0" viewBox="0 0 24 24"><path d="M1.5 22.5V3L21 22.5Z" fill="#f0a060" stroke="#c06020"/><path d="M6 17.5V12L11.5 17.5Z" fill="#fff" stroke="#c06020"/><rect x="15.5" y="3.5" width="6" height="15" fill="#f0dc3a" stroke="#b0a020"/><path d="M16 6H18M16 9H18M16 12H18M16 15H18" stroke="#806a10"/></svg>
<svg style="position:absolute;left:48.5px;top:136.0px" width="24.0" height="24.0" viewBox="0 0 24 24"><circle cx="11" cy="4" r="2.6" fill="#7aa07a" stroke="#4f7a4f" stroke-width="0.6"/><circle cx="4" cy="12" r="2.6" fill="#7aa07a" stroke="#4f7a4f" stroke-width="0.6"/><circle cx="19" cy="7" r="2.6" fill="#7aa07a" stroke="#4f7a4f" stroke-width="0.6"/><rect x="13" y="13" width="10" height="10" rx="1.5" fill="#3c5060"/><path d="M15 18.0H19M18 15.5L21 18.0L18 20.5" stroke="#fff" stroke-width="2" fill="none"/></svg>
<svg style="position:absolute;left:94.0px;top:136.0px" width="24.0" height="24.0" viewBox="0 0 24 24"><g opacity="1"><path d="M3 5C5 1 12 2 16 4S23 5 22 10S18 15 12 14S2 12 3 5Z" fill="#7ab07a" stroke="#4f8a4f" stroke-width="0.8"/></g><rect x="12" y="13" width="10" height="10" rx="1.5" fill="#3c5060"/><circle cx="17" cy="18" r="2.8" fill="none" stroke="#fff" stroke-width="1.4"/></svg>
<svg style="position:absolute;left:124.0px;top:136.0px" width="24.0" height="24.0" viewBox="0 0 24 24"><g opacity="0.35"><circle cx="9" cy="8" r="7" fill="#aaa" stroke="#888"/><path d="M10 10L18 10L22 17L18 23H10L6 17Z" fill="#bbb" stroke="#888"/></g></svg>
<svg style="position:absolute;left:155.0px;top:136.0px" width="24.0" height="24.0" viewBox="0 0 24 24"><g opacity="0.35"><g opacity="1"><path d="M3 5C5 1 12 2 16 4S23 5 22 10S18 15 12 14S2 12 3 5Z" fill="#aaa" stroke="#777" stroke-width="0.8"/></g><ellipse cx="9" cy="8" rx="4" ry="2.5" fill="#eee"/><rect x="12" y="13" width="10" height="10" rx="1.2" fill="#999" stroke="#a89a10" stroke-width="0.7"/><path d="M17.0 14.8V21.2M13.8 18.0H20.2M14.8 15.8L19.2 20.2M19.2 15.8L14.8 20.2" stroke="#fff" stroke-width="1.2"/><circle cx="17.0" cy="18.0" r="1.1" fill="#999"/></g></svg>
<svg style="position:absolute;left:186.5px;top:136.0px" width="24.0" height="24.0" viewBox="0 0 24 24"><g opacity="1"><path d="M3 5C5 1 12 2 16 4S23 5 22 10S18 15 12 14S2 12 3 5Z" fill="#999" stroke="#666" stroke-width="0.8"/></g><path d="M2 22C2 16 6 13 11 14C12 18 8 22 2 22Z" fill="#7ab07a" stroke="#4f8a4f" stroke-width="0.8"/><rect x="12" y="13" width="10" height="10" rx="1.2" fill="#d2c22a" stroke="#a89a10" stroke-width="0.7"/><path d="M17.0 14.8V21.2M13.8 18.0H20.2M14.8 15.8L19.2 20.2M19.2 15.8L14.8 20.2" stroke="#fff" stroke-width="1.2"/><circle cx="17.0" cy="18.0" r="1.1" fill="#d2c22a"/></svg>
<svg style="position:absolute;left:217.0px;top:136.0px" width="24.0" height="24.0" viewBox="0 0 24 24"><g opacity="0.35"><g opacity="1"><path d="M3 5C5 1 12 2 16 4S23 5 22 10S18 15 12 14S2 12 3 5Z" fill="#aaa" stroke="#777" stroke-width="0.8"/></g><rect x="12" y="13" width="10" height="10" rx="1.2" fill="#999" stroke="#a89a10" stroke-width="0.7"/><path d="M17.0 14.8V21.2M13.8 18.0H20.2M14.8 15.8L19.2 20.2M19.2 15.8L14.8 20.2" stroke="#fff" stroke-width="1.2"/><circle cx="17.0" cy="18.0" r="1.1" fill="#999"/></g></svg>
<svg style="position:absolute;left:247.5px;top:136.0px" width="24.0" height="24.0" viewBox="0 0 24 24"><g opacity="0.35"><g opacity="1"><path d="M3 5C5 1 12 2 16 4S23 5 22 10S18 15 12 14S2 12 3 5Z" fill="#aaa" stroke="#777" stroke-width="0.8"/></g><rect x="12" y="13" width="10" height="10" rx="1.5" fill="#aaa" stroke="#b03030" stroke-width="0.7"/><path d="M14.5 15.5L19.5 20.5M19.5 15.5L14.5 20.5" stroke="#fff" stroke-width="2"/></g></svg>
<svg style="position:absolute;left:279.0px;top:136.0px" width="24.0" height="24.0" viewBox="0 0 24 24"><g opacity="1"><path d="M3 5C5 1 12 2 16 4S23 5 22 10S18 15 12 14S2 12 3 5Z" fill="#999" stroke="#666" stroke-width="0.8"/></g><path d="M2 22C2 16 6 13 11 14C12 18 8 22 2 22Z" fill="#7ab07a" stroke="#4f8a4f" stroke-width="0.8"/><rect x="12" y="13" width="10" height="10" rx="1.5" fill="#e05555" stroke="#b03030" stroke-width="0.7"/><path d="M14.5 15.5L19.5 20.5M19.5 15.5L14.5 20.5" stroke="#fff" stroke-width="2"/></svg>
<svg style="position:absolute;left:310.0px;top:136.0px" width="24.0" height="24.0" viewBox="0 0 24 24"><g opacity="0.35"><path d="M3 8C3 2 14 1 19 5S20 13 14 13S12 22 7 22S3 14 3 8Z" fill="#aaa" stroke="#777"/></g></svg>
<svg style="position:absolute;left:341.0px;top:136.0px" width="24.0" height="24.0" viewBox="0 0 24 24"><g opacity="0.35"><path d="M2 18C2 10 10 2 17 2S22 8 20 12S12 22 6 22S2 20 2 18Z" fill="#aaa" stroke="#777"/></g></svg>
<svg style="position:absolute;left:372.5px;top:136.0px" width="24.0" height="24.0" viewBox="0 0 24 24"><g opacity="0.35"><path d="M3 3L9 15L15 4L21 4" stroke="#555" fill="none"/><rect x="11" y="13" width="10" height="10" fill="none" stroke="#555" stroke-width="1.5"/></g></svg>
<svg style="position:absolute;left:402.5px;top:136.0px" width="24.0" height="24.0" viewBox="0 0 24 24"><g opacity="0.35"><path d="M12 1V23M2 12H22" stroke="#555"/><rect x="15" y="2" width="7" height="7" fill="none" stroke="#555"/><rect x="2" y="15" width="7" height="7" fill="none" stroke="#555"/></g></svg>
<svg style="position:absolute;left:434.0px;top:136.0px" width="24.0" height="24.0" viewBox="0 0 24 24"><g opacity="0.35"><circle cx="6" cy="7" r="5.5" fill="#aaa" stroke="#777"/><circle cx="17" cy="7" r="5.5" fill="#aaa" stroke="#777"/><path d="M9 23L12 13L15 23" stroke="#777" fill="none" stroke-width="1.5"/></g></svg>
<svg style="position:absolute;left:465.0px;top:136.0px" width="24.0" height="24.0" viewBox="0 0 24 24"><g opacity="0.35"><circle cx="6" cy="7" r="5.5" fill="#aaa" stroke="#777"/><circle cx="17" cy="7" r="5.5" fill="#aaa" stroke="#777"/><path d="M9 23L12 13L15 23" stroke="#777" fill="none" stroke-width="1.5"/></g></svg>
<svg style="position:absolute;left:496.0px;top:136.0px" width="24.0" height="24.0" viewBox="0 0 24 24"><circle cx="6.5" cy="8" r="6" fill="#7ab07a" stroke="#4f8a4f" stroke-width="0.8"/><circle cx="17.5" cy="8" r="6" fill="#7ab07a" stroke="#4f8a4f" stroke-width="0.8"/><path d="M9 6H15M9 9H15M11 4V11M13 4V11" stroke="#222" stroke-width="0.9"/><path d="M6 14C8 18 10 20 12 21" stroke="#333" fill="none"/></svg>
<svg style="position:absolute;left:526.5px;top:136.0px" width="24.0" height="24.0" viewBox="0 0 24 24"><path d="M2 3H22M2 12H22M2 21H22" stroke="#444" stroke-width="1.2"/><path d="M2 6H9M15 6H22M2 9H9M15 9H22M2 15H9M15 15H22M2 18H9M15 18H22" stroke="#666" stroke-width="0.8"/><path d="M9 3C11 6 13 6 15 3M9 12C11 15 13 15 15 12M9 21C11 18 13 18 15 21" stroke="#333" fill="none" stroke-width="0.9"/></svg>
<svg style="position:absolute;left:558.0px;top:136.0px" width="24.0" height="24.0" viewBox="0 0 24 24"><path d="M14 2L22 6L14 10Z" fill="#7ab07a" stroke="#4f8a4f" stroke-width="0.8"/><path d="M14 2V14" stroke="#555"/><path d="M10 22L14 14L18 22Z" fill="#fff" stroke="#666"/><path d="M11 4C5 5 3 12 6 17" stroke="#333" fill="none" stroke-width="1.2"/><path d="M9 3L12 4L10 7" stroke="#333" fill="none"/></svg>
<svg style="position:absolute;left:77px;top:146.5px;" width="10" height="5" viewBox="0 0 10 5"><path d="M0 0H10L5 5Z" fill="#000"/></svg>
<svg style="position:absolute;left:588px;top:146.5px;" width="10" height="5" viewBox="0 0 10 5"><path d="M0 0H10L5 5Z" fill="#000"/></svg>
<svg style="position:absolute;left:15.0px;top:170.0px" width="24.0" height="24.0" viewBox="0 0 24 24"><rect x="2" y="3" width="20" height="19" fill="#c8e8b8"/><path d="M4 6C8 4 12 10 18 6M3 14C8 18 14 12 21 16" stroke="#9ac88a" stroke-width="2" fill="none"/><circle cx="11" cy="11" r="4" fill="#aad0a0"/><path d="M13 21L21 13" stroke="#3a7a2a" stroke-width="2"/><path d="M14 16L19 20" stroke="#3a7a2a" stroke-width="1.2"/></svg>
<div style="left:6px;top:204px;width:40px;height:2px;background-image:repeating-linear-gradient(90deg,#b8b8b8 0 2px,transparent 2px 4px);"></div>
<svg style="position:absolute;left:6.0px;top:215.0px" width="24.0" height="24.0" viewBox="0 0 24 24"><path d="M2 4L9 19L15 6L21 4" fill="none" stroke="#333" stroke-width="1.2"/><circle cx="2.5" cy="4" r="1.6" fill="#fff" stroke="#333" stroke-width="0.8"/><circle cx="9" cy="19" r="1.6" fill="#fff" stroke="#333" stroke-width="0.8"/><circle cx="15" cy="6" r="1.6" fill="#fff" stroke="#333" stroke-width="0.8"/><circle cx="21" cy="4" r="1.6" fill="#fff" stroke="#333" stroke-width="0.8"/><rect x="14" y="14" width="10" height="10" rx="1.5" fill="#6aa56a" stroke="#3f7f3f" stroke-width="0.8"/><path d="M19.0 16V22M16 19.0H22" stroke="#fff" stroke-width="2"/></svg>
<svg style="position:absolute;left:6.0px;top:245.0px" width="24.0" height="24.0" viewBox="0 0 24 24"><rect x="1" y="2" width="19" height="19" fill="#7a9ac8"/><rect x="1" y="2" width="6.3" height="6.3" fill="#1e3a60"/><rect x="13.6" y="2" width="6.3" height="6.3" fill="#1e3a60"/><rect x="7.3" y="8.3" width="6.3" height="6.3" fill="#1e3a60"/><rect x="1" y="14.6" width="6.3" height="6.3" fill="#1e3a60"/><rect x="14" y="14" width="10" height="10" rx="1.5" fill="#6aa56a" stroke="#3f7f3f" stroke-width="0.8"/><path d="M19.0 16V22M16 19.0H22" stroke="#fff" stroke-width="2"/></svg>
<svg style="position:absolute;left:6.0px;top:275.0px" width="24.0" height="24.0" viewBox="0 0 24 24"><rect x="2" y="2" width="20" height="20" fill="#6a90c0" stroke="#2a4060"/><path d="M12 2V22M2 12H22M2 2L12 12M22 2L12 12" stroke="#2a4060"/><rect x="14" y="14" width="10" height="10" rx="1.5" fill="#6aa56a" stroke="#3f7f3f" stroke-width="0.8"/><path d="M19.0 16V22M16 19.0H22" stroke="#fff" stroke-width="2"/></svg>
<svg style="position:absolute;left:6.0px;top:305.0px" width="24.0" height="24.0" viewBox="0 0 24 24"><path d="M4 4C4 1 12 1 12 6C12 13 6 16 3 17C6 14 8 11 7 9C5 9 4 7 4 4Z" fill="#4a78b0"/><rect x="14" y="14" width="10" height="10" rx="1.5" fill="#6aa56a" stroke="#3f7f3f" stroke-width="0.8"/><path d="M19.0 16V22M16 19.0H22" stroke="#fff" stroke-width="2"/></svg>
<svg style="position:absolute;left:6.0px;top:335.0px" width="24.0" height="24.0" viewBox="0 0 24 24"><path d="M3 22C6 14 12 6 21 2C19 8 14 15 5 20Z" fill="#7aa0d0" stroke="#4a70a0" stroke-width="0.8"/><path d="M3 22L18 5" stroke="#40608f" stroke-width="0.6"/><rect x="14" y="14" width="10" height="10" rx="1.5" fill="#6aa56a" stroke="#3f7f3f" stroke-width="0.8"/><path d="M19.0 16V22M16 19.0H22" stroke="#fff" stroke-width="2"/></svg>
<svg style="position:absolute;left:6.0px;top:365.0px" width="24.0" height="24.0" viewBox="0 0 24 24"><rect x="1.5" y="1.5" width="21" height="21" rx="1.5" fill="#bcd0e8" stroke="#5a7aa0"/><path d="M3 3L9 20L15 4L21 3" fill="none" stroke="#333" stroke-width="1.2"/><circle cx="9" cy="20" r="1.6" fill="#fff" stroke="#333" stroke-width="0.8"/><rect x="14" y="14" width="10" height="10" rx="1.5" fill="#6aa56a" stroke="#3f7f3f" stroke-width="0.8"/><path d="M19.0 16V22M16 19.0H22" stroke="#fff" stroke-width="2"/></svg>
<svg style="position:absolute;left:6.0px;top:395.0px" width="24.0" height="24.0" viewBox="0 0 24 24"><path d="M3 5C3 1 14 1 18 3C22 5 21 12 18 14L17 20C16 22 13 21 13 19V14C10 15 6 14 4 11C3 9 3 7 3 5Z" fill="#3a6aa8" stroke="#1e3a60"/><rect x="14" y="14" width="10" height="10" rx="1.5" fill="#6aa56a" stroke="#3f7f3f" stroke-width="0.8"/><path d="M19.0 16V22M16 19.0H22" stroke="#fff" stroke-width="2"/></svg>
<svg style="position:absolute;left:6.0px;top:425.0px" width="24.0" height="24.0" viewBox="0 0 24 24"><circle cx="11" cy="11" r="9.5" fill="#8ab4e0" stroke="#5a80b0"/><path d="M11 1.5V20.5M1.5 11H20.5M3 6H19M3 16H19" stroke="#c8dcf0" stroke-width="1.2"/><path d="M5 5L7 8M15 5L17 8M5 14L7 17M14 14L16 17" stroke="#8a5a40" stroke-width="2"/><rect x="13" y="13" width="10" height="10" rx="1.5" fill="#6aa56a" stroke="#3f7f3f" stroke-width="0.8"/><path d="M18.0 15V21M15 18.0H21" stroke="#fff" stroke-width="2"/></svg>
<svg style="position:absolute;left:6.0px;top:454.0px" width="24.0" height="24.0" viewBox="0 0 24 24"><circle cx="11" cy="11" r="9.5" fill="#2a5a98" stroke="#1a3a68"/><path d="M2 8H20M2 14H20M11 1.5V20.5" stroke="#fff" stroke-width="1.4"/><ellipse cx="11" cy="11" rx="4.5" ry="9.5" fill="none" stroke="#fff" stroke-width="1.2"/><rect x="13" y="13" width="10" height="10" rx="1.5" fill="#6aa56a" stroke="#3f7f3f" stroke-width="0.8"/><path d="M18.0 15V21M15 18.0H21" stroke="#fff" stroke-width="2"/></svg>
<svg style="position:absolute;left:6.0px;top:484.0px" width="24.0" height="24.0" viewBox="0 0 24 24"><circle cx="11" cy="11" r="9.5" fill="#bcd4ec" stroke="#5a80b0"/><path d="M2 8H20M2 14H20M11 1.5V20.5" stroke="#7a9ac8"/><path d="M4 5L9 17L13 7L18 5" fill="none" stroke="#333" stroke-width="1.1"/><rect x="13" y="13" width="10" height="10" rx="1.5" fill="#6aa56a" stroke="#3f7f3f" stroke-width="0.8"/><path d="M18.0 15V21M15 18.0H21" stroke="#fff" stroke-width="2"/></svg>
<svg style="position:absolute;left:6.0px;top:514.0px" width="24.0" height="24.0" viewBox="0 0 24 24"><path d="M2 4L9 19L15 6L21 4" fill="none" stroke="#333" stroke-width="1.2"/><circle cx="2.5" cy="4" r="1.6" fill="#fff" stroke="#333" stroke-width="0.8"/><circle cx="15" cy="6" r="1.6" fill="#fff" stroke="#333" stroke-width="0.8"/><circle cx="21" cy="4" r="1.6" fill="#fff" stroke="#333" stroke-width="0.8"/><rect x="13" y="14" width="10" height="10" rx="1.2" fill="#f0d040" stroke="#a89a10" stroke-width="0.7"/><path d="M18.0 15.8V22.2M14.8 19.0H21.2M15.8 16.8L20.2 21.2M20.2 16.8L15.8 21.2" stroke="#fff" stroke-width="1.2"/><circle cx="18.0" cy="19.0" r="1.1" fill="#f0d040"/></svg>
<svg style="position:absolute;left:15.0px;top:545.0px" width="24.0" height="24.0" viewBox="0 0 24 24"><rect x="3" y="3" width="18" height="18" fill="#fff" stroke="#2a4a80"/><path d="M3 7H21M3 11H21M3 15H21M7 3V21M11 3V21M15 3V21" stroke="#3a6aa8" stroke-width="1.2"/><rect x="14" y="14" width="10" height="10" rx="1.5" fill="#6aa56a" stroke="#3f7f3f" stroke-width="0.8"/><path d="M19.0 16V22M16 19.0H22" stroke="#fff" stroke-width="2"/></svg>
<svg style="position:absolute;left:36px;top:404.5px;" width="10" height="5" viewBox="0 0 10 5"><path d="M0 0H10L5 5Z" fill="#000"/></svg>
<svg style="position:absolute;left:36px;top:434.5px;" width="10" height="5" viewBox="0 0 10 5"><path d="M0 0H10L5 5Z" fill="#000"/></svg>
<svg style="position:absolute;left:36px;top:493.5px;" width="10" height="5" viewBox="0 0 10 5"><path d="M0 0H10L5 5Z" fill="#000"/></svg>
<svg style="position:absolute;left:36px;top:523.5px;" width="10" height="5" viewBox="0 0 10 5"><path d="M0 0H10L5 5Z" fill="#000"/></svg>
<svg style="position:absolute;left:7.6px;top:8.6px" width="22.8" height="22.8" viewBox="0 0 24 24"><circle cx="10.5" cy="10.5" r="7.6" fill="none" stroke="#7ab030" stroke-width="4.2"/><path d="M11 11L20 20" stroke="#5a9a20" stroke-width="4.5"/><path d="M9 9L13 13" stroke="#f0b020" stroke-width="3"/><circle cx="9.5" cy="9.5" r="1.8" fill="#e86030"/></svg>
<div style="left:51px;top:222px;width:252px;height:10px;background:#dcdcdc;border-bottom:1px solid #c8c8c8;"></div>
<div class="t" style="left:58.00px;top:208.80px;font-size:15px;line-height:15px;color:#000;">Layer</div>
<div style="left:256px;top:218px;width:12px;height:6px;background:#333;"></div>
<svg style="position:absolute;left:279px;top:220px;" width="20" height="5" viewBox="0 0 20 5"><path d="M0 0H7L3.5 4Z M11 0H18L14.5 4Z" fill="#222"/></svg>
<svg style="position:absolute;left:55.4px;top:238.4px" width="17.3" height="17.3" viewBox="0 0 24 24"><path d="M2 14L8 9L14 15L9 20Z" fill="#e06030"/><path d="M5 12L10 8L14 12" fill="#f0c040"/><path d="M10 15L20 3" stroke="#e0a020" stroke-width="3"/></svg>
<svg style="position:absolute;left:78.4px;top:238.4px" width="17.3" height="17.3" viewBox="0 0 24 24"><g fill="#fff" stroke="#888" stroke-width="0.9"><rect x="3.5" y="7.5" width="10" height="13"/><rect x="6.5" y="4.5" width="11" height="13"/></g><path d="M12 4V13C12 15 15 15 15 13V2" stroke="#5a6a7a" stroke-width="1.2" fill="none"/><circle cx="18" cy="19" r="4" fill="#6aa56a"/></svg>
<svg style="position:absolute;left:101.4px;top:238.4px" width="17.3" height="17.3" viewBox="0 0 24 24"><path d="M1 11C6 4 16 4 21 11C16 17 6 17 1 11Z" fill="#bcc8d8" stroke="#8898a8"/><circle cx="10" cy="10" r="3" fill="#3a5a80"/><path d="M13 16H23L18 22Z" fill="#000"/></svg>
<svg style="position:absolute;left:124.4px;top:238.4px" width="17.3" height="17.3" viewBox="0 0 24 24"><path d="M2 3H22L14 13V22H10V13Z" fill="#5a9ad8" stroke="#3a6a98" stroke-width="0.8"/><rect x="2" y="2" width="20" height="4" fill="#e8c840"/></svg>
<svg style="position:absolute;left:147.4px;top:238.4px" width="17.3" height="17.3" viewBox="0 0 24 24"><text x="2" y="16" font-size="18" font-family="Liberation Serif" fill="#7a3a7a">ε</text><rect x="13" y="15" width="8" height="7" fill="#bbb"/></svg>
<svg style="position:absolute;left:186.4px;top:238.4px" width="17.3" height="17.3" viewBox="0 0 24 24"><rect x="3" y="3" width="10" height="18" fill="#fff" stroke="#b0a060" stroke-dasharray="2 1"/><rect x="5" y="6" width="4" height="4" fill="#e8c840"/><rect x="5" y="14" width="4" height="4" fill="#e8c840"/><path d="M16 3V17M12 13L16 20L20 13" stroke="#4a80c8" stroke-width="2.5" fill="none"/></svg>
<svg style="position:absolute;left:209.4px;top:238.4px" width="17.3" height="17.3" viewBox="0 0 24 24"><rect x="3" y="3" width="10" height="18" fill="#fff" stroke="#b0a060" stroke-dasharray="2 1"/><rect x="5" y="6" width="4" height="4" fill="#e8c840"/><rect x="5" y="14" width="4" height="4" fill="#e8c840"/><path d="M16 21V6M12 10L16 3L20 10" stroke="#4a80c8" stroke-width="2.5" fill="none"/></svg>
<svg style="position:absolute;left:231.0px;top:238.4px" width="17.3" height="17.3" viewBox="0 0 24 24"><rect x="2.5" y="2.5" width="16" height="16" fill="#fff" stroke="#777"/><rect x="13" y="15" width="9" height="6" rx="2" fill="#e05050"/><path d="M15 18H20" stroke="#fff" stroke-width="1.5"/></svg>
<svg style="position:absolute;left:170px;top:244.5px;" width="10" height="5" viewBox="0 0 10 5"><path d="M0 0H10L5 5Z" fill="#000"/></svg>
<div style="left:51px;top:260px;width:252px;height:730px;background:#fff;border:1px solid #adadad;"></div>
<div style="left:77px;top:262px;width:225px;height:23px;background:#d9d9d9;"></div>
<div style="left:52px;top:261px;width:245px;height:700px;overflow:hidden;">
<div style="left:28px;top:4px;width:16px;height:16px;background:#fff;border:1px solid #333;"></div>
<svg style="position:absolute;left:28px;top:4px;" width="16" height="16" viewBox="0 0 16 16"><path d="M3.5 8L6.5 11L12.5 4.5" stroke="#222" stroke-width="1.3" fill="none"/></svg>
<svg style="position:absolute;left:51.4px;top:3.4px" width="17.3" height="17.3" viewBox="0 0 24 24"><circle cx="11" cy="12" r="9" fill="#bcd0e8" stroke="#7aa0c8" stroke-width="1.2"/><path d="M6 19L16 4L18 6L8 20Z" fill="#c86a40" stroke="#8a4a20" stroke-width="0.6"/></svg>
<div class="t" style="left:73.00px;top:5.65px;font-size:14px;line-height:14px;color:#000;font-weight:bold;transform:scaleX(1.0489);transform-origin:0 0;text-decoration:underline;">Funde_WT_2017_2019</div>
<svg style="position:absolute;left:9px;top:31.5px;" width="6" height="9" viewBox="0 0 6 9"><path d="M0.8 0.8L5 4.5L0.8 8.2" stroke="#8a8a8a" stroke-width="1.6" fill="none"/></svg>
<div style="left:28px;top:28px;width:16px;height:16px;background:#fff;border:1px solid #333;"></div>
<svg style="position:absolute;left:28px;top:28px;" width="16" height="16" viewBox="0 0 16 16"><path d="M3.5 8L6.5 11L12.5 4.5" stroke="#222" stroke-width="1.3" fill="none"/></svg>
<svg style="position:absolute;left:51.4px;top:27.4px" width="17.3" height="17.3" viewBox="0 0 24 24"><g fill="#fff" stroke="#808080" stroke-width="0.9"><rect x="1.5" y="8.5" width="10" height="13"/><rect x="4.5" y="5.5" width="11" height="13"/><rect x="7.5" y="2.5" width="12" height="14"/></g><path d="M11 3V13C11 15 15 15 15 13V1" stroke="#5a6a7a" stroke-width="1.3" fill="none"/></svg>
<div class="t" style="left:76.50px;top:29.48px;font-size:14.2px;line-height:14.2px;color:#000;">Gebiet_und_Wege</div>
<svg style="position:absolute;left:9px;top:55.5px;" width="6" height="9" viewBox="0 0 6 9"><path d="M0.8 0.8L5 4.5L0.8 8.2" stroke="#8a8a8a" stroke-width="1.6" fill="none"/></svg>
<div style="left:28px;top:52px;width:16px;height:16px;background:#fff;border:1px solid #333;"></div>
<svg style="position:absolute;left:51.4px;top:51.4px" width="17.3" height="17.3" viewBox="0 0 24 24"><rect x="2" y="3" width="18" height="18" fill="#a8c0e0"/><rect x="2" y="3" width="6" height="6" fill="#1e3a60"/><rect x="14" y="3" width="6" height="6" fill="#1e3a60"/><rect x="8" y="9" width="6" height="6" fill="#1e3a60"/><rect x="2" y="15" width="6" height="6" fill="#1e3a60"/><rect x="14" y="15" width="6" height="6" fill="#dde8f4"/></svg>
<div class="t" style="left:76.50px;top:53.65px;font-size:14px;line-height:14px;color:#7a7a7a;font-weight:bold;font-style:italic;">WMS LGRB-BW BK50: B</div>
<svg style="position:absolute;left:9px;top:79.5px;" width="6" height="9" viewBox="0 0 6 9"><path d="M0.8 0.8L5 4.5L0.8 8.2" stroke="#8a8a8a" stroke-width="1.6" fill="none"/></svg>
<div style="left:28px;top:76px;width:16px;height:16px;background:#fff;border:1px solid #333;"></div>
<svg style="position:absolute;left:51.4px;top:75.4px" width="17.3" height="17.3" viewBox="0 0 24 24"><rect x="2" y="3" width="18" height="18" fill="#a8c0e0"/><rect x="2" y="3" width="6" height="6" fill="#1e3a60"/><rect x="14" y="3" width="6" height="6" fill="#1e3a60"/><rect x="8" y="9" width="6" height="6" fill="#1e3a60"/><rect x="2" y="15" width="6" height="6" fill="#1e3a60"/><rect x="14" y="15" width="6" height="6" fill="#dde8f4"/></svg>
<div class="t" style="left:76.50px;top:77.65px;font-size:14px;line-height:14px;color:#7a7a7a;font-weight:bold;font-style:italic;">WMS LGRB-BW GK50: G</div>
<svg style="position:absolute;left:6.5px;top:105px;" width="10" height="6" viewBox="0 0 10 6"><path d="M0.8 0.8L5 5L9.2 0.8" stroke="#333" stroke-width="1.6" fill="none"/></svg>
<div style="left:28px;top:100px;width:16px;height:16px;background:#fff;border:1px solid #333;"></div>
<svg style="position:absolute;left:28px;top:100px;" width="16" height="16" viewBox="0 0 16 16"><path d="M3.5 8L6.5 11L12.5 4.5" stroke="#222" stroke-width="1.3" fill="none"/></svg>
<svg style="position:absolute;left:51.4px;top:99.4px" width="17.3" height="17.3" viewBox="0 0 24 24"><g fill="#fff" stroke="#808080" stroke-width="0.9"><rect x="1.5" y="8.5" width="10" height="13"/><rect x="4.5" y="5.5" width="11" height="13"/><rect x="7.5" y="2.5" width="12" height="14"/></g><path d="M11 3V13C11 15 15 15 15 13V1" stroke="#5a6a7a" stroke-width="1.3" fill="none"/></svg>
<div class="t" style="left:76.50px;top:101.48px;font-size:14.2px;line-height:14.2px;color:#000;">Pflanzengesellschaften</div>
<svg style="position:absolute;left:34px;top:127.5px;" width="6" height="9" viewBox="0 0 6 9"><path d="M0.8 0.8L5 4.5L0.8 8.2" stroke="#8a8a8a" stroke-width="1.6" fill="none"/></svg>
<div style="left:53px;top:124px;width:16px;height:16px;background:#fff;border:1px solid #333;"></div>
<svg style="position:absolute;left:53px;top:124px;" width="16" height="16" viewBox="0 0 16 16"><path d="M3.5 8L6.5 11L12.5 4.5" stroke="#222" stroke-width="1.3" fill="none"/></svg>
<svg style="position:absolute;left:76.4px;top:123.4px" width="17.3" height="17.3" viewBox="0 0 24 24"><g fill="#fff" stroke="#808080" stroke-width="0.9"><rect x="1.5" y="8.5" width="10" height="13"/><rect x="4.5" y="5.5" width="11" height="13"/><rect x="7.5" y="2.5" width="12" height="14"/></g><path d="M11 3V13C11 15 15 15 15 13V1" stroke="#5a6a7a" stroke-width="1.3" fill="none"/></svg>
<div class="t" style="left:101.50px;top:125.48px;font-size:14.2px;line-height:14.2px;color:#000;">Polytrichum_commune</div>
<svg style="position:absolute;left:34px;top:151.5px;" width="6" height="9" viewBox="0 0 6 9"><path d="M0.8 0.8L5 4.5L0.8 8.2" stroke="#8a8a8a" stroke-width="1.6" fill="none"/></svg>
<div style="left:53px;top:148px;width:16px;height:16px;background:#fff;border:1px solid #333;"></div>
<svg style="position:absolute;left:53px;top:148px;" width="16" height="16" viewBox="0 0 16 16"><path d="M3.5 8L6.5 11L12.5 4.5" stroke="#222" stroke-width="1.3" fill="none"/></svg>
<svg style="position:absolute;left:76.4px;top:147.4px" width="17.3" height="17.3" viewBox="0 0 24 24"><g fill="#fff" stroke="#808080" stroke-width="0.9"><rect x="1.5" y="8.5" width="10" height="13"/><rect x="4.5" y="5.5" width="11" height="13"/><rect x="7.5" y="2.5" width="12" height="14"/></g><path d="M11 3V13C11 15 15 15 15 13V1" stroke="#5a6a7a" stroke-width="1.3" fill="none"/></svg>
<div class="t" style="left:101.50px;top:149.48px;font-size:14.2px;line-height:14.2px;color:#000;">Sphagnetum_magella</div>
<svg style="position:absolute;left:34px;top:175.5px;" width="6" height="9" viewBox="0 0 6 9"><path d="M0.8 0.8L5 4.5L0.8 8.2" stroke="#8a8a8a" stroke-width="1.6" fill="none"/></svg>
<div style="left:53px;top:172px;width:16px;height:16px;background:#fff;border:1px solid #333;"></div>
<svg style="position:absolute;left:53px;top:172px;" width="16" height="16" viewBox="0 0 16 16"><path d="M3.5 8L6.5 11L12.5 4.5" stroke="#222" stroke-width="1.3" fill="none"/></svg>
<svg style="position:absolute;left:76.4px;top:171.4px" width="17.3" height="17.3" viewBox="0 0 24 24"><g fill="#fff" stroke="#808080" stroke-width="0.9"><rect x="1.5" y="8.5" width="10" height="13"/><rect x="4.5" y="5.5" width="11" height="13"/><rect x="7.5" y="2.5" width="12" height="14"/></g><path d="M11 3V13C11 15 15 15 15 13V1" stroke="#5a6a7a" stroke-width="1.3" fill="none"/></svg>
<div class="t" style="left:101.50px;top:173.48px;font-size:14.2px;line-height:14.2px;color:#000;">Eriophorum_vaginatum</div>
<svg style="position:absolute;left:34px;top:199.5px;" width="6" height="9" viewBox="0 0 6 9"><path d="M0.8 0.8L5 4.5L0.8 8.2" stroke="#8a8a8a" stroke-width="1.6" fill="none"/></svg>
<div style="left:53px;top:196px;width:16px;height:16px;background:#fff;border:1px solid #333;"></div>
<svg style="position:absolute;left:53px;top:196px;" width="16" height="16" viewBox="0 0 16 16"><path d="M3.5 8L6.5 11L12.5 4.5" stroke="#222" stroke-width="1.3" fill="none"/></svg>
<svg style="position:absolute;left:76.4px;top:195.4px" width="17.3" height="17.3" viewBox="0 0 24 24"><g fill="#fff" stroke="#808080" stroke-width="0.9"><rect x="1.5" y="8.5" width="10" height="13"/><rect x="4.5" y="5.5" width="11" height="13"/><rect x="7.5" y="2.5" width="12" height="14"/></g><path d="M11 3V13C11 15 15 15 15 13V1" stroke="#5a6a7a" stroke-width="1.3" fill="none"/></svg>
<div class="t" style="left:101.50px;top:197.48px;font-size:14.2px;line-height:14.2px;color:#000;">Eriophorum_vaginatum</div>
<svg style="position:absolute;left:34px;top:223.5px;" width="6" height="9" viewBox="0 0 6 9"><path d="M0.8 0.8L5 4.5L0.8 8.2" stroke="#8a8a8a" stroke-width="1.6" fill="none"/></svg>
<div style="left:53px;top:220px;width:16px;height:16px;background:#fff;border:1px solid #333;"></div>
<svg style="position:absolute;left:53px;top:220px;" width="16" height="16" viewBox="0 0 16 16"><path d="M3.5 8L6.5 11L12.5 4.5" stroke="#222" stroke-width="1.3" fill="none"/></svg>
<svg style="position:absolute;left:76.4px;top:219.4px" width="17.3" height="17.3" viewBox="0 0 24 24"><g fill="#fff" stroke="#808080" stroke-width="0.9"><rect x="1.5" y="8.5" width="10" height="13"/><rect x="4.5" y="5.5" width="11" height="13"/><rect x="7.5" y="2.5" width="12" height="14"/></g><path d="M11 3V13C11 15 15 15 15 13V1" stroke="#5a6a7a" stroke-width="1.3" fill="none"/></svg>
<div class="t" style="left:101.50px;top:221.48px;font-size:14.2px;line-height:14.2px;color:#000;">Eriophorum_vaginatum</div>
<svg style="position:absolute;left:34px;top:247.5px;" width="6" height="9" viewBox="0 0 6 9"><path d="M0.8 0.8L5 4.5L0.8 8.2" stroke="#8a8a8a" stroke-width="1.6" fill="none"/></svg>
<div style="left:53px;top:244px;width:16px;height:16px;background:#fff;border:1px solid #333;"></div>
<svg style="position:absolute;left:53px;top:244px;" width="16" height="16" viewBox="0 0 16 16"><path d="M3.5 8L6.5 11L12.5 4.5" stroke="#222" stroke-width="1.3" fill="none"/></svg>
<svg style="position:absolute;left:76.4px;top:243.4px" width="17.3" height="17.3" viewBox="0 0 24 24"><g fill="#fff" stroke="#808080" stroke-width="0.9"><rect x="1.5" y="8.5" width="10" height="13"/><rect x="4.5" y="5.5" width="11" height="13"/><rect x="7.5" y="2.5" width="12" height="14"/></g><path d="M11 3V13C11 15 15 15 15 13V1" stroke="#5a6a7a" stroke-width="1.3" fill="none"/></svg>
<div class="t" style="left:101.50px;top:245.48px;font-size:14.2px;line-height:14.2px;color:#000;">Vaccinio_Abietetum</div>
<svg style="position:absolute;left:34px;top:271.5px;" width="6" height="9" viewBox="0 0 6 9"><path d="M0.8 0.8L5 4.5L0.8 8.2" stroke="#8a8a8a" stroke-width="1.6" fill="none"/></svg>
<div style="left:53px;top:268px;width:16px;height:16px;background:#fff;border:1px solid #333;"></div>
<svg style="position:absolute;left:53px;top:268px;" width="16" height="16" viewBox="0 0 16 16"><path d="M3.5 8L6.5 11L12.5 4.5" stroke="#222" stroke-width="1.3" fill="none"/></svg>
<svg style="position:absolute;left:76.4px;top:267.4px" width="17.3" height="17.3" viewBox="0 0 24 24"><g fill="#fff" stroke="#808080" stroke-width="0.9"><rect x="1.5" y="8.5" width="10" height="13"/><rect x="4.5" y="5.5" width="11" height="13"/><rect x="7.5" y="2.5" width="12" height="14"/></g><path d="M11 3V13C11 15 15 15 15 13V1" stroke="#5a6a7a" stroke-width="1.3" fill="none"/></svg>
<div class="t" style="left:101.50px;top:269.48px;font-size:14.2px;line-height:14.2px;color:#000;">Vaccinio_uliginosi_P_sylv</div>
<svg style="position:absolute;left:34px;top:295.5px;" width="6" height="9" viewBox="0 0 6 9"><path d="M0.8 0.8L5 4.5L0.8 8.2" stroke="#8a8a8a" stroke-width="1.6" fill="none"/></svg>
<div style="left:53px;top:292px;width:16px;height:16px;background:#fff;border:1px solid #333;"></div>
<svg style="position:absolute;left:53px;top:292px;" width="16" height="16" viewBox="0 0 16 16"><path d="M3.5 8L6.5 11L12.5 4.5" stroke="#222" stroke-width="1.3" fill="none"/></svg>
<svg style="position:absolute;left:76.4px;top:291.4px" width="17.3" height="17.3" viewBox="0 0 24 24"><g fill="#fff" stroke="#808080" stroke-width="0.9"><rect x="1.5" y="8.5" width="10" height="13"/><rect x="4.5" y="5.5" width="11" height="13"/><rect x="7.5" y="2.5" width="12" height="14"/></g><path d="M11 3V13C11 15 15 15 15 13V1" stroke="#5a6a7a" stroke-width="1.3" fill="none"/></svg>
<div class="t" style="left:101.50px;top:293.48px;font-size:14.2px;line-height:14.2px;color:#000;">Vaccinio_uliginosi_Pinetum</div>
<svg style="position:absolute;left:34px;top:319.5px;" width="6" height="9" viewBox="0 0 6 9"><path d="M0.8 0.8L5 4.5L0.8 8.2" stroke="#8a8a8a" stroke-width="1.6" fill="none"/></svg>
<div style="left:53px;top:316px;width:16px;height:16px;background:#fff;border:1px solid #333;"></div>
<svg style="position:absolute;left:53px;top:316px;" width="16" height="16" viewBox="0 0 16 16"><path d="M3.5 8L6.5 11L12.5 4.5" stroke="#222" stroke-width="1.3" fill="none"/></svg>
<svg style="position:absolute;left:76.4px;top:315.4px" width="17.3" height="17.3" viewBox="0 0 24 24"><g fill="#fff" stroke="#808080" stroke-width="0.9"><rect x="1.5" y="8.5" width="10" height="13"/><rect x="4.5" y="5.5" width="11" height="13"/><rect x="7.5" y="2.5" width="12" height="14"/></g><path d="M11 3V13C11 15 15 15 15 13V1" stroke="#5a6a7a" stroke-width="1.3" fill="none"/></svg>
<div class="t" style="left:101.50px;top:317.48px;font-size:14.2px;line-height:14.2px;color:#000;">Vaccinio_uliginosi_Pinetum</div>
<svg style="position:absolute;left:34px;top:343.5px;" width="6" height="9" viewBox="0 0 6 9"><path d="M0.8 0.8L5 4.5L0.8 8.2" stroke="#8a8a8a" stroke-width="1.6" fill="none"/></svg>
<div style="left:53px;top:340px;width:16px;height:16px;background:#fff;border:1px solid #333;"></div>
<svg style="position:absolute;left:53px;top:340px;" width="16" height="16" viewBox="0 0 16 16"><path d="M3.5 8L6.5 11L12.5 4.5" stroke="#222" stroke-width="1.3" fill="none"/></svg>
<svg style="position:absolute;left:76.4px;top:339.4px" width="17.3" height="17.3" viewBox="0 0 24 24"><g fill="#fff" stroke="#808080" stroke-width="0.9"><rect x="1.5" y="8.5" width="10" height="13"/><rect x="4.5" y="5.5" width="11" height="13"/><rect x="7.5" y="2.5" width="12" height="14"/></g><path d="M11 3V13C11 15 15 15 15 13V1" stroke="#5a6a7a" stroke-width="1.3" fill="none"/></svg>
<div class="t" style="left:101.50px;top:341.48px;font-size:14.2px;line-height:14.2px;color:#000;">Vaccinio_uliginosi_Pinetum</div>
<svg style="position:absolute;left:34px;top:367.5px;" width="6" height="9" viewBox="0 0 6 9"><path d="M0.8 0.8L5 4.5L0.8 8.2" stroke="#8a8a8a" stroke-width="1.6" fill="none"/></svg>
<div style="left:53px;top:364px;width:16px;height:16px;background:#fff;border:1px solid #333;"></div>
<svg style="position:absolute;left:53px;top:364px;" width="16" height="16" viewBox="0 0 16 16"><path d="M3.5 8L6.5 11L12.5 4.5" stroke="#222" stroke-width="1.3" fill="none"/></svg>
<svg style="position:absolute;left:76.4px;top:363.4px" width="17.3" height="17.3" viewBox="0 0 24 24"><g fill="#fff" stroke="#808080" stroke-width="0.9"><rect x="1.5" y="8.5" width="10" height="13"/><rect x="4.5" y="5.5" width="11" height="13"/><rect x="7.5" y="2.5" width="12" height="14"/></g><path d="M11 3V13C11 15 15 15 15 13V1" stroke="#5a6a7a" stroke-width="1.3" fill="none"/></svg>
<div class="t" style="left:101.50px;top:365.48px;font-size:14.2px;line-height:14.2px;color:#000;">Vaccinio_uliginosi_Pinetum</div>
<svg style="position:absolute;left:34px;top:391.5px;" width="6" height="9" viewBox="0 0 6 9"><path d="M0.8 0.8L5 4.5L0.8 8.2" stroke="#8a8a8a" stroke-width="1.6" fill="none"/></svg>
<div style="left:53px;top:388px;width:16px;height:16px;background:#fff;border:1px solid #333;"></div>
<svg style="position:absolute;left:53px;top:388px;" width="16" height="16" viewBox="0 0 16 16"><path d="M3.5 8L6.5 11L12.5 4.5" stroke="#222" stroke-width="1.3" fill="none"/></svg>
<svg style="position:absolute;left:76.4px;top:387.4px" width="17.3" height="17.3" viewBox="0 0 24 24"><g fill="#fff" stroke="#808080" stroke-width="0.9"><rect x="1.5" y="8.5" width="10" height="13"/><rect x="4.5" y="5.5" width="11" height="13"/><rect x="7.5" y="2.5" width="12" height="14"/></g><path d="M11 3V13C11 15 15 15 15 13V1" stroke="#5a6a7a" stroke-width="1.3" fill="none"/></svg>
<div class="t" style="left:101.50px;top:389.48px;font-size:14.2px;line-height:14.2px;color:#000;">Vaccinio_uliginosi_Pinetum</div>
<svg style="position:absolute;left:9px;top:415.5px;" width="6" height="9" viewBox="0 0 6 9"><path d="M0.8 0.8L5 4.5L0.8 8.2" stroke="#8a8a8a" stroke-width="1.6" fill="none"/></svg>
<div style="left:28px;top:412px;width:16px;height:16px;background:#fff;border:1px solid #333;"></div>
<svg style="position:absolute;left:28px;top:412px;" width="16" height="16" viewBox="0 0 16 16"><path d="M3.5 8L6.5 11L12.5 4.5" stroke="#222" stroke-width="1.3" fill="none"/></svg>
<svg style="position:absolute;left:51.4px;top:411.4px" width="17.3" height="17.3" viewBox="0 0 24 24"><g fill="#fff" stroke="#808080" stroke-width="0.9"><rect x="1.5" y="8.5" width="10" height="13"/><rect x="4.5" y="5.5" width="11" height="13"/><rect x="7.5" y="2.5" width="12" height="14"/></g><path d="M11 3V13C11 15 15 15 15 13V1" stroke="#5a6a7a" stroke-width="1.3" fill="none"/></svg>
<div class="t" style="left:76.50px;top:413.48px;font-size:14.2px;line-height:14.2px;color:#000;">Biotope</div>
<svg style="position:absolute;left:6.5px;top:441px;" width="10" height="6" viewBox="0 0 10 6"><path d="M0.8 0.8L5 5L9.2 0.8" stroke="#333" stroke-width="1.6" fill="none"/></svg>
<div style="left:28px;top:436px;width:16px;height:16px;background:#fff;border:1px solid #333;"></div>
<svg style="position:absolute;left:28px;top:436px;" width="16" height="16" viewBox="0 0 16 16"><path d="M3.5 8L6.5 11L12.5 4.5" stroke="#222" stroke-width="1.3" fill="none"/></svg>
<svg style="position:absolute;left:51.4px;top:435.4px" width="17.3" height="17.3" viewBox="0 0 24 24"><rect x="2" y="3" width="18" height="18" fill="#a8c0e0"/><rect x="2" y="3" width="6" height="6" fill="#1e3a60"/><rect x="14" y="3" width="6" height="6" fill="#1e3a60"/><rect x="8" y="9" width="6" height="6" fill="#1e3a60"/><rect x="2" y="15" width="6" height="6" fill="#1e3a60"/><rect x="14" y="15" width="6" height="6" fill="#dde8f4"/></svg>
<div class="t" style="left:76.50px;top:437.65px;font-size:14px;line-height:14px;color:#000;font-weight:bold;">OpenStreetMap Standard</div>
</div>
<div style="left:297px;top:286px;width:5px;height:405px;background:#e8e8e8;opacity:0.7;"></div>
<div style="left:297px;top:693px;width:5px;height:24px;background:#e8e8e8;opacity:0.7;"></div>
<div style="left:52px;top:968px;width:250px;height:21px;background:#f0f0f0;"></div>
<div style="left:73px;top:970px;width:102px;height:17px;background:#cdcdcd;"></div>
<svg style="position:absolute;left:58px;top:973px;" width="7" height="11" viewBox="0 0 7 11"><path d="M6 0.5L1 5.5L6 10.5" stroke="#606060" fill="none" stroke-width="1.6"/></svg>
<svg style="position:absolute;left:287px;top:973px;" width="7" height="11" viewBox="0 0 7 11"><path d="M1 0.5L6 5.5L1 10.5" stroke="#606060" fill="none" stroke-width="1.6"/></svg>
<div style="left:359.5px;top:171px;width:3px;height:53px;background:linear-gradient(90deg,rgba(40,40,40,0.75),rgba(40,40,40,0.05));"></div>
<div style="left:49px;top:222px;width:313px;height:3px;background:linear-gradient(180deg,rgba(40,40,40,0.75),rgba(40,40,40,0.05));"></div>
<div style="left:44.5px;top:165px;width:315px;height:57px;background:#f2f2f2;border:1px solid #cfcfcf;"></div>
<div style="left:47px;top:167.2px;width:308px;height:25.2px;background:#91c9f7;"></div>
<div style="left:47px;top:167.2px;width:24px;height:25.2px;background:#6cb6f2;"></div>
<svg style="position:absolute;left:49px;top:169px" width="22" height="22" viewBox="0 0 22 22"><circle cx="9" cy="4.2" r="2" fill="#6fa0a0" stroke="#3f7070" stroke-width="0.5"/><circle cx="16.5" cy="6" r="2" fill="#6fa0a0" stroke="#3f7070" stroke-width="0.5"/><circle cx="3" cy="11" r="2" fill="#6fc06f" stroke="#3f8a3f" stroke-width="0.5"/><rect x="11" y="12" width="9" height="9" rx="1" fill="#2e4a5e"/><path d="M12.5 16.5H17M15 14L17.5 16.5L15 19" stroke="#fff" stroke-width="1.8" fill="none"/></svg>
<svg style="position:absolute;left:49px;top:195px" width="22" height="22" viewBox="0 0 22 22"><circle cx="10.5" cy="5" r="2.8" fill="#a8b8a8" stroke="#607060" stroke-width="0.7"/><circle cx="4" cy="10" r="2.8" fill="#6a9a6a" stroke="#3f6a3f" stroke-width="0.7"/><rect x="11" y="12" width="9" height="9" rx="1" fill="#3c5060"/><path d="M12.5 16.5H17M15 14L17.5 16.5L15 19" stroke="#fff" stroke-width="1.8" fill="none"/></svg>
<div class="t" style="left:81.50px;top:173.06px;font-size:14.7px;line-height:14.7px;color:#0a1a30;transform:scaleX(0.9973);transform-origin:0 0;">Objekt(e) verschieben</div>
<div class="t" style="left:81.50px;top:199.16px;font-size:14.7px;line-height:14.7px;color:#000;transform:scaleX(1.0092);transform-origin:0 0;">Objekt(e) kopieren und verschieben</div>
<div style="left:66px;top:119px;width:28.75px;height:50.4px;border:4px solid #ff0000;"></div>
<svg style="position:absolute;left:255px;top:174px;" width="130" height="16" viewBox="0 0 130 16"><path d="M26 8H128" stroke="#e8141c" stroke-width="3.2" stroke-linecap="round"/><path d="M2 8L28 1.5L23 8L28 14.5Z" fill="#e8141c"/></svg>
<div style="left:0px;top:990px;width:1359px;height:1px;background:#dadada;"></div>
<div style="left:5px;top:996px;width:279px;height:22px;background:#fff;border:1px solid #7a7a7a;"></div>
<div class="t" style="left:33.30px;top:1000.15px;font-size:14px;line-height:14px;color:#6d6d6d;transform:scaleX(0.9215);transform-origin:0 0;">Zu suchender Typ (Strg+K)</div>
<div style="left:0px;top:1022px;width:1363px;height:7px;background:#e8e8e8;"></div>
<div style="left:0px;top:1022px;width:27px;height:7px;background:#0a84d0;"></div>
<div style="left:0px;top:1029px;width:1920px;height:4px;background:#1e2a36;"></div>
<svg style="position:absolute;left:13px;top:1000px;" width="16" height="16" viewBox="0 0 16 16"><circle cx="6.5" cy="6.5" r="5" fill="none" stroke="#888" stroke-width="1.3"/><path d="M10 10L14.5 14.5" stroke="#888" stroke-width="1.6"/></svg>
<div class="t" style="left:330.00px;top:1001.33px;font-size:12.6px;line-height:12.6px;color:#000;transform:scaleX(0.9846);transform-origin:0 0;">Koordinate</div>
<div style="left:394.5px;top:996px;width:146px;height:21.5px;background:#fff;border:1px solid #7a7a7a;"></div>
<div class="t" style="left:407.50px;top:1001.33px;font-size:12.6px;line-height:12.6px;color:#000;transform:scaleX(1.0121);transform-origin:0 0;">473652.2,5397385.0</div>
<svg style="position:absolute;left:543.4px;top:997.4px" width="19.2" height="19.2" viewBox="0 0 24 24"><path d="M4 6C4 1 14 1 14 6V14C14 19 4 19 4 14Z" fill="#fff" stroke="#111" stroke-width="1.6"/><path d="M4 8H14M9 2V8" stroke="#111" stroke-width="1.4"/><circle cx="13" cy="17" r="5" fill="#fff" stroke="#111" stroke-width="1.5"/><circle cx="13" cy="17" r="1.5" fill="#111"/><path d="M17 3L20 1M19 6L22 5" stroke="#111"/></svg>
<div class="t" style="left:577.50px;top:1001.33px;font-size:12.6px;line-height:12.6px;color:#000;transform:scaleX(0.9589);transform-origin:0 0;">Maßstab</div>
<div style="left:628px;top:996px;width:91px;height:21.5px;background:#fff;border:1px solid #7a7a7a;"></div>
<div class="t" style="left:633.75px;top:1001.33px;font-size:12.6px;line-height:12.6px;color:#000;transform:scaleX(1.0150);transform-origin:0 0;">1:675</div>
<svg style="position:absolute;left:700px;top:1003px;" width="11" height="7" viewBox="0 0 11 7"><path d="M0.5 0.5L5.5 5.5L10.5 0.5" stroke="#333" fill="none" stroke-width="1"/></svg>
<svg style="position:absolute;left:729.0px;top:998.0px" width="18.0" height="18.0" viewBox="0 0 24 24"><path d="M7 11V7C7 3 17 3 17 7V11" fill="none" stroke="#666" stroke-width="2.5"/><rect x="4" y="11" width="16" height="12" rx="2" fill="#666"/></svg>
<div class="t" style="left:754.80px;top:1001.33px;font-size:12.6px;line-height:12.6px;color:#000;transform:scaleX(1.0086);transform-origin:0 0;">Vergrößerung</div>
<div style="left:836px;top:996px;width:87px;height:21.5px;background:#fff;border:1px solid #7a7a7a;"></div>
<div class="t" style="left:839.40px;top:1001.33px;font-size:12.6px;line-height:12.6px;color:#000;transform:scaleX(0.9930);transform-origin:0 0;">100%</div>
<div style="left:906px;top:997px;width:16px;height:19.5px;background:#f0f0f0;border-left:1px solid #ccc;"></div>
<svg style="position:absolute;left:909px;top:999px;" width="10" height="16" viewBox="0 0 10 16"><path d="M1 6L5 2L9 6Z M1 10L5 14L9 10Z" fill="#222"/></svg>
<div class="t" style="left:932.00px;top:1001.33px;font-size:12.6px;line-height:12.6px;color:#000;transform:scaleX(0.9828);transform-origin:0 0;">Drehung</div>
<div style="left:989px;top:996px;width:85px;height:21.5px;background:#fff;border:1px solid #7a7a7a;"></div>
<div class="t" style="left:992.00px;top:1001.33px;font-size:12.6px;line-height:12.6px;color:#000;transform:scaleX(1.0748);transform-origin:0 0;">0,0 °</div>
<div style="left:1057px;top:997px;width:16px;height:19.5px;background:#f0f0f0;border-left:1px solid #ccc;"></div>
<svg style="position:absolute;left:1060px;top:999px;" width="10" height="16" viewBox="0 0 10 16"><path d="M1 6L5 2L9 6Z M1 10L5 14L9 10Z" fill="#222"/></svg>
<div style="left:1080px;top:999px;width:16px;height:16px;background:#fff;border:1px solid #333;"></div>
<svg style="position:absolute;left:1080px;top:999px;" width="16" height="16" viewBox="0 0 16 16"><path d="M3.5 8L6.5 11L12.5 4.5" stroke="#222" stroke-width="1.3" fill="none"/></svg>
<div class="t" style="left:1102.00px;top:1001.33px;font-size:12.6px;line-height:12.6px;color:#000;transform:scaleX(0.9724);transform-origin:0 0;">Zeichnen</div>
<svg style="position:absolute;left:1169.6px;top:997.6px" width="18.7" height="18.7" viewBox="0 0 24 24"><circle cx="12" cy="12" r="9.5" fill="none" stroke="#555" stroke-width="1.3"/><ellipse cx="12" cy="12" rx="4" ry="9.5" fill="none" stroke="#555" stroke-width="1.1"/><path d="M2.5 9H21.5M2.5 15H21.5M12 2.5V21.5" stroke="#555" stroke-width="1.1"/></svg>
<div class="t" style="left:1194.40px;top:1001.33px;font-size:12.6px;line-height:12.6px;color:#000;transform:scaleX(0.9463);transform-origin:0 0;">EPSG:25832</div>
<svg style="position:absolute;left:1281.2px;top:996.2px" width="21.6" height="21.6" viewBox="0 0 24 24"><ellipse cx="12" cy="10.5" rx="10.5" ry="8.5" fill="#555"/><path d="M14 17L20 23L17 16Z" fill="#555"/><circle cx="7" cy="10.5" r="1.6" fill="#fff"/><circle cx="12" cy="10.5" r="1.6" fill="#fff"/><circle cx="17" cy="10.5" r="1.6" fill="#fff"/></svg>
<svg style="position:absolute;left:1314.2px;top:996.2px" width="21.6" height="21.6" viewBox="0 0 24 24"><path d="M3 8H8C8 4 13 4 13 8H18V12C22 12 22 17 18 17V21H3Z" fill="#ddd" stroke="#666" stroke-width="1.2"/><path d="M14 6C17 2 22 4 21 8" stroke="#666" fill="none" stroke-width="1.2"/></svg>
<div style="left:1353px;top:1009px;width:2px;height:2px;background:#b8b8b8;"></div>
<div style="left:1349px;top:1013px;width:2px;height:2px;background:#b8b8b8;"></div>
<div style="left:1353px;top:1013px;width:2px;height:2px;background:#b8b8b8;"></div>
<div style="left:1345px;top:1017px;width:2px;height:2px;background:#b8b8b8;"></div>
<div style="left:1349px;top:1017px;width:2px;height:2px;background:#b8b8b8;"></div>
<div style="left:1353px;top:1017px;width:2px;height:2px;background:#b8b8b8;"></div>
<div style="left:1px;top:1022px;width:1358px;height:1px;background:#707070;"></div>
<div style="left:1363px;top:4px;width:557px;height:1029px;background:#f0f0f0;"></div>
<div style="left:1363px;top:4px;width:557px;height:37px;background:#fff;"></div>
<div style="left:1363px;top:0px;width:557px;height:4px;background:#1b1d2e;"></div>
<div class="t" style="left:1401.00px;top:15.30px;font-size:15px;line-height:15px;color:#959595;transform:scaleX(0.9514);transform-origin:0 0;">Funde_WT_2017_2019 :: Objekte gesamt:263, gefiltert: 263, gewähl...</div>
<div style="left:1871px;top:21px;width:12px;height:1px;background:#555"></div>
<svg style="position:absolute;left:1370.6px;top:11.6px" width="22.8" height="22.8" viewBox="0 0 24 24"><circle cx="10.5" cy="10.5" r="7.6" fill="none" stroke="#7ab030" stroke-width="4.2"/><path d="M11 11L20 20" stroke="#5a9a20" stroke-width="4.5"/><path d="M9 9L13 13" stroke="#f0b020" stroke-width="3"/><circle cx="9.5" cy="9.5" r="1.8" fill="#e86030"/></svg>
<div style="left:1363px;top:41px;width:557px;height:26px;background:#f0f0f0;"></div>
<div style="left:1365px;top:43px;width:23px;height:23px;background:#cce4f7;border:1px solid #99c9ef;"></div>
<svg style="position:absolute;left:1367.8px;top:45.8px" width="16.3" height="16.3" viewBox="0 0 24 24"><path d="M14.5 1L19.5 4L9.5 19L4.5 16Z" fill="#f0d040" stroke="#8a7020" stroke-width="0.8"/><path d="M4.5 16L9.5 19L5 23Z" fill="#ddc89a" stroke="#8a7020" stroke-width="0.5"/><path d="M5 23L5.6 20.5" stroke="#444" stroke-width="1.2"/></svg>
<svg style="position:absolute;left:1390.8px;top:45.8px" width="16.3" height="16.3" viewBox="0 0 24 24"><rect x="1.5" y="3.5" width="20" height="5" fill="#f0dc3a" stroke="#c0a820"/><rect x="1.5" y="10.5" width="20" height="5" fill="#f0dc3a" stroke="#c0a820"/><rect x="1.5" y="17.5" width="20" height="5" fill="#f0dc3a" stroke="#c0a820"/><g transform="translate(2,0)"><path d="M14.5 1L19.5 4L9.5 19L4.5 16Z" fill="#e07a30" stroke="#8a7020" stroke-width="0.8"/><path d="M4.5 16L9.5 19L5 23Z" fill="#ddc89a" stroke="#8a7020" stroke-width="0.5"/><path d="M5 23L5.6 20.5" stroke="#444" stroke-width="1.2"/></g></svg>
<svg style="position:absolute;left:1413.8px;top:45.8px" width="16.3" height="16.3" viewBox="0 0 24 24"><rect x="2" y="2" width="18" height="18" rx="2" fill="#6a8fa8" stroke="#4a6a80"/><rect x="5" y="3" width="12" height="7" fill="#fff"/><rect x="6" y="13" width="9" height="6" fill="#eee"/><g transform="translate(6,5) scale(0.75)"><path d="M14.5 1L19.5 4L9.5 19L4.5 16Z" fill="#e07a30" stroke="#8a7020" stroke-width="0.8"/><path d="M4.5 16L9.5 19L5 23Z" fill="#ddc89a" stroke="#8a7020" stroke-width="0.5"/><path d="M5 23L5.6 20.5" stroke="#444" stroke-width="1.2"/></g></svg>
<svg style="position:absolute;left:1436.8px;top:45.8px" width="16.3" height="16.3" viewBox="0 0 24 24"><g opacity="0.3"><path d="M15 3L22 10L15 16V12C10 12 7 14 7 18C7 20 8 21 9 22C5 21 3 18 3 15C3 10 8 8 15 8Z" fill="#999"/></g></svg>
<svg style="position:absolute;left:1466.8px;top:45.8px" width="16.3" height="16.3" viewBox="0 0 24 24"><rect x="2" y="3" width="17" height="15" fill="#fff" stroke="#5a88c0"/><rect x="2" y="3" width="17" height="4" fill="#a8c4e8"/><path d="M2 11H19M8 7V18M13 7V18" stroke="#5a88c0" stroke-width="0.8"/><rect x="13" y="13" width="10" height="10" rx="1.2" fill="#d2c22a" stroke="#a89a10" stroke-width="0.7"/><path d="M18.0 14.8V21.2M14.8 18.0H21.2M15.8 15.8L20.2 20.2M20.2 15.8L15.8 20.2" stroke="#fff" stroke-width="1.2"/><circle cx="18.0" cy="18.0" r="1.1" fill="#d2c22a"/></svg>
<svg style="position:absolute;left:1488.8px;top:45.8px" width="16.3" height="16.3" viewBox="0 0 24 24"><rect x="1.5" y="2.5" width="12" height="14" fill="#f0dc3a" stroke="#c0a820"/><path d="M4 6H20V22H4Z" fill="#d03030" stroke="#a02020"/><rect x="3" y="4" width="18" height="3" fill="#d03030"/><path d="M8 9V20M12 9V20M16 9V20" stroke="#f0a0a0" stroke-width="1.5"/></svg>
<svg style="position:absolute;left:1512.8px;top:45.8px" width="16.3" height="16.3" viewBox="0 0 24 24"><path d="M2 8L16 14M2 14L16 8" stroke="#888" stroke-width="1.2"/><circle cx="18.5" cy="8" r="3" fill="none" stroke="#c04040" stroke-width="1.6"/><circle cx="18.5" cy="16" r="3" fill="none" stroke="#c04040" stroke-width="1.6"/></svg>
<svg style="position:absolute;left:1535.8px;top:45.8px" width="16.3" height="16.3" viewBox="0 0 24 24"><path d="M8.5 1.5H16L20.5 6V16.5H8.5Z" fill="#fff" stroke="#777"/><path d="M3.5 6.5H11L15.5 11V22.5H3.5Z" fill="#fff" stroke="#555"/><path d="M5.5 13H13M5.5 16H13M5.5 19H13" stroke="#666" stroke-width="0.8"/></svg>
<svg style="position:absolute;left:1558.8px;top:45.8px" width="16.3" height="16.3" viewBox="0 0 24 24"><rect x="2.5" y="2.5" width="17" height="20" fill="#e8dcb0" stroke="#b0a070"/><rect x="7" y="1" width="8" height="4" fill="#aaa"/><path d="M5.5 7.5H14L17.5 11V20.5H5.5Z" fill="#fff" stroke="#666"/><path d="M7 13H15M7 16H15M7 19H15" stroke="#777" stroke-width="0.8"/></svg>
<svg style="position:absolute;left:1588.8px;top:45.8px" width="16.3" height="16.3" viewBox="0 0 24 24"><rect x="9" y="9" width="13" height="13" fill="#f0dc3a" stroke="#c0a820"/><text x="1" y="15" font-size="17" font-family="Liberation Serif" fill="#6a2a8a">ε</text></svg>
<svg style="position:absolute;left:1611.8px;top:45.8px" width="16.3" height="16.3" viewBox="0 0 24 24"><rect x="3" y="3" width="18" height="5" rx="2" fill="#f0dc3a" stroke="#c0a820"/><rect x="3" y="10" width="18" height="5" rx="2" fill="#f0dc3a" stroke="#c0a820"/><rect x="3" y="17" width="18" height="5" rx="2" fill="#f0dc3a" stroke="#c0a820"/></svg>
<svg style="position:absolute;left:1634.8px;top:45.8px" width="16.3" height="16.3" viewBox="0 0 24 24"><rect x="2.5" y="2.5" width="19" height="19" fill="#eee" stroke="#999"/><path d="M2.5 2.5V21.5H21.5Z" fill="#f0dc3a" stroke="#c0a820"/></svg>
<svg style="position:absolute;left:1658.3px;top:45.8px" width="16.3" height="16.3" viewBox="0 0 24 24"><rect x="2" y="2" width="14" height="14" fill="#f0dc3a" stroke="#c0a820"/><rect x="13" y="13" width="10" height="10" rx="2" fill="#e05555"/><circle cx="18" cy="18" r="3" fill="none" stroke="#fff" stroke-width="1.2"/></svg>
<svg style="position:absolute;left:1680.8px;top:45.8px" width="16.3" height="16.3" viewBox="0 0 24 24"><path d="M2 3H22L14 13V22H10V13Z" fill="#5a9ad8" stroke="#3a6a98" stroke-width="0.8"/><rect x="2" y="2" width="20" height="4" fill="#e8c840"/></svg>
<svg style="position:absolute;left:1703.8px;top:45.8px" width="16.3" height="16.3" viewBox="0 0 24 24"><rect x="2.5" y="2.5" width="19" height="19" fill="#fff" stroke="#6a9ad0"/><rect x="2.5" y="2.5" width="19" height="4" fill="#a8c4e8"/><path d="M5 10H10M12 10H19M5 14H10M12 14H19M5 18H10M12 18H19" stroke="#6a9ad0" stroke-width="1.2"/></svg>
<svg style="position:absolute;left:1726.8px;top:45.8px" width="16.3" height="16.3" viewBox="0 0 24 24"><rect x="4" y="4" width="16" height="16" fill="#f0dc3a" stroke="#c0a820"/><path d="M12 1L15 5H9Z M12 23L15 19H9Z M1 12L5 9V15Z M23 12L19 9V15Z" fill="#5a88c0"/><path d="M12 4V20M4 12H20" stroke="#5a88c0" stroke-width="2.5"/></svg>
<svg style="position:absolute;left:1749.8px;top:45.8px" width="16.3" height="16.3" viewBox="0 0 24 24"><rect x="4" y="3" width="8" height="14" fill="#f8f8f8" stroke="#999"/><path d="M3 22L9 16" stroke="#d8c040" stroke-width="3.5"/><path d="M3 22L9 16" stroke="#a09030" stroke-width="0.6"/><circle cx="14.5" cy="9.5" r="7.5" fill="#f4f4f4" stroke="#555" stroke-width="1.2"/></svg>
<svg style="position:absolute;left:1780.4px;top:45.8px" width="16.3" height="16.3" viewBox="0 0 24 24"><path d="M2.5 2.5H17L22 7.5V19.5H2.5Z" fill="#fff" stroke="#777"/><rect x="2.5" y="2.5" width="7" height="17" fill="#f0d850" stroke="#c0a820"/><rect x="12" y="12" width="11" height="11" rx="1.2" fill="#d2c22a" stroke="#a89a10" stroke-width="0.7"/><path d="M17.5 13.8V21.2M13.8 17.5H21.2M14.8 14.8L20.2 20.2M20.2 14.8L14.8 20.2" stroke="#fff" stroke-width="1.2"/><circle cx="17.5" cy="17.5" r="1.1" fill="#d2c22a"/></svg>
<svg style="position:absolute;left:1802.8px;top:45.8px" width="16.3" height="16.3" viewBox="0 0 24 24"><path d="M3 2.5H19.5V21.5H3Z" fill="#e8e8e8" stroke="#999"/><path d="M3 2.5V21.5" stroke="#ccc" stroke-width="2"/><rect x="12" y="12" width="11" height="11" rx="1.2" fill="#d2c22a" stroke="#a89a10" stroke-width="0.7"/><path d="M17.5 13.8V21.2M13.8 17.5H21.2M14.8 14.8L20.2 20.2M20.2 14.8L14.8 20.2" stroke="#fff" stroke-width="1.2"/><circle cx="17.5" cy="17.5" r="1.1" fill="#d2c22a"/></svg>
<svg style="position:absolute;left:1825.8px;top:45.8px" width="16.3" height="16.3" viewBox="0 0 24 24"><path d="M2 2V21H23" stroke="#555" stroke-width="1.5" fill="none"/><path d="M2 6H22M2 11H22M2 16H22" stroke="#666" stroke-width="0.8"/><g fill="none" stroke-width="1.2"><path d="M8 4L10 6L8 8L6 6Z M16 4L18 6L16 8L14 6Z" stroke="#d05060"/><path d="M6 9L8 11L6 13L4 11Z M12 9L14 11L12 13L10 11Z" stroke="#60a870"/><path d="M6 14L8 16L6 18L4 16Z M11 14L13 16L11 18L9 16Z M16 14L18 16L16 18L14 16Z" stroke="#5a88c0"/></g></svg>
<svg style="position:absolute;left:1855.8px;top:45.8px" width="16.3" height="16.3" viewBox="0 0 24 24"><rect x="2" y="3" width="20" height="5" fill="#eee" stroke="#888" stroke-width="0.8"/><rect x="2" y="10" width="20" height="5" fill="#7ac07a" stroke="#4a8a4a" stroke-width="0.8"/><rect x="2" y="17" width="20" height="5" fill="#eee" stroke="#888" stroke-width="0.8"/><path d="M5 19.5H10" stroke="#d03030" stroke-width="1.5"/><path d="M8 5.5H16" stroke="#555" stroke-width="1.2"/></svg>
<svg style="position:absolute;left:1885.8px;top:45.8px" width="16.3" height="16.3" viewBox="0 0 24 24"><rect x="2.5" y="2.5" width="19" height="19" fill="#fff" stroke="#6a9ad0"/><rect x="2.5" y="2.5" width="19" height="4" fill="#a8c4e8"/><path d="M5 10H10M12 10H19M5 14H10M12 14H19M5 18H10M12 18H19" stroke="#6a9ad0" stroke-width="1.2"/></svg>
<svg style="position:absolute;left:1906.8px;top:45.8px" width="16.3" height="16.3" viewBox="0 0 24 24"><circle cx="9.5" cy="9.5" r="8" fill="#dde4ee" stroke="#8aa" stroke-dasharray="2 1.2"/><circle cx="9.5" cy="9.5" r="5" fill="#6a9ad0" stroke="#4a72a8"/><path d="M8 7L12 9.5L8 12Z" fill="#fff"/><path d="M13 12L13 22L16 19L19 23L21 22L18 18L22 17Z" fill="#fff" stroke="#333" stroke-width="0.8"/></svg>
<div style="left:1460.6px;top:45px;width:1px;height:19px;background:#d4d4d4;"></div>
<div style="left:1582px;top:45px;width:1px;height:19px;background:#d4d4d4;"></div>
<div style="left:1773px;top:45px;width:1px;height:19px;background:#d4d4d4;"></div>
<div style="left:1849px;top:45px;width:1px;height:19px;background:#d4d4d4;"></div>
<div style="left:1879px;top:45px;width:1px;height:19px;background:#d4d4d4;"></div>
<div style="left:1366px;top:68px;width:138px;height:25px;background:#e6e6e6;border:1px solid #adadad;"></div>
<div class="t" style="left:1372.00px;top:75.84px;font-size:12px;line-height:12px;color:#555;font-weight:bold;">abc</div>
<div class="t" style="left:1396.00px;top:74.30px;font-size:15px;line-height:15px;color:#000;">id</div>
<svg style="position:absolute;left:1484px;top:77px;" width="12" height="7" viewBox="0 0 12 7"><path d="M0.5 0.5L6 6L11.5 0.5" stroke="#333" fill="none" stroke-width="1"/></svg>
<div class="t" style="left:1508.00px;top:75.30px;font-size:15px;line-height:15px;color:#000;">=</div>
<div style="left:1520px;top:69px;width:25px;height:24px;background:#e4e4e4;border:1px solid #adadad;"></div>
<div class="t" style="left:1524.50px;top:67.84px;font-size:25px;line-height:25px;color:#6a3a7a;font-family:"Liberation Serif",serif;">ε</div>
<div style="left:1553px;top:68px;width:209px;height:25px;background:#fff;border:1px solid #7a7a7a;"></div>
<svg style="position:absolute;left:1741px;top:77px;" width="12" height="7" viewBox="0 0 12 7"><path d="M0.5 0.5L6 6L11.5 0.5" stroke="#333" fill="none" stroke-width="1"/></svg>
<div style="left:1767px;top:71px;width:108px;height:20px;background:#e1e1e1;border:1px solid #adadad;"></div>
<div class="t" style="left:1772.50px;top:74.15px;font-size:14px;line-height:14px;color:#000;transform:scaleX(0.9071);transform-origin:0 0;">Alle aktualisieren</div>
<div style="left:1881px;top:71px;width:45px;height:20px;background:#e1e1e1;border:1px solid #adadad;"></div>
<div class="t" style="left:1887.00px;top:74.15px;font-size:14px;line-height:14px;color:#000;">Gewä</div>
<div style="left:1363px;top:97px;width:557px;height:884px;background:#fff;"></div>
<div style="left:1364px;top:98px;width:36px;height:883px;background:linear-gradient(90deg,#e9e9e9,#fbfbfb 40%,#fff);"></div>
<div style="left:1363px;top:97px;width:557px;height:1px;background:#a0a0a0;"></div>
<div style="left:1400px;top:98px;width:1px;height:50px;background:#e3e3e3;"></div>
<div style="left:1574px;top:98px;width:1px;height:50px;background:#e3e3e3;"></div>
<div style="left:1719px;top:98px;width:1px;height:50px;background:#e3e3e3;"></div>
<div style="left:1858px;top:98px;width:1px;height:50px;background:#e3e3e3;"></div>
<svg style="position:absolute;left:1481px;top:99px;" width="13" height="7" viewBox="0 0 13 7"><path d="M0.5 6.5L6.5 0.5L12.5 6.5" stroke="#555" fill="none" stroke-width="1"/></svg>
<div class="t" style="left:1447.53px;top:116.73px;font-size:14.5px;line-height:14.5px;color:#000;transform:scaleX(0.9450);transform-origin:0 0;">wgs_84_dec</div>
<div class="t" style="left:1632.53px;top:116.73px;font-size:14.5px;line-height:14.5px;color:#000;transform:scaleX(0.9450);transform-origin:0 0;">y_lat</div>
<div class="t" style="left:1772.12px;top:116.73px;font-size:14.5px;line-height:14.5px;color:#000;transform:scaleX(0.9450);transform-origin:0 0;">x_lon</div>
<div class="t" style="left:1887.00px;top:106.73px;font-size:14.5px;line-height:14.5px;color:#000;transform:scaleX(0.9450);transform-origin:0 0;">pfl_</div>
<div class="t" style="left:1887.00px;top:125.73px;font-size:14.5px;line-height:14.5px;color:#000;transform:scaleX(0.9450);transform-origin:0 0;">ges</div>
<div style="left:1363px;top:148px;width:557px;height:833px;overflow:hidden;">
<div style="left:37px;top:0px;width:520px;height:37px;background:#ffffff;"></div>
<div style="left:37px;top:36px;width:520px;height:1px;background:#d8d8d8;"></div>
<div style="left:37px;top:0px;width:1px;height:37px;background:#d8d8d8;"></div>
<div style="left:211px;top:0px;width:1px;height:37px;background:#d8d8d8;"></div>
<div style="left:356px;top:0px;width:1px;height:37px;background:#d8d8d8;"></div>
<div style="left:495px;top:0px;width:1px;height:37px;background:#d8d8d8;"></div>
<div class="t" style="left:6.00px;top:13.13px;font-size:14.5px;line-height:14.5px;color:#000;">1</div>
<div class="t" style="left:41.00px;top:10.90px;font-size:15px;line-height:15px;color:#000;transform:scaleX(0.9400);transform-origin:0 0;">48.72850,8.64254</div>
<div class="t" style="left:223.67px;top:10.90px;font-size:15px;line-height:15px;color:#000;transform:scaleX(0.9400);transform-origin:0 0;">48,72854175041157</div>
<div class="t" style="left:361.63px;top:10.90px;font-size:15px;line-height:15px;color:#000;transform:scaleX(0.9400);transform-origin:0 0;">8,642666887682694</div>
<div class="t" style="left:499.60px;top:11.66px;font-size:14.1px;line-height:14.1px;color:#8a8a8a;font-style:italic;transform:scaleX(0.9349);transform-origin:0 0;">NULL</div>
<div style="left:37px;top:37px;width:520px;height:37px;background:#0078d7;"></div>
<div style="left:37px;top:73px;width:520px;height:1px;background:#d8d8d8;"></div>
<div style="left:37px;top:37px;width:1px;height:37px;background:#4da0e6;"></div>
<div style="left:211px;top:37px;width:1px;height:37px;background:#4da0e6;"></div>
<div style="left:356px;top:37px;width:1px;height:37px;background:#4da0e6;"></div>
<div style="left:495px;top:37px;width:1px;height:37px;background:#4da0e6;"></div>
<div class="t" style="left:6.00px;top:50.13px;font-size:14.5px;line-height:14.5px;color:#000;">2</div>
<div class="t" style="left:41.00px;top:47.90px;font-size:15px;line-height:15px;color:#fff;transform:scaleX(0.9400);transform-origin:0 0;">48.72850,8.64254</div>
<div class="t" style="left:301.04px;top:47.90px;font-size:15px;line-height:15px;color:#fff;transform:scaleX(0.9400);transform-origin:0 0;">48,7285</div>
<div class="t" style="left:440.04px;top:47.90px;font-size:15px;line-height:15px;color:#fff;transform:scaleX(0.9400);transform-origin:0 0;">8,64254</div>
<div class="t" style="left:499.60px;top:48.66px;font-size:14.1px;line-height:14.1px;color:#fff;font-style:italic;transform:scaleX(0.9349);transform-origin:0 0;">NULL</div>
<div style="left:37px;top:74px;width:520px;height:37px;background:#ffffff;"></div>
<div style="left:37px;top:110px;width:520px;height:1px;background:#d8d8d8;"></div>
<div style="left:37px;top:74px;width:1px;height:37px;background:#d8d8d8;"></div>
<div style="left:211px;top:74px;width:1px;height:37px;background:#d8d8d8;"></div>
<div style="left:356px;top:74px;width:1px;height:37px;background:#d8d8d8;"></div>
<div style="left:495px;top:74px;width:1px;height:37px;background:#d8d8d8;"></div>
<div class="t" style="left:6.00px;top:87.13px;font-size:14.5px;line-height:14.5px;color:#000;">3</div>
<div class="t" style="left:41.00px;top:84.90px;font-size:15px;line-height:15px;color:#000;transform:scaleX(0.9400);transform-origin:0 0;">48.72869,8.64222</div>
<div class="t" style="left:293.20px;top:84.90px;font-size:15px;line-height:15px;color:#000;transform:scaleX(0.9400);transform-origin:0 0;">48,72869</div>
<div class="t" style="left:440.04px;top:84.90px;font-size:15px;line-height:15px;color:#000;transform:scaleX(0.9400);transform-origin:0 0;">8,64222</div>
<div class="t" style="left:499.60px;top:85.66px;font-size:14.1px;line-height:14.1px;color:#8a8a8a;font-style:italic;transform:scaleX(0.9349);transform-origin:0 0;">NULL</div>
<div style="left:37px;top:111px;width:520px;height:37px;background:#f5f5f5;"></div>
<div style="left:37px;top:147px;width:520px;height:1px;background:#d8d8d8;"></div>
<div style="left:37px;top:111px;width:1px;height:37px;background:#d8d8d8;"></div>
<div style="left:211px;top:111px;width:1px;height:37px;background:#d8d8d8;"></div>
<div style="left:356px;top:111px;width:1px;height:37px;background:#d8d8d8;"></div>
<div style="left:495px;top:111px;width:1px;height:37px;background:#d8d8d8;"></div>
<div class="t" style="left:6.00px;top:124.13px;font-size:14.5px;line-height:14.5px;color:#000;">4</div>
<div class="t" style="left:41.00px;top:121.90px;font-size:15px;line-height:15px;color:#000;transform:scaleX(0.9400);transform-origin:0 0;">48.72869,8.64222</div>
<div class="t" style="left:293.20px;top:121.90px;font-size:15px;line-height:15px;color:#000;transform:scaleX(0.9400);transform-origin:0 0;">48,72869</div>
<div class="t" style="left:440.04px;top:121.90px;font-size:15px;line-height:15px;color:#000;transform:scaleX(0.9400);transform-origin:0 0;">8,64222</div>
<div class="t" style="left:499.60px;top:122.66px;font-size:14.1px;line-height:14.1px;color:#8a8a8a;font-style:italic;transform:scaleX(0.9349);transform-origin:0 0;">NULL</div>
<div style="left:37px;top:148px;width:520px;height:37px;background:#ffffff;"></div>
<div style="left:37px;top:184px;width:520px;height:1px;background:#d8d8d8;"></div>
<div style="left:37px;top:148px;width:1px;height:37px;background:#d8d8d8;"></div>
<div style="left:211px;top:148px;width:1px;height:37px;background:#d8d8d8;"></div>
<div style="left:356px;top:148px;width:1px;height:37px;background:#d8d8d8;"></div>
<div style="left:495px;top:148px;width:1px;height:37px;background:#d8d8d8;"></div>
<div class="t" style="left:6.00px;top:161.13px;font-size:14.5px;line-height:14.5px;color:#000;">5</div>
<div class="t" style="left:41.00px;top:158.90px;font-size:15px;line-height:15px;color:#000;transform:scaleX(0.9400);transform-origin:0 0;">48.72869,8.64222</div>
<div class="t" style="left:293.20px;top:158.90px;font-size:15px;line-height:15px;color:#000;transform:scaleX(0.9400);transform-origin:0 0;">48,72869</div>
<div class="t" style="left:440.04px;top:158.90px;font-size:15px;line-height:15px;color:#000;transform:scaleX(0.9400);transform-origin:0 0;">8,64222</div>
<div class="t" style="left:499.60px;top:159.66px;font-size:14.1px;line-height:14.1px;color:#8a8a8a;font-style:italic;transform:scaleX(0.9349);transform-origin:0 0;">NULL</div>
<div style="left:37px;top:185px;width:520px;height:37px;background:#f5f5f5;"></div>
<div style="left:37px;top:221px;width:520px;height:1px;background:#d8d8d8;"></div>
<div style="left:37px;top:185px;width:1px;height:37px;background:#d8d8d8;"></div>
<div style="left:211px;top:185px;width:1px;height:37px;background:#d8d8d8;"></div>
<div style="left:356px;top:185px;width:1px;height:37px;background:#d8d8d8;"></div>
<div style="left:495px;top:185px;width:1px;height:37px;background:#d8d8d8;"></div>
<div class="t" style="left:6.00px;top:198.13px;font-size:14.5px;line-height:14.5px;color:#000;">6</div>
<div class="t" style="left:41.00px;top:195.90px;font-size:15px;line-height:15px;color:#000;transform:scaleX(0.9400);transform-origin:0 0;">48.72884,8.64169</div>
<div class="t" style="left:293.20px;top:195.90px;font-size:15px;line-height:15px;color:#000;transform:scaleX(0.9400);transform-origin:0 0;">48,72884</div>
<div class="t" style="left:440.04px;top:195.90px;font-size:15px;line-height:15px;color:#000;transform:scaleX(0.9400);transform-origin:0 0;">8,64169</div>
<div class="t" style="left:499.60px;top:196.66px;font-size:14.1px;line-height:14.1px;color:#8a8a8a;font-style:italic;transform:scaleX(0.9349);transform-origin:0 0;">NULL</div>
<div style="left:37px;top:222px;width:520px;height:37px;background:#ffffff;"></div>
<div style="left:37px;top:258px;width:520px;height:1px;background:#d8d8d8;"></div>
<div style="left:37px;top:222px;width:1px;height:37px;background:#d8d8d8;"></div>
<div style="left:211px;top:222px;width:1px;height:37px;background:#d8d8d8;"></div>
<div style="left:356px;top:222px;width:1px;height:37px;background:#d8d8d8;"></div>
<div style="left:495px;top:222px;width:1px;height:37px;background:#d8d8d8;"></div>
<div class="t" style="left:6.00px;top:235.13px;font-size:14.5px;line-height:14.5px;color:#000;">7</div>
<div class="t" style="left:41.00px;top:232.90px;font-size:15px;line-height:15px;color:#000;transform:scaleX(0.9400);transform-origin:0 0;">48.72884,8.64194</div>
<div class="t" style="left:293.20px;top:232.90px;font-size:15px;line-height:15px;color:#000;transform:scaleX(0.9400);transform-origin:0 0;">48,72884</div>
<div class="t" style="left:440.04px;top:232.90px;font-size:15px;line-height:15px;color:#000;transform:scaleX(0.9400);transform-origin:0 0;">8,64194</div>
<div class="t" style="left:499.60px;top:233.66px;font-size:14.1px;line-height:14.1px;color:#8a8a8a;font-style:italic;transform:scaleX(0.9349);transform-origin:0 0;">NULL</div>
<div style="left:37px;top:259px;width:520px;height:37px;background:#f5f5f5;"></div>
<div style="left:37px;top:295px;width:520px;height:1px;background:#d8d8d8;"></div>
<div style="left:37px;top:259px;width:1px;height:37px;background:#d8d8d8;"></div>
<div style="left:211px;top:259px;width:1px;height:37px;background:#d8d8d8;"></div>
<div style="left:356px;top:259px;width:1px;height:37px;background:#d8d8d8;"></div>
<div style="left:495px;top:259px;width:1px;height:37px;background:#d8d8d8;"></div>
<div class="t" style="left:6.00px;top:272.13px;font-size:14.5px;line-height:14.5px;color:#000;">8</div>
<div class="t" style="left:41.00px;top:269.90px;font-size:15px;line-height:15px;color:#000;transform:scaleX(0.9400);transform-origin:0 0;">48.72884,8.64194</div>
<div class="t" style="left:293.20px;top:269.90px;font-size:15px;line-height:15px;color:#000;transform:scaleX(0.9400);transform-origin:0 0;">48,72884</div>
<div class="t" style="left:440.04px;top:269.90px;font-size:15px;line-height:15px;color:#000;transform:scaleX(0.9400);transform-origin:0 0;">8,64194</div>
<div class="t" style="left:499.60px;top:270.66px;font-size:14.1px;line-height:14.1px;color:#8a8a8a;font-style:italic;transform:scaleX(0.9349);transform-origin:0 0;">NULL</div>
<div style="left:37px;top:296px;width:520px;height:37px;background:#ffffff;"></div>
<div style="left:37px;top:332px;width:520px;height:1px;background:#d8d8d8;"></div>
<div style="left:37px;top:296px;width:1px;height:37px;background:#d8d8d8;"></div>
<div style="left:211px;top:296px;width:1px;height:37px;background:#d8d8d8;"></div>
<div style="left:356px;top:296px;width:1px;height:37px;background:#d8d8d8;"></div>
<div style="left:495px;top:296px;width:1px;height:37px;background:#d8d8d8;"></div>
<div class="t" style="left:6.00px;top:309.13px;font-size:14.5px;line-height:14.5px;color:#000;">9</div>
<div class="t" style="left:41.00px;top:306.90px;font-size:15px;line-height:15px;color:#000;transform:scaleX(0.9400);transform-origin:0 0;">48.728935,8.641590</div>
<div class="t" style="left:285.36px;top:306.90px;font-size:15px;line-height:15px;color:#000;transform:scaleX(0.9400);transform-origin:0 0;">48,728935</div>
<div class="t" style="left:440.04px;top:306.90px;font-size:15px;line-height:15px;color:#000;transform:scaleX(0.9400);transform-origin:0 0;">8,64159</div>
<div class="t" style="left:499.60px;top:307.66px;font-size:14.1px;line-height:14.1px;color:#8a8a8a;font-style:italic;transform:scaleX(0.9349);transform-origin:0 0;">NULL</div>
<div style="left:37px;top:333px;width:520px;height:37px;background:#f5f5f5;"></div>
<div style="left:37px;top:369px;width:520px;height:1px;background:#d8d8d8;"></div>
<div style="left:37px;top:333px;width:1px;height:37px;background:#d8d8d8;"></div>
<div style="left:211px;top:333px;width:1px;height:37px;background:#d8d8d8;"></div>
<div style="left:356px;top:333px;width:1px;height:37px;background:#d8d8d8;"></div>
<div style="left:495px;top:333px;width:1px;height:37px;background:#d8d8d8;"></div>
<div class="t" style="left:6.00px;top:346.13px;font-size:14.5px;line-height:14.5px;color:#000;">10</div>
<div class="t" style="left:41.00px;top:343.90px;font-size:15px;line-height:15px;color:#000;transform:scaleX(0.9400);transform-origin:0 0;">48.72914,8.65317</div>
<div class="t" style="left:293.20px;top:343.90px;font-size:15px;line-height:15px;color:#000;transform:scaleX(0.9400);transform-origin:0 0;">48,72914</div>
<div class="t" style="left:440.04px;top:343.90px;font-size:15px;line-height:15px;color:#000;transform:scaleX(0.9400);transform-origin:0 0;">8,65317</div>
<div class="t" style="left:499.60px;top:344.66px;font-size:14.1px;line-height:14.1px;color:#8a8a8a;font-style:italic;transform:scaleX(0.9349);transform-origin:0 0;">NULL</div>
<div style="left:37px;top:370px;width:520px;height:37px;background:#ffffff;"></div>
<div style="left:37px;top:406px;width:520px;height:1px;background:#d8d8d8;"></div>
<div style="left:37px;top:370px;width:1px;height:37px;background:#d8d8d8;"></div>
<div style="left:211px;top:370px;width:1px;height:37px;background:#d8d8d8;"></div>
<div style="left:356px;top:370px;width:1px;height:37px;background:#d8d8d8;"></div>
<div style="left:495px;top:370px;width:1px;height:37px;background:#d8d8d8;"></div>
<div class="t" style="left:6.00px;top:383.13px;font-size:14.5px;line-height:14.5px;color:#000;">11</div>
<div class="t" style="left:41.00px;top:380.90px;font-size:15px;line-height:15px;color:#000;transform:scaleX(0.9400);transform-origin:0 0;">48.72917,8.64141</div>
<div class="t" style="left:293.20px;top:380.90px;font-size:15px;line-height:15px;color:#000;transform:scaleX(0.9400);transform-origin:0 0;">48,72917</div>
<div class="t" style="left:440.04px;top:380.90px;font-size:15px;line-height:15px;color:#000;transform:scaleX(0.9400);transform-origin:0 0;">8,64141</div>
<div class="t" style="left:499.60px;top:381.66px;font-size:14.1px;line-height:14.1px;color:#8a8a8a;font-style:italic;transform:scaleX(0.9349);transform-origin:0 0;">NULL</div>
<div style="left:37px;top:407px;width:520px;height:37px;background:#f5f5f5;"></div>
<div style="left:37px;top:443px;width:520px;height:1px;background:#d8d8d8;"></div>
<div style="left:37px;top:407px;width:1px;height:37px;background:#d8d8d8;"></div>
<div style="left:211px;top:407px;width:1px;height:37px;background:#d8d8d8;"></div>
<div style="left:356px;top:407px;width:1px;height:37px;background:#d8d8d8;"></div>
<div style="left:495px;top:407px;width:1px;height:37px;background:#d8d8d8;"></div>
<div class="t" style="left:6.00px;top:420.13px;font-size:14.5px;line-height:14.5px;color:#000;">12</div>
<div class="t" style="left:41.00px;top:417.90px;font-size:15px;line-height:15px;color:#000;transform:scaleX(0.9400);transform-origin:0 0;">48.72927,8.64240</div>
<div class="t" style="left:293.20px;top:417.90px;font-size:15px;line-height:15px;color:#000;transform:scaleX(0.9400);transform-origin:0 0;">48,72927</div>
<div class="t" style="left:447.88px;top:417.90px;font-size:15px;line-height:15px;color:#000;transform:scaleX(0.9400);transform-origin:0 0;">8,6424</div>
<div class="t" style="left:499.60px;top:418.66px;font-size:14.1px;line-height:14.1px;color:#8a8a8a;font-style:italic;transform:scaleX(0.9349);transform-origin:0 0;">NULL</div>
<div style="left:37px;top:444px;width:520px;height:37px;background:#ffffff;"></div>
<div style="left:37px;top:480px;width:520px;height:1px;background:#d8d8d8;"></div>
<div style="left:37px;top:444px;width:1px;height:37px;background:#d8d8d8;"></div>
<div style="left:211px;top:444px;width:1px;height:37px;background:#d8d8d8;"></div>
<div style="left:356px;top:444px;width:1px;height:37px;background:#d8d8d8;"></div>
<div style="left:495px;top:444px;width:1px;height:37px;background:#d8d8d8;"></div>
<div class="t" style="left:6.00px;top:457.13px;font-size:14.5px;line-height:14.5px;color:#000;">13</div>
<div class="t" style="left:41.00px;top:454.90px;font-size:15px;line-height:15px;color:#000;transform:scaleX(0.9400);transform-origin:0 0;">48.72927,8.64240</div>
<div class="t" style="left:293.20px;top:454.90px;font-size:15px;line-height:15px;color:#000;transform:scaleX(0.9400);transform-origin:0 0;">48,72927</div>
<div class="t" style="left:447.88px;top:454.90px;font-size:15px;line-height:15px;color:#000;transform:scaleX(0.9400);transform-origin:0 0;">8,6424</div>
<div class="t" style="left:499.60px;top:455.66px;font-size:14.1px;line-height:14.1px;color:#8a8a8a;font-style:italic;transform:scaleX(0.9349);transform-origin:0 0;">NULL</div>
<div style="left:37px;top:481px;width:520px;height:37px;background:#f5f5f5;"></div>
<div style="left:37px;top:517px;width:520px;height:1px;background:#d8d8d8;"></div>
<div style="left:37px;top:481px;width:1px;height:37px;background:#d8d8d8;"></div>
<div style="left:211px;top:481px;width:1px;height:37px;background:#d8d8d8;"></div>
<div style="left:356px;top:481px;width:1px;height:37px;background:#d8d8d8;"></div>
<div style="left:495px;top:481px;width:1px;height:37px;background:#d8d8d8;"></div>
<div class="t" style="left:6.00px;top:494.13px;font-size:14.5px;line-height:14.5px;color:#000;">14</div>
<div class="t" style="left:41.00px;top:491.90px;font-size:15px;line-height:15px;color:#000;transform:scaleX(0.9400);transform-origin:0 0;">48.72927,8.64240</div>
<div class="t" style="left:293.20px;top:491.90px;font-size:15px;line-height:15px;color:#000;transform:scaleX(0.9400);transform-origin:0 0;">48,72927</div>
<div class="t" style="left:447.88px;top:491.90px;font-size:15px;line-height:15px;color:#000;transform:scaleX(0.9400);transform-origin:0 0;">8,6424</div>
<div class="t" style="left:499.60px;top:492.66px;font-size:14.1px;line-height:14.1px;color:#8a8a8a;font-style:italic;transform:scaleX(0.9349);transform-origin:0 0;">NULL</div>
<div style="left:37px;top:518px;width:520px;height:37px;background:#ffffff;"></div>
<div style="left:37px;top:554px;width:520px;height:1px;background:#d8d8d8;"></div>
<div style="left:37px;top:518px;width:1px;height:37px;background:#d8d8d8;"></div>
<div style="left:211px;top:518px;width:1px;height:37px;background:#d8d8d8;"></div>
<div style="left:356px;top:518px;width:1px;height:37px;background:#d8d8d8;"></div>
<div style="left:495px;top:518px;width:1px;height:37px;background:#d8d8d8;"></div>
<div class="t" style="left:6.00px;top:531.13px;font-size:14.5px;line-height:14.5px;color:#000;">15</div>
<div class="t" style="left:41.00px;top:528.90px;font-size:15px;line-height:15px;color:#000;transform:scaleX(0.9400);transform-origin:0 0;">48.72928,8.64283</div>
<div class="t" style="left:293.20px;top:528.90px;font-size:15px;line-height:15px;color:#000;transform:scaleX(0.9400);transform-origin:0 0;">48,72928</div>
<div class="t" style="left:440.04px;top:528.90px;font-size:15px;line-height:15px;color:#000;transform:scaleX(0.9400);transform-origin:0 0;">8,64283</div>
<div class="t" style="left:499.60px;top:529.66px;font-size:14.1px;line-height:14.1px;color:#8a8a8a;font-style:italic;transform:scaleX(0.9349);transform-origin:0 0;">NULL</div>
<div style="left:37px;top:555px;width:520px;height:37px;background:#f5f5f5;"></div>
<div style="left:37px;top:591px;width:520px;height:1px;background:#d8d8d8;"></div>
<div style="left:37px;top:555px;width:1px;height:37px;background:#d8d8d8;"></div>
<div style="left:211px;top:555px;width:1px;height:37px;background:#d8d8d8;"></div>
<div style="left:356px;top:555px;width:1px;height:37px;background:#d8d8d8;"></div>
<div style="left:495px;top:555px;width:1px;height:37px;background:#d8d8d8;"></div>
<div class="t" style="left:6.00px;top:568.13px;font-size:14.5px;line-height:14.5px;color:#000;">16</div>
<div class="t" style="left:41.00px;top:565.90px;font-size:15px;line-height:15px;color:#000;transform:scaleX(0.9400);transform-origin:0 0;">48.729288,8.641580</div>
<div class="t" style="left:285.36px;top:565.90px;font-size:15px;line-height:15px;color:#000;transform:scaleX(0.9400);transform-origin:0 0;">48,729288</div>
<div class="t" style="left:440.04px;top:565.90px;font-size:15px;line-height:15px;color:#000;transform:scaleX(0.9400);transform-origin:0 0;">8,64158</div>
<div class="t" style="left:499.60px;top:566.66px;font-size:14.1px;line-height:14.1px;color:#8a8a8a;font-style:italic;transform:scaleX(0.9349);transform-origin:0 0;">NULL</div>
<div style="left:37px;top:592px;width:520px;height:37px;background:#ffffff;"></div>
<div style="left:37px;top:628px;width:520px;height:1px;background:#d8d8d8;"></div>
<div style="left:37px;top:592px;width:1px;height:37px;background:#d8d8d8;"></div>
<div style="left:211px;top:592px;width:1px;height:37px;background:#d8d8d8;"></div>
<div style="left:356px;top:592px;width:1px;height:37px;background:#d8d8d8;"></div>
<div style="left:495px;top:592px;width:1px;height:37px;background:#d8d8d8;"></div>
<div class="t" style="left:6.00px;top:605.13px;font-size:14.5px;line-height:14.5px;color:#000;">17</div>
<div class="t" style="left:41.00px;top:602.90px;font-size:15px;line-height:15px;color:#000;transform:scaleX(0.9400);transform-origin:0 0;">48.729288,8.641580</div>
<div class="t" style="left:285.36px;top:602.90px;font-size:15px;line-height:15px;color:#000;transform:scaleX(0.9400);transform-origin:0 0;">48,729288</div>
<div class="t" style="left:440.04px;top:602.90px;font-size:15px;line-height:15px;color:#000;transform:scaleX(0.9400);transform-origin:0 0;">8,64158</div>
<div class="t" style="left:499.60px;top:603.66px;font-size:14.1px;line-height:14.1px;color:#8a8a8a;font-style:italic;transform:scaleX(0.9349);transform-origin:0 0;">NULL</div>
<div style="left:37px;top:629px;width:520px;height:37px;background:#f5f5f5;"></div>
<div style="left:37px;top:665px;width:520px;height:1px;background:#d8d8d8;"></div>
<div style="left:37px;top:629px;width:1px;height:37px;background:#d8d8d8;"></div>
<div style="left:211px;top:629px;width:1px;height:37px;background:#d8d8d8;"></div>
<div style="left:356px;top:629px;width:1px;height:37px;background:#d8d8d8;"></div>
<div style="left:495px;top:629px;width:1px;height:37px;background:#d8d8d8;"></div>
<div class="t" style="left:6.00px;top:642.13px;font-size:14.5px;line-height:14.5px;color:#000;">18</div>
<div class="t" style="left:41.00px;top:639.90px;font-size:15px;line-height:15px;color:#000;transform:scaleX(0.9400);transform-origin:0 0;">48.729288,8.641580</div>
<div class="t" style="left:285.36px;top:639.90px;font-size:15px;line-height:15px;color:#000;transform:scaleX(0.9400);transform-origin:0 0;">48,729288</div>
<div class="t" style="left:440.04px;top:639.90px;font-size:15px;line-height:15px;color:#000;transform:scaleX(0.9400);transform-origin:0 0;">8,64158</div>
<div class="t" style="left:499.60px;top:640.66px;font-size:14.1px;line-height:14.1px;color:#8a8a8a;font-style:italic;transform:scaleX(0.9349);transform-origin:0 0;">NULL</div>
<div style="left:37px;top:666px;width:520px;height:37px;background:#ffffff;"></div>
<div style="left:37px;top:702px;width:520px;height:1px;background:#d8d8d8;"></div>
<div style="left:37px;top:666px;width:1px;height:37px;background:#d8d8d8;"></div>
<div style="left:211px;top:666px;width:1px;height:37px;background:#d8d8d8;"></div>
<div style="left:356px;top:666px;width:1px;height:37px;background:#d8d8d8;"></div>
<div style="left:495px;top:666px;width:1px;height:37px;background:#d8d8d8;"></div>
<div class="t" style="left:6.00px;top:679.13px;font-size:14.5px;line-height:14.5px;color:#000;">19</div>
<div class="t" style="left:41.00px;top:676.90px;font-size:15px;line-height:15px;color:#000;transform:scaleX(0.9400);transform-origin:0 0;">48.72932,8.64190</div>
<div class="t" style="left:222.63px;top:676.90px;font-size:15px;line-height:15px;color:#000;transform:scaleX(0.9400);transform-origin:0 0;">48,72935008329269</div>
<div class="t" style="left:361.63px;top:676.90px;font-size:15px;line-height:15px;color:#000;transform:scaleX(0.9400);transform-origin:0 0;">8,641700101728889</div>
<div class="t" style="left:499.60px;top:677.66px;font-size:14.1px;line-height:14.1px;color:#000;">vps</div>
<div style="left:37px;top:703px;width:520px;height:37px;background:#f5f5f5;"></div>
<div style="left:37px;top:739px;width:520px;height:1px;background:#d8d8d8;"></div>
<div style="left:37px;top:703px;width:1px;height:37px;background:#d8d8d8;"></div>
<div style="left:211px;top:703px;width:1px;height:37px;background:#d8d8d8;"></div>
<div style="left:356px;top:703px;width:1px;height:37px;background:#d8d8d8;"></div>
<div style="left:495px;top:703px;width:1px;height:37px;background:#d8d8d8;"></div>
<div class="t" style="left:6.00px;top:716.13px;font-size:14.5px;line-height:14.5px;color:#000;">20</div>
<div class="t" style="left:41.00px;top:713.90px;font-size:15px;line-height:15px;color:#000;transform:scaleX(0.9400);transform-origin:0 0;">48.72937,8.64226</div>
<div class="t" style="left:222.63px;top:713.90px;font-size:15px;line-height:15px;color:#000;transform:scaleX(0.9400);transform-origin:0 0;">48,72929028698386</div>
<div class="t" style="left:361.63px;top:713.90px;font-size:15px;line-height:15px;color:#000;transform:scaleX(0.9400);transform-origin:0 0;">8,642297922929604</div>
<div class="t" style="left:499.60px;top:714.66px;font-size:14.1px;line-height:14.1px;color:#8a8a8a;font-style:italic;transform:scaleX(0.9349);transform-origin:0 0;">NULL</div>
<div style="left:37px;top:740px;width:520px;height:37px;background:#ffffff;"></div>
<div style="left:37px;top:776px;width:520px;height:1px;background:#d8d8d8;"></div>
<div style="left:37px;top:740px;width:1px;height:37px;background:#d8d8d8;"></div>
<div style="left:211px;top:740px;width:1px;height:37px;background:#d8d8d8;"></div>
<div style="left:356px;top:740px;width:1px;height:37px;background:#d8d8d8;"></div>
<div style="left:495px;top:740px;width:1px;height:37px;background:#d8d8d8;"></div>
<div class="t" style="left:6.00px;top:753.13px;font-size:14.5px;line-height:14.5px;color:#000;">21</div>
<div class="t" style="left:41.00px;top:750.90px;font-size:15px;line-height:15px;color:#000;transform:scaleX(0.9400);transform-origin:0 0;">48.72937,8.64226</div>
<div class="t" style="left:230.47px;top:750.90px;font-size:15px;line-height:15px;color:#000;transform:scaleX(0.9400);transform-origin:0 0;">48,7292902879436</div>
<div class="t" style="left:361.63px;top:750.90px;font-size:15px;line-height:15px;color:#000;transform:scaleX(0.9400);transform-origin:0 0;">8,642297922922795</div>
<div class="t" style="left:499.60px;top:751.66px;font-size:14.1px;line-height:14.1px;color:#8a8a8a;font-style:italic;transform:scaleX(0.9349);transform-origin:0 0;">NULL</div>
<div style="left:37px;top:777px;width:520px;height:37px;background:#f5f5f5;"></div>
<div style="left:37px;top:813px;width:520px;height:1px;background:#d8d8d8;"></div>
<div style="left:37px;top:777px;width:1px;height:37px;background:#d8d8d8;"></div>
<div style="left:211px;top:777px;width:1px;height:37px;background:#d8d8d8;"></div>
<div style="left:356px;top:777px;width:1px;height:37px;background:#d8d8d8;"></div>
<div style="left:495px;top:777px;width:1px;height:37px;background:#d8d8d8;"></div>
<div class="t" style="left:6.00px;top:790.13px;font-size:14.5px;line-height:14.5px;color:#000;">22</div>
<div class="t" style="left:41.00px;top:787.90px;font-size:15px;line-height:15px;color:#000;transform:scaleX(0.9400);transform-origin:0 0;">48.72938,8.64311</div>
<div class="t" style="left:293.20px;top:787.90px;font-size:15px;line-height:15px;color:#000;transform:scaleX(0.9400);transform-origin:0 0;">48,72938</div>
<div class="t" style="left:441.08px;top:787.90px;font-size:15px;line-height:15px;color:#000;transform:scaleX(0.9400);transform-origin:0 0;">8,64311</div>
<div class="t" style="left:499.60px;top:788.66px;font-size:14.1px;line-height:14.1px;color:#8a8a8a;font-style:italic;transform:scaleX(0.9349);transform-origin:0 0;">NULL</div>
<div style="left:37px;top:814px;width:520px;height:37px;background:#ffffff;"></div>
<div style="left:37px;top:850px;width:520px;height:1px;background:#d8d8d8;"></div>
<div style="left:37px;top:814px;width:1px;height:37px;background:#d8d8d8;"></div>
<div style="left:211px;top:814px;width:1px;height:37px;background:#d8d8d8;"></div>
<div style="left:356px;top:814px;width:1px;height:37px;background:#d8d8d8;"></div>
<div style="left:495px;top:814px;width:1px;height:37px;background:#d8d8d8;"></div>
<div class="t" style="left:6.00px;top:827.13px;font-size:14.5px;line-height:14.5px;color:#000;">23</div>
<div class="t" style="left:41.00px;top:824.90px;font-size:15px;line-height:15px;color:#000;transform:scaleX(0.9400);transform-origin:0 0;">48.72940,8.64233</div>
<div class="t" style="left:222.63px;top:824.90px;font-size:15px;line-height:15px;color:#000;transform:scaleX(0.9400);transform-origin:0 0;">48,72932615240857</div>
<div class="t" style="left:361.63px;top:824.90px;font-size:15px;line-height:15px;color:#000;transform:scaleX(0.9400);transform-origin:0 0;">8,642344569395767</div>
<div class="t" style="left:499.60px;top:825.66px;font-size:14.1px;line-height:14.1px;color:#8a8a8a;font-style:italic;transform:scaleX(0.9349);transform-origin:0 0;">NULL</div>
</div>
<div style="left:1363px;top:981px;width:557px;height:21px;background:#f0f0f0;"></div>
<div style="left:1385px;top:982px;width:140px;height:19px;background:#cdcdcd;"></div>
<svg style="position:absolute;left:1369px;top:986px;" width="7" height="11" viewBox="0 0 7 11"><path d="M6 0.5L1 5.5L6 10.5" stroke="#606060" fill="none" stroke-width="1.6"/></svg>
<div style="left:1363px;top:1002px;width:557px;height:1px;background:#a0a0a0;"></div>
<div style="left:1367px;top:1004px;width:160px;height:23px;background:#e1e1e1;border:1px solid #adadad;"></div>
<div class="t" style="left:1396.00px;top:1010.16px;font-size:12.8px;line-height:12.8px;color:#000;transform:scaleX(0.9798);transform-origin:0 0;">Alle Objekte anzeigen</div>
<div style="left:1358px;top:76px;width:2px;height:957px;background:#6c6e70;"></div>
<div style="left:1360px;top:76px;width:3.5px;height:957px;background:#bdbac4;"></div>
<div style="left:1363.5px;top:76px;width:1px;height:957px;background:#777;"></div>
<div style="left:1359px;top:155px;width:4px;height:50px;background:#7a6a50;"></div>
<div style="left:1359px;top:659px;width:4px;height:38px;background:#7a6a50;"></div>
<div style="left:1359px;top:0px;width:4px;height:76px;background:#1b1d2e;"></div>
<div style="left:1359px;top:1029px;width:561px;height:4px;background:#1d2540;"></div>
<svg style="position:absolute;left:1369.8px;top:1005.8px" width="20.4" height="20.4" viewBox="0 0 24 24"><path d="M2 3H22L14 13V22H10V13Z" fill="#5a9ad8" stroke="#3a6a98" stroke-width="0.8"/><rect x="2" y="2" width="20" height="4" fill="#e8c840"/></svg>
<svg style="position:absolute;left:1517px;top:1020.5px;" width="10" height="5" viewBox="0 0 10 5"><path d="M0 0H10L5 5Z" fill="#000"/></svg>
</body></html>
